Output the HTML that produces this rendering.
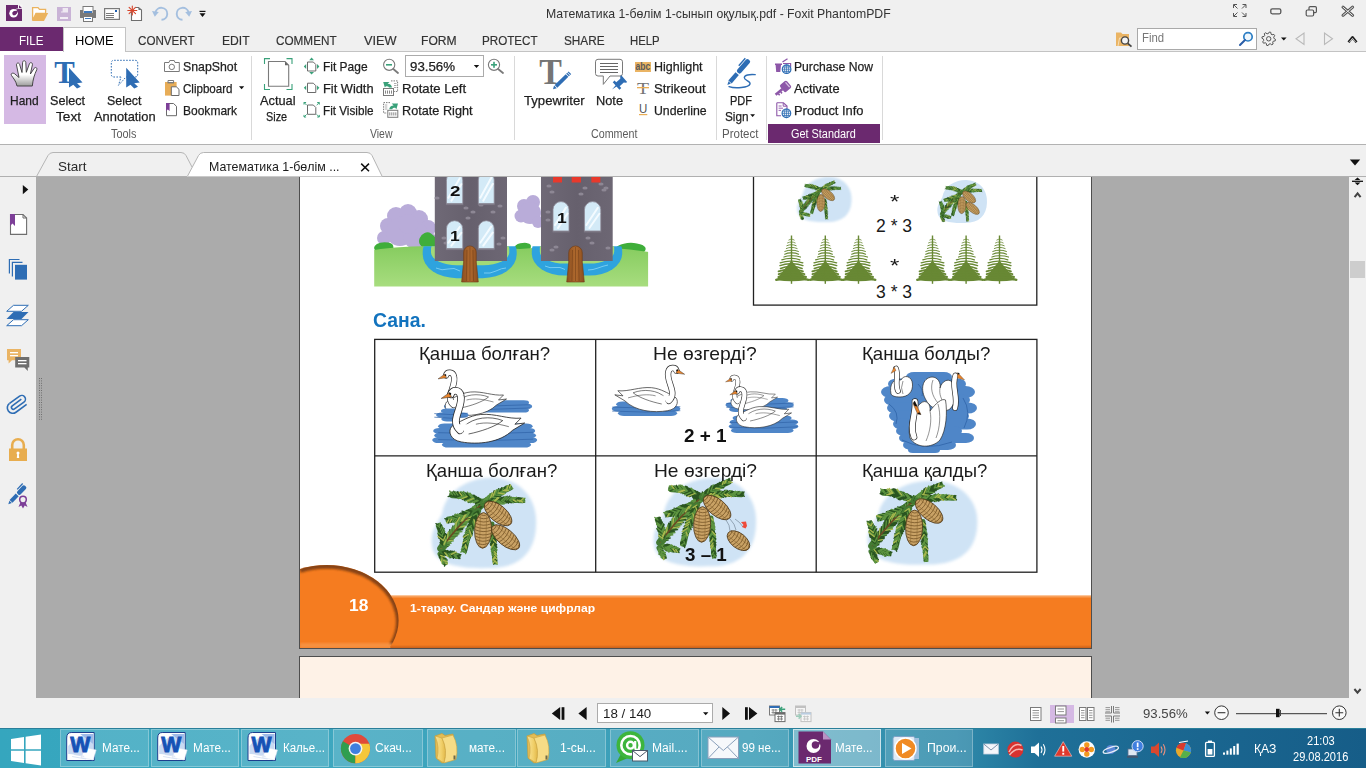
<!DOCTYPE html>
<html lang="kk">
<head>
<meta charset="utf-8">
<title>Foxit PhantomPDF</title>
<style>
*{box-sizing:border-box;margin:0;padding:0}
html,body{width:1366px;height:768px;overflow:hidden;background:#f0f0f0}
body{font-family:"Liberation Sans","DejaVu Sans",sans-serif;font-size:13px;color:#222;position:relative}
.a{position:absolute}
.t{position:absolute;white-space:nowrap;line-height:1;transform-origin:0 50%}
svg.ov{position:absolute;left:0;top:0;width:1366px;height:768px;overflow:hidden;pointer-events:none}
#titlebar{position:absolute;left:0;top:0;width:1366px;height:27px;background:#f0f0f0}
#menurow{position:absolute;left:0;top:27px;width:1366px;height:25px;background:#f0f0f0;border-bottom:1px solid #c3c3c3}
#filetab{position:absolute;left:0;top:0;width:63px;height:24px;background:#6b296f}
#hometab{position:absolute;left:63px;top:0;width:63px;height:25px;background:#fff;border:1px solid #c3c3c3;border-bottom:none}
#findbox{position:absolute;left:1137px;top:1px;width:120px;height:22px;background:#fff;border:1px solid #a9a9a9}
#ribbon{position:absolute;left:0;top:52px;width:1366px;height:93px;background:#fff;border-bottom:1px solid #b2b2b2}
.sep{position:absolute;top:56px;width:1px;height:84px;background:#d9d9d9}
#handbtn{position:absolute;left:4px;top:55px;width:42px;height:69px;background:#d5b9e4}
#zoombox{position:absolute;left:405px;top:55px;width:79px;height:22px;background:#fff;border:1px solid #ababab}
#getstd{position:absolute;left:768px;top:124px;width:112px;height:19px;background:#6b296f}
#tabstrip{position:absolute;left:0;top:145px;width:1366px;height:32px;background:#f0f0f0}
#leftnav{position:absolute;left:0;top:177px;width:36px;height:521px;background:#f0f0f0}
#docclip{position:absolute;left:0;top:0;width:1366px;height:768px;clip-path:inset(177px 17px 70px 36px)}
#docbg{position:absolute;left:36px;top:177px;width:1313px;height:521px;background:#ababab}
#vscroll{position:absolute;left:1349px;top:177px;width:17px;height:521px;background:#f0f0f0}
#status{position:absolute;left:0;top:698px;width:1366px;height:30px;background:#f0f0f0}
#pagebox{position:absolute;left:597px;top:703px;width:116px;height:20px;background:#fff;border:1px solid #ababab}
#taskbar{position:absolute;left:0;top:728px;width:1366px;height:40px;border-top:1px solid #2a7f9a;background:linear-gradient(90deg,#35a6be 0%,#3ea7bf 25%,#3b9cb6 55%,#2f8aaa 70%,#1f7098 76%,#1a6690 88%,#165d88 100%)}
.tb{position:absolute;top:729px;height:38px;background:rgba(255,255,255,.14);border:1px solid rgba(255,255,255,.28)}
.tb.act{background:rgba(255,255,255,.36);border-color:rgba(255,255,255,.6)}

</style>
</head>
<body>
<div id="docbg"></div>
<div id="docclip">
<div class="a" style="left:299px;top:170px;width:793px;height:479px;background:#fff;border:1px solid #4e4e4e"></div>
<div class="a" style="left:299px;top:656px;width:793px;height:60px;background:#fef2e7;border:1px solid #4e4e4e"></div>
<svg class="ov" viewBox="0 0 1366 768"><defs><filter id="soft" x="-10%" y="-10%" width="120%" height="120%"><feGaussianBlur stdDeviation="1.6"/></filter><linearGradient id="grass" x1="0" y1="0" x2="0" y2="1"><stop offset="0" stop-color="#86cc5f"/><stop offset="1" stop-color="#a8dd7f"/></linearGradient><linearGradient id="tw" x1="0" y1="0" x2="1" y2="0"><stop offset="0" stop-color="#6f6976"/><stop offset="0.5" stop-color="#66606d"/><stop offset="1" stop-color="#6d6774"/></linearGradient><linearGradient id="wood" x1="0" y1="0" x2="1" y2="0"><stop offset="0" stop-color="#8a4d1f"/><stop offset="0.5" stop-color="#b06a2e"/><stop offset="1" stop-color="#8a4d1f"/></linearGradient><clipPath id="castleclip"><rect x="374.2" y="170" width="273.9" height="116.5"/></clipPath><clipPath id="pageclip"><rect x="300" y="170" width="791" height="478"/></clipPath></defs>
<g clip-path="url(#castleclip)"><rect x="374.2" y="170" width="273.9" height="116.5" fill="#fff"/><g fill="#b9acd9"><circle cx="396" cy="216" r="9"/><circle cx="408" cy="213" r="9"/><circle cx="419" cy="219" r="9"/><circle cx="428" cy="228" r="8"/><circle cx="388" cy="226" r="8"/><circle cx="384" cy="238" r="7"/><circle cx="400" cy="232" r="14"/><circle cx="416" cy="236" r="13"/><circle cx="430" cy="240" r="7"/><circle cx="408" cy="224" r="10"/></g><g fill="#b9acd9"><circle cx="524" cy="206" r="7"/><circle cx="533" cy="202" r="7"/><circle cx="521" cy="216" r="6.5"/><circle cx="530" cy="213" r="11"/><circle cx="538" cy="222" r="6"/></g><path d="M393.1,245.7 Q393.8,248.0 393.2,250.3 Q392.6,252.7 388.3,253.6 Q384.0,254.5 380.4,253.2 Q376.8,251.9 374.9,250.0 Q373.0,248.0 374.7,245.9 Q376.3,243.8 380.2,242.8 Q384.0,241.7 388.2,242.6 Q392.5,243.4 393.1,245.7 Z" fill="#3fae3a"/><path d="M436.1,238.7 Q438.2,242.0 436.7,246.0 Q435.2,250.0 431.6,250.3 Q428.0,250.7 425.2,249.4 Q422.4,248.2 420.3,245.1 Q418.1,242.0 419.6,238.2 Q421.2,234.4 424.6,233.0 Q428.0,231.5 431.0,233.4 Q434.0,235.3 436.1,238.7 Z" fill="#3fae3a"/><path d="M530.7,245.1 Q531.3,247.0 530.4,248.8 Q529.4,250.6 526.2,251.2 Q523.0,251.8 519.7,251.2 Q516.4,250.6 515.0,248.8 Q513.7,247.0 515.6,245.5 Q517.5,243.9 520.2,243.3 Q523.0,242.7 526.5,242.9 Q530.0,243.1 530.7,245.1 Z" fill="#3fae3a"/><path d="M645.2,247.3 Q646.6,250.0 643.9,252.2 Q641.2,254.4 635.6,255.6 Q630.0,256.8 624.3,255.6 Q618.6,254.4 616.5,252.2 Q614.3,250.0 616.0,247.6 Q617.6,245.2 623.8,243.7 Q630.0,242.1 636.9,243.4 Q643.9,244.6 645.2,247.3 Z" fill="#3fae3a"/><path d="M606.9,247.6 Q608.3,249.0 607.2,250.5 Q606.1,252.0 603.0,252.7 Q600.0,253.4 596.8,252.8 Q593.6,252.2 592.5,250.6 Q591.4,249.0 592.5,247.4 Q593.6,245.8 596.8,245.7 Q600.0,245.6 602.8,245.9 Q605.6,246.2 606.9,247.6 Z" fill="#3fae3a"/><path d="M374,250 Q400,246 440,246 L520,249 Q585,243 649,252 V287 H374 Z" fill="url(#grass)"/><clipPath id="moatclip"><rect x="374" y="246.3" width="280" height="50"/></clipPath><g clip-path="url(#moatclip)"><rect x="422.7" y="228" width="94" height="50.2" rx="34" ry="24" fill="#2ea3de"/><rect x="431" y="236" width="78.3" height="29.2" rx="26" ry="13" fill="#a2da78"/><rect x="531.8" y="229" width="90.4" height="46.6" rx="33" ry="22" fill="#2ea3de"/><rect x="539.8" y="236" width="74.4" height="27.6" rx="25" ry="12" fill="#a2da78"/></g><path d="M436,268 q6,3 12,1 t12,2 M484,273 q6,1 12,-2 t10,-3 M545,266 q5,2.5 10,1.5 t10,2 M588,270 q5,0 10,-2 t10,-3" fill="none" stroke="#7fd0f3" stroke-width="0.9"/><rect x="434.8" y="170" width="72.19999999999999" height="91" fill="url(#tw)"/><rect x="541" y="170" width="71.70000000000005" height="91" fill="url(#tw)"/><g fill="#8d8794"><ellipse cx="466" cy="208" rx="2.6" ry="1.5"/><ellipse cx="473" cy="212" rx="2.6" ry="1.5"/><ellipse cx="468" cy="218" rx="2.6" ry="1.5"/><ellipse cx="481" cy="205" rx="2.6" ry="1.5"/><ellipse cx="493" cy="212" rx="2.6" ry="1.5"/><ellipse cx="500" cy="206" rx="2.6" ry="1.5"/><ellipse cx="444" cy="238" rx="2.6" ry="1.5"/><ellipse cx="446" cy="243" rx="2.6" ry="1.5"/><ellipse cx="503" cy="238" rx="2.6" ry="1.5"/><ellipse cx="499" cy="244" rx="2.6" ry="1.5"/><ellipse cx="437" cy="198" rx="2.6" ry="1.5"/><ellipse cx="549" cy="186" rx="2.6" ry="1.5"/><ellipse cx="552" cy="192" rx="2.6" ry="1.5"/><ellipse cx="585" cy="188" rx="2.6" ry="1.5"/><ellipse cx="581" cy="194" rx="2.6" ry="1.5"/><ellipse cx="606" cy="188" rx="2.6" ry="1.5"/><ellipse cx="601" cy="184" rx="2.6" ry="1.5"/><ellipse cx="604" cy="190" rx="2.6" ry="1.5"/><ellipse cx="588" cy="238" rx="2.6" ry="1.5"/><ellipse cx="592" cy="243" rx="2.6" ry="1.5"/><ellipse cx="556" cy="247" rx="2.6" ry="1.5"/><ellipse cx="552" cy="250" rx="2.6" ry="1.5"/><ellipse cx="608" cy="248" rx="2.6" ry="1.5"/><ellipse cx="548" cy="212" rx="2.6" ry="1.5"/><ellipse cx="548" cy="220" rx="2.6" ry="1.5"/></g><path d="M446.4,203.7 V180.20000000000002 A8.200000000000017,8.200000000000017 0 0 1 462.8,180.20000000000002 V203.7 Z" fill="#d3eaf7" stroke="#8a8592" stroke-width="0.8"/><path d="M448.4,197.7 L459.8,178.20000000000002 M451.4,200.7 L461.3,184.20000000000002" stroke="#f4fbff" stroke-width="2" fill="none" stroke-linecap="round"/><rect x="445.9" y="203.7" width="17.400000000000034" height="1.4" fill="#7f7a87"/><path d="M478.3,203.7 V179.95 A7.949999999999989,7.949999999999989 0 0 1 494.2,179.95 V203.7 Z" fill="#d3eaf7" stroke="#8a8592" stroke-width="0.8"/><path d="M480.3,197.7 L491.2,177.95 M483.3,200.7 L492.7,183.95" stroke="#f4fbff" stroke-width="2" fill="none" stroke-linecap="round"/><rect x="477.8" y="203.7" width="16.899999999999977" height="1.4" fill="#7f7a87"/><path d="M446.4,248.7 V228.9 A8.200000000000017,8.200000000000017 0 0 1 462.8,228.9 V248.7 Z" fill="#d3eaf7" stroke="#8a8592" stroke-width="0.8"/><path d="M448.4,242.7 L459.8,226.9 M451.4,245.7 L461.3,232.9" stroke="#f4fbff" stroke-width="2" fill="none" stroke-linecap="round"/><rect x="445.9" y="248.7" width="17.400000000000034" height="1.4" fill="#7f7a87"/><path d="M478.3,248.7 V228.64999999999998 A7.949999999999989,7.949999999999989 0 0 1 494.2,228.64999999999998 V248.7 Z" fill="#d3eaf7" stroke="#8a8592" stroke-width="0.8"/><path d="M480.3,242.7 L491.2,226.64999999999998 M483.3,245.7 L492.7,232.64999999999998" stroke="#f4fbff" stroke-width="2" fill="none" stroke-linecap="round"/><rect x="477.8" y="248.7" width="16.899999999999977" height="1.4" fill="#7f7a87"/><path d="M553,231 V209.6 A8.0,8.0 0 0 1 569,209.6 V231 Z" fill="#d3eaf7" stroke="#8a8592" stroke-width="0.8"/><path d="M555,225 L566,207.6 M558,228 L567.5,213.6" stroke="#f4fbff" stroke-width="2" fill="none" stroke-linecap="round"/><rect x="552.5" y="231" width="17" height="1.4" fill="#7f7a87"/><path d="M584.4,231 V209.79999999999998 A8.199999999999989,8.199999999999989 0 0 1 600.8,209.79999999999998 V231 Z" fill="#d3eaf7" stroke="#8a8592" stroke-width="0.8"/><path d="M586.4,225 L597.8,207.79999999999998 M589.4,228 L599.3,213.79999999999998" stroke="#f4fbff" stroke-width="2" fill="none" stroke-linecap="round"/><rect x="583.9" y="231" width="17.399999999999977" height="1.4" fill="#7f7a87"/><g fill="#e8392c"><rect x="553" y="170" width="9" height="12.5"/><rect x="571.7" y="170" width="9.3" height="12.5"/><rect x="591.4" y="170" width="9" height="12.5"/></g><path d="M463.6,262 V252.35 A6.349999999999994,6.349999999999994 0 0 1 476.3,252.35 V262 L478.3,282 H461.6 Z" fill="url(#wood)" stroke="#6e3a14" stroke-width="0.6"/><path d="M466.95000000000005,250 L466.35,281 M469.95000000000005,247 V281 M472.95000000000005,250 L473.55000000000007,281" stroke="#74401a" stroke-width="0.6" fill="none"/><path d="M568.7,262 V252.79999999999995 A6.7999999999999545,6.7999999999999545 0 0 1 582.3,252.79999999999995 V262 L584.3,282 H566.7 Z" fill="url(#wood)" stroke="#6e3a14" stroke-width="0.6"/><path d="M572.5,250 L571.9,281 M575.5,247 V281 M578.5,250 L579.1,281" stroke="#74401a" stroke-width="0.6" fill="none"/></g>
<rect x="753.5" y="165" width="283.3" height="140.1" fill="none" stroke="#222" stroke-width="1.3"/>
<g transform="translate(798.5,180) scale(0.52,0.5)"><path d="M8,30 C12,4 40,-8 62,-6 C88,-4 104,16 102,42 C101,68 86,84 56,84 C30,85 0,82 -2,62 C-4,48 2,42 8,30 Z" fill="#cfe3f5" filter="url(#soft)"/></g>
<g transform="translate(797.3,180.6) scale(0.48)"><path d="M7.3,64.5 Q25.2,39.0 49.0,19.0" stroke="#447a33" stroke-width="8.1" fill="none" stroke-linecap="round"/><path d="M8.0,63.4 l5.3,-0.9 M8.8,62.4 l0.4,-5.0 M9.6,61.3 l7.0,-1.2 M10.3,60.3 l0.5,-5.6 M11.1,59.3 l0.5,-5.8 M11.1,59.3 l7.7,-1.3 M11.9,58.2 l7.3,-1.2 M12.6,57.2 l0.5,-6.0 M12.6,57.2 l7.6,-1.3 M13.4,56.2 l0.5,-6.5 M13.4,56.2 l6.6,-1.1 M14.2,55.1 l0.5,-6.0 M14.2,55.1 l6.6,-1.1 M15.0,54.1 l8.4,-1.4 M15.8,53.1 l0.5,-6.2 M16.6,52.1 l0.6,-7.5 M18.2,50.1 l0.5,-6.2 M19.1,49.1 l0.6,-7.7 M19.1,49.1 l7.0,-1.2 M19.9,48.1 l7.6,-1.3 M21.6,46.2 l0.6,-7.0 M21.6,46.2 l8.8,-1.5 M22.4,45.2 l0.6,-7.8 M23.2,44.2 l7.3,-1.2 M24.1,43.3 l0.7,-8.0 M24.1,43.3 l8.0,-1.4 M24.9,42.3 l0.5,-6.0 M24.9,42.3 l6.1,-1.0 M26.7,40.4 l0.6,-7.5 M26.7,40.4 l7.1,-1.2 M27.5,39.5 l0.5,-6.0 M27.5,39.5 l7.5,-1.3 M28.4,38.5 l0.6,-7.8 M29.3,37.6 l0.5,-5.5 M30.2,36.6 l5.6,-1.0 M31.1,35.7 l5.8,-1.0 M32.9,33.9 l0.5,-5.9 M32.9,33.9 l6.1,-1.1 M33.8,33.0 l0.6,-6.8 M34.7,32.1 l0.5,-5.7 M34.7,32.1 l6.7,-1.1 M35.6,31.2 l0.5,-5.5 M35.6,31.2 l4.7,-0.8 M36.5,30.3 l0.5,-5.8 M37.5,29.4 l5.1,-0.9 M38.4,28.5 l4.1,-0.7 M40.3,26.7 l3.7,-0.6 M41.2,25.8 l0.5,-5.6 M43.1,24.1 l0.3,-3.8 M45.1,22.4 l4.1,-0.7 M46.0,21.5 l0.4,-4.3 M46.0,21.5 l5.0,-0.9 M48.0,19.8 l0.4,-5.1 M48.0,19.8 l4.2,-0.7 " stroke="#2a5520" stroke-width="1.3" fill="none" stroke-linecap="round"/><path d="M7.3,64.5 l0.4,-5.3 M8.8,62.4 l4.9,-0.8 M9.6,61.3 l0.5,-6.0 M10.3,60.3 l5.2,-0.9 M15.0,54.1 l0.6,-7.4 M15.8,53.1 l6.5,-1.1 M16.6,52.1 l6.2,-1.1 M17.4,51.1 l0.7,-8.0 M17.4,51.1 l8.2,-1.4 M18.2,50.1 l7.5,-1.3 M20.7,47.1 l0.5,-6.5 M20.7,47.1 l6.7,-1.1 M22.4,45.2 l7.5,-1.3 M25.8,41.3 l0.6,-7.7 M25.8,41.3 l8.6,-1.5 M28.4,38.5 l6.4,-1.1 M29.3,37.6 l6.3,-1.1 M31.1,35.7 l0.5,-6.5 M32.0,34.8 l0.6,-7.0 M36.5,30.3 l5.9,-1.0 M38.4,28.5 l0.3,-4.0 M39.3,27.6 l0.4,-5.0 M39.3,27.6 l5.2,-0.9 M41.2,25.8 l5.2,-0.9 M42.2,25.0 l0.4,-4.9 M42.2,25.0 l4.5,-0.8 M43.1,24.1 l5.1,-0.9 M44.1,23.2 l0.4,-4.9 M44.1,23.2 l4.2,-0.7 M45.1,22.4 l0.4,-4.8 M47.0,20.7 l0.3,-3.8 M47.0,20.7 l4.6,-0.8 M49.0,19.0 l0.5,-5.5 M49.0,19.0 l5.5,-0.9 " stroke="#5d9440" stroke-width="1.3" fill="none" stroke-linecap="round"/><path d="M7.3,64.5 l4.5,-0.8 M8.0,63.4 l0.6,-6.8 M11.9,58.2 l0.7,-8.2 M19.9,48.1 l0.7,-8.9 M23.2,44.2 l0.6,-7.6 M30.2,36.6 l0.5,-6.0 M32.0,34.8 l6.5,-1.1 M33.8,33.0 l4.9,-0.8 M37.5,29.4 l0.5,-5.5 M40.3,26.7 l0.4,-4.3 " stroke="#a9b94e" stroke-width="1.3" fill="none" stroke-linecap="round"/><path d="M7.3,64.5 Q25.2,39.0 49.0,19.0" stroke="#6b4a24" stroke-width="1.6" fill="none"/><path d="M10.0,62.0 Q9.4,51.5 5.0,42.0" stroke="#447a33" stroke-width="6.2" fill="none" stroke-linecap="round"/><path d="M10.0,62.0 l1.6,-3.6 M9.9,60.6 l-3.7,-2.9 M9.8,59.2 l-4.2,-3.3 M9.8,59.2 l2.5,-5.6 M9.6,57.8 l-5.0,-3.9 M9.4,56.5 l2.6,-5.9 M9.2,55.1 l-4.6,-3.6 M9.2,55.1 l2.5,-5.8 M8.9,53.8 l2.6,-6.0 M8.3,51.1 l-3.6,-2.8 M7.5,48.5 l-3.6,-2.8 M6.6,45.8 l1.5,-3.4 M6.1,44.6 l1.2,-2.8 M5.6,43.3 l1.2,-2.7 M5.0,42.0 l1.6,-3.5 " stroke="#2a5520" stroke-width="1.3" fill="none" stroke-linecap="round"/><path d="M9.9,60.6 l1.8,-4.1 M9.6,57.8 l2.4,-5.5 M8.9,53.8 l-3.9,-3.0 M8.6,52.4 l-4.9,-3.9 M8.6,52.4 l1.9,-4.4 M7.9,49.8 l2.1,-4.9 M7.5,48.5 l2.2,-5.0 M7.1,47.1 l-3.2,-2.5 M7.1,47.1 l1.8,-4.2 M6.1,44.6 l-2.9,-2.3 M5.6,43.3 l-2.9,-2.3 M5.0,42.0 l-2.7,-2.1 " stroke="#5d9440" stroke-width="1.3" fill="none" stroke-linecap="round"/><path d="M10.0,62.0 l-3.3,-2.6 M9.4,56.5 l-4.8,-3.8 M8.3,51.1 l2.5,-5.7 M7.9,49.8 l-4.0,-3.2 M6.6,45.8 l-2.6,-2.1 " stroke="#a9b94e" stroke-width="1.3" fill="none" stroke-linecap="round"/><path d="M8.0,68.0 Q16.0,70.0 24.0,72.0" stroke="#447a33" stroke-width="5.6" fill="none" stroke-linecap="round"/><path d="M8.0,68.0 l4.1,-1.8 M9.3,68.3 l3.5,-1.5 M13.3,69.3 l2.9,3.7 M14.7,69.7 l3.3,4.2 M16.0,70.0 l4.0,-1.8 M20.0,71.0 l2.7,-1.2 M21.3,71.3 l3.0,-1.3 M22.7,71.7 l3.0,-1.3 M22.7,71.7 l2.4,3.0 " stroke="#2a5520" stroke-width="1.3" fill="none" stroke-linecap="round"/><path d="M8.0,68.0 l2.2,2.8 M9.3,68.3 l2.9,3.7 M10.7,68.7 l3.9,-1.7 M10.7,68.7 l3.1,3.9 M12.0,69.0 l2.8,3.6 M13.3,69.3 l4.9,-2.2 M14.7,69.7 l4.0,-1.8 M16.0,70.0 l2.7,3.5 M17.3,70.3 l4.2,-1.8 M17.3,70.3 l2.4,3.0 M18.7,70.7 l4.6,-2.0 M18.7,70.7 l2.8,3.6 M20.0,71.0 l1.8,2.3 M21.3,71.3 l1.9,2.5 " stroke="#5d9440" stroke-width="1.3" fill="none" stroke-linecap="round"/><path d="M12.0,69.0 l3.9,-1.7 M24.0,72.0 l3.4,-1.5 M24.0,72.0 l2.2,2.8 " stroke="#a9b94e" stroke-width="1.3" fill="none" stroke-linecap="round"/><path d="M6.0,70.0 Q8.5,74.5 11.0,79.0" stroke="#447a33" stroke-width="5.0" fill="none" stroke-linecap="round"/><path d="M6.0,70.0 l3.0,1.3 M6.7,71.3 l3.8,1.6 M8.1,73.9 l3.5,1.5 M8.9,75.1 l-0.8,4.9 M9.6,76.4 l2.9,1.3 M9.6,76.4 l-0.6,4.1 M10.3,77.7 l2.4,1.0 M10.3,77.7 l-0.4,2.4 M11.0,79.0 l2.1,0.9 M11.0,79.0 l-0.4,2.6 " stroke="#2a5520" stroke-width="1.3" fill="none" stroke-linecap="round"/><path d="M6.7,71.3 l-0.6,4.0 M8.1,73.9 l-0.8,5.5 M8.9,75.1 l3.3,1.4 " stroke="#5d9440" stroke-width="1.3" fill="none" stroke-linecap="round"/><path d="M6.0,70.0 l-0.6,3.8 M7.4,72.6 l5.0,2.1 M7.4,72.6 l-0.8,5.5 " stroke="#a9b94e" stroke-width="1.3" fill="none" stroke-linecap="round"/><path d="M38.0,27.0 Q27.5,34.2 14.8,35.8" stroke="#447a33" stroke-width="6.8" fill="none" stroke-linecap="round"/><path d="M38.0,27.0 l-2.5,4.1 M34.4,29.2 l-2.9,4.8 M34.4,29.2 l-5.2,-1.6 M33.2,29.9 l-3.8,6.2 M33.2,29.9 l-6.5,-2.0 M32.0,30.6 l-6.4,-2.0 M30.7,31.2 l-3.7,6.0 M30.7,31.2 l-7.3,-2.2 M29.5,31.8 l-4.1,6.6 M29.5,31.8 l-6.1,-1.9 M28.2,32.3 l-3.5,5.7 M28.2,32.3 l-5.0,-1.5 M26.9,32.8 l-5.0,-1.5 M25.6,33.3 l-3.1,5.1 M25.6,33.3 l-6.7,-2.1 M24.3,33.7 l-3.0,4.8 M21.7,34.5 l-2.4,3.9 M20.3,34.8 l-2.6,4.2 M20.3,34.8 l-3.1,-1.0 M19.0,35.1 l-2.3,3.7 M19.0,35.1 l-3.4,-1.0 M17.6,35.4 l-3.6,-1.1 M16.2,35.6 l-2.1,3.4 M16.2,35.6 l-4.5,-1.4 M14.8,35.8 l-2.0,3.2 " stroke="#2a5520" stroke-width="1.3" fill="none" stroke-linecap="round"/><path d="M38.0,27.0 l-3.8,-1.2 M36.8,27.8 l-3.0,4.9 M36.8,27.8 l-5.1,-1.5 M35.6,28.5 l-3.5,5.7 M35.6,28.5 l-5.1,-1.6 M26.9,32.8 l-2.6,4.3 M24.3,33.7 l-4.7,-1.4 M23.0,34.1 l-2.9,4.7 M21.7,34.5 l-3.8,-1.2 M17.6,35.4 l-2.2,3.6 M14.8,35.8 l-3.8,-1.2 " stroke="#5d9440" stroke-width="1.3" fill="none" stroke-linecap="round"/><path d="M32.0,30.6 l-2.7,4.4 M23.0,34.1 l-5.8,-1.8 " stroke="#a9b94e" stroke-width="1.3" fill="none" stroke-linecap="round"/><path d="M44.0,27.0 Q34.4,45.4 30.4,65.8" stroke="#447a33" stroke-width="6.2" fill="none" stroke-linecap="round"/><path d="M44.0,27.0 l1.6,4.8 M43.4,28.2 l1.3,4.0 M43.4,28.2 l-3.2,2.1 M42.2,30.6 l1.5,4.6 M42.2,30.6 l-4.9,3.2 M41.6,31.8 l1.5,4.4 M41.6,31.8 l-5.4,3.5 M41.0,33.0 l2.0,6.0 M40.5,34.2 l1.7,5.0 M40.5,34.2 l-3.9,2.5 M39.9,35.4 l-5.6,3.6 M39.4,36.6 l2.2,6.6 M38.9,37.9 l-5.9,3.8 M38.4,39.1 l2.2,6.5 M38.4,39.1 l-4.9,3.2 M37.9,40.3 l1.8,5.5 M37.4,41.5 l2.0,6.0 M37.4,41.5 l-5.6,3.6 M36.9,42.8 l1.9,5.7 M36.9,42.8 l-5.3,3.4 M36.5,44.0 l2.1,6.4 M36.0,45.3 l1.4,4.3 M35.6,46.5 l1.5,4.3 M35.6,46.5 l-5.0,3.3 M35.1,47.8 l2.0,6.0 M35.1,47.8 l-3.8,2.5 M34.7,49.0 l1.6,4.8 M34.7,49.0 l-4.3,2.8 M34.3,50.3 l1.6,4.9 M34.3,50.3 l-3.7,2.4 M33.9,51.6 l1.4,4.2 M33.5,52.9 l1.7,5.0 M33.2,54.1 l-2.9,1.9 M32.8,55.4 l1.4,4.3 M32.8,55.4 l-2.7,1.8 M32.5,56.7 l1.4,4.1 M32.1,58.0 l1.1,3.4 M32.1,58.0 l-2.8,1.8 M31.8,59.3 l1.3,4.0 M31.8,59.3 l-3.0,1.9 M31.5,60.6 l-3.2,2.1 M31.2,61.9 l-3.1,2.0 M30.9,63.2 l1.0,3.0 M30.7,64.5 l1.3,3.9 M30.7,64.5 l-2.9,1.9 " stroke="#2a5520" stroke-width="1.3" fill="none" stroke-linecap="round"/><path d="M44.0,27.0 l-4.4,2.9 M42.8,29.4 l1.7,5.0 M42.8,29.4 l-3.6,2.3 M41.0,33.0 l-5.1,3.3 M39.9,35.4 l1.7,5.0 M39.4,36.6 l-4.9,3.2 M37.9,40.3 l-4.8,3.1 M33.9,51.6 l-4.8,3.1 M33.5,52.9 l-3.2,2.1 M32.5,56.7 l-3.7,2.4 M31.5,60.6 l1.2,3.5 M31.2,61.9 l1.2,3.6 M30.9,63.2 l-3.2,2.1 M30.4,65.8 l1.2,3.5 M30.4,65.8 l-2.7,1.7 " stroke="#5d9440" stroke-width="1.3" fill="none" stroke-linecap="round"/><path d="M38.9,37.9 l2.2,6.6 M36.5,44.0 l-4.7,3.0 M36.0,45.3 l-5.2,3.4 M33.2,54.1 l1.5,4.5 " stroke="#a9b94e" stroke-width="1.3" fill="none" stroke-linecap="round"/><path d="M58.0,40.0 Q59.5,59.0 61.0,78.0" stroke="#447a33" stroke-width="5.0" fill="none" stroke-linecap="round"/><path d="M58.0,40.0 l2.0,2.2 M58.0,40.0 l-1.7,2.6 M58.1,41.3 l2.7,3.0 M58.1,41.3 l-1.9,3.0 M58.2,42.6 l3.2,3.5 M58.2,42.6 l-2.0,3.0 M58.3,43.9 l3.2,3.5 M58.3,43.9 l-2.6,3.9 M58.5,46.6 l-2.4,3.6 M58.6,47.9 l2.5,2.7 M58.6,47.9 l-2.1,3.2 M58.7,49.2 l2.8,3.1 M58.7,49.2 l-2.8,4.2 M58.8,50.5 l2.7,3.0 M58.9,51.8 l3.8,4.1 M59.0,53.1 l-3.2,4.8 M59.1,54.4 l3.5,3.8 M59.2,55.7 l3.2,3.5 M59.2,55.7 l-2.8,4.3 M59.6,59.7 l3.3,3.6 M59.6,59.7 l-2.4,3.6 M59.7,61.0 l2.7,3.0 M59.8,62.3 l-2.2,3.4 M59.9,63.6 l2.2,2.4 M59.9,63.6 l-2.2,3.4 M60.0,64.9 l3.1,3.4 M60.0,64.9 l-2.1,3.2 M60.1,66.2 l-1.8,2.7 M60.2,67.5 l2.5,2.7 M60.2,67.5 l-2.2,3.3 M60.3,68.8 l1.9,2.1 M60.3,68.8 l-1.8,2.7 M60.4,70.1 l-1.3,1.9 M60.5,71.4 l2.1,2.3 M60.5,71.4 l-1.8,2.8 M60.6,72.8 l1.8,2.0 M60.6,72.8 l-1.8,2.7 M60.7,74.1 l-1.8,2.8 M60.8,75.4 l1.7,1.9 M61.0,78.0 l2.1,2.4 M61.0,78.0 l-1.6,2.4 " stroke="#2a5520" stroke-width="1.3" fill="none" stroke-linecap="round"/><path d="M58.5,46.6 l2.8,3.1 M58.8,50.5 l-2.8,4.2 M59.1,54.4 l-3.0,4.5 M59.3,57.0 l-3.1,4.7 M59.4,58.3 l-2.0,3.0 M59.7,61.0 l-2.6,4.0 M59.8,62.3 l3.1,3.4 M60.1,66.2 l2.1,2.3 M60.7,74.1 l1.8,1.9 M60.8,75.4 l-1.7,2.6 M60.9,76.7 l-1.5,2.3 " stroke="#5d9440" stroke-width="1.3" fill="none" stroke-linecap="round"/><path d="M58.4,45.2 l2.6,2.9 M58.4,45.2 l-1.9,2.9 M58.9,51.8 l-2.3,3.5 M59.0,53.1 l2.9,3.2 M59.3,57.0 l2.9,3.2 M59.4,58.3 l2.6,2.8 M60.4,70.1 l2.2,2.4 M60.9,76.7 l1.9,2.1 " stroke="#a9b94e" stroke-width="1.3" fill="none" stroke-linecap="round"/><path d="M49.0,19.0 Q34.8,11.0 18.5,10.8" stroke="#447a33" stroke-width="6.8" fill="none" stroke-linecap="round"/><path d="M49.0,19.0 l-3.6,-4.7 M47.8,18.3 l-4.9,2.1 M46.6,17.7 l-3.6,-4.8 M45.4,17.1 l-3.8,-5.0 M44.2,16.6 l-6.3,2.7 M44.2,16.6 l-4.1,-5.4 M43.0,16.0 l-5.3,2.2 M43.0,16.0 l-3.7,-4.8 M41.8,15.5 l-5.5,2.3 M40.5,15.0 l-5.6,2.4 M38.0,14.1 l-5.3,2.2 M38.0,14.1 l-3.8,-5.0 M36.8,13.7 l-6.9,2.9 M36.8,13.7 l-3.2,-4.2 M34.3,13.0 l-6.8,2.8 M34.3,13.0 l-4.2,-5.5 M33.0,12.6 l-6.6,2.7 M31.7,12.3 l-4.3,1.8 M31.7,12.3 l-3.2,-4.2 M30.4,12.1 l-6.0,2.5 M30.4,12.1 l-3.7,-4.9 M29.1,11.8 l-5.4,2.3 M23.9,11.1 l-2.4,-3.2 M21.2,10.9 l-2.2,-2.9 M19.9,10.8 l-3.1,1.3 M18.5,10.8 l-3.1,1.3 " stroke="#2a5520" stroke-width="1.3" fill="none" stroke-linecap="round"/><path d="M49.0,19.0 l-3.7,1.6 M47.8,18.3 l-3.5,-4.6 M45.4,17.1 l-5.1,2.1 M41.8,15.5 l-4.5,-5.9 M39.3,14.5 l-7.1,3.0 M35.5,13.3 l-4.7,2.0 M35.5,13.3 l-3.8,-5.0 M27.8,11.6 l-3.5,1.5 M27.8,11.6 l-2.5,-3.3 M26.5,11.4 l-3.7,1.6 M26.5,11.4 l-2.8,-3.8 M25.2,11.2 l-3.1,1.3 M25.2,11.2 l-2.2,-2.8 M23.9,11.1 l-4.1,1.7 M22.5,11.0 l-3.1,1.3 M22.5,11.0 l-2.5,-3.3 M21.2,10.9 l-4.3,1.8 M19.9,10.8 l-2.7,-3.6 M18.5,10.8 l-2.3,-3.0 " stroke="#5d9440" stroke-width="1.3" fill="none" stroke-linecap="round"/><path d="M46.6,17.7 l-5.3,2.2 M40.5,15.0 l-3.4,-4.5 M39.3,14.5 l-3.4,-4.5 M33.0,12.6 l-3.5,-4.7 M29.1,11.8 l-2.6,-3.4 " stroke="#a9b94e" stroke-width="1.3" fill="none" stroke-linecap="round"/><path d="M49.0,19.0 Q61.2,9.7 75.4,3.9" stroke="#447a33" stroke-width="6.2" fill="none" stroke-linecap="round"/><path d="M49.0,19.0 l1.5,-3.7 M49.0,19.0 l4.5,0.6 M50.1,18.2 l1.9,-4.6 M50.1,18.2 l4.8,0.7 M51.1,17.4 l1.6,-3.9 M51.1,17.4 l5.6,0.8 M52.2,16.6 l1.9,-4.6 M52.2,16.6 l5.4,0.8 M53.3,15.9 l5.7,0.8 M55.5,14.4 l5.1,0.7 M56.6,13.7 l2.6,-6.2 M56.6,13.7 l5.3,0.7 M57.7,13.0 l2.5,-6.1 M60.0,11.6 l1.9,-4.6 M62.3,10.3 l1.8,-4.5 M62.3,10.3 l6.2,0.9 M63.4,9.6 l4.3,0.6 M64.6,9.0 l1.8,-4.4 M65.8,8.4 l2.1,-5.0 M65.8,8.4 l4.3,0.6 M66.9,7.8 l1.5,-3.7 M68.1,7.2 l4.7,0.7 M69.3,6.6 l1.4,-3.5 M69.3,6.6 l3.2,0.5 M71.7,5.5 l1.5,-3.7 M72.9,4.9 l3.8,0.5 M74.2,4.4 l1.7,-4.0 M74.2,4.4 l3.0,0.4 M75.4,3.9 l4.3,0.6 " stroke="#2a5520" stroke-width="1.3" fill="none" stroke-linecap="round"/><path d="M54.4,15.1 l2.5,-6.1 M54.4,15.1 l5.6,0.8 M57.7,13.0 l5.1,0.7 M58.9,12.3 l1.9,-4.5 M60.0,11.6 l5.7,0.8 M61.1,10.9 l2.2,-5.3 M61.1,10.9 l5.0,0.7 M63.4,9.6 l1.7,-4.0 M66.9,7.8 l4.4,0.6 M70.5,6.0 l1.1,-2.8 M70.5,6.0 l3.1,0.4 M71.7,5.5 l3.8,0.5 M72.9,4.9 l1.4,-3.5 " stroke="#5d9440" stroke-width="1.3" fill="none" stroke-linecap="round"/><path d="M53.3,15.9 l2.4,-5.9 M55.5,14.4 l2.6,-6.3 M58.9,12.3 l4.8,0.7 M64.6,9.0 l4.2,0.6 M68.1,7.2 l1.3,-3.1 M75.4,3.9 l1.5,-3.7 " stroke="#a9b94e" stroke-width="1.3" fill="none" stroke-linecap="round"/><path d="M52.0,19.0 Q70.0,14.7 88.5,16.4" stroke="#447a33" stroke-width="5.6" fill="none" stroke-linecap="round"/><path d="M52.0,19.0 l3.4,-3.1 M52.0,19.0 l2.8,1.9 M53.3,18.7 l4.2,2.8 M54.6,18.4 l3.2,-2.9 M54.6,18.4 l4.4,2.9 M55.9,18.1 l3.2,-2.9 M55.9,18.1 l3.1,2.1 M58.5,17.7 l3.6,-3.2 M61.0,17.2 l4.8,3.2 M62.3,17.0 l5.3,3.5 M63.6,16.9 l4.3,-3.9 M64.9,16.7 l4.3,2.9 M66.2,16.6 l4.2,-3.7 M66.2,16.6 l5.2,3.5 M67.5,16.4 l4.5,-4.0 M68.8,16.3 l4.1,-3.7 M68.8,16.3 l4.7,3.1 M70.1,16.2 l4.1,-3.7 M70.1,16.2 l4.0,2.7 M71.4,16.1 l3.8,-3.4 M71.4,16.1 l4.1,2.8 M72.8,16.0 l3.9,-3.5 M72.8,16.0 l4.3,2.9 M74.1,16.0 l3.9,-3.5 M74.1,16.0 l3.8,2.5 M75.4,16.0 l3.7,-3.3 M78.0,15.9 l3.4,-3.0 M79.3,15.9 l3.4,2.3 M80.6,15.9 l2.6,-2.4 M81.9,16.0 l2.9,2.0 M83.2,16.0 l2.6,-2.4 M83.2,16.0 l2.7,1.8 M85.9,16.2 l2.9,2.0 M87.2,16.3 l2.5,-2.2 M88.5,16.4 l2.1,-1.9 " stroke="#2a5520" stroke-width="1.3" fill="none" stroke-linecap="round"/><path d="M53.3,18.7 l2.9,-2.6 M57.2,17.9 l3.1,-2.7 M58.5,17.7 l5.0,3.4 M61.0,17.2 l4.0,-3.6 M62.3,17.0 l3.2,-2.8 M63.6,16.9 l4.3,2.8 M64.9,16.7 l4.2,-3.7 M75.4,16.0 l3.1,2.0 M76.7,15.9 l3.5,-3.1 M76.7,15.9 l3.6,2.4 M79.3,15.9 l2.9,-2.6 M80.6,15.9 l3.3,2.2 M81.9,16.0 l2.5,-2.2 M84.5,16.1 l2.5,-2.2 M84.5,16.1 l3.2,2.1 M85.9,16.2 l2.6,-2.3 M87.2,16.3 l2.3,1.5 M88.5,16.4 l2.4,1.6 " stroke="#5d9440" stroke-width="1.3" fill="none" stroke-linecap="round"/><path d="M57.2,17.9 l3.9,2.6 M59.7,17.4 l3.0,-2.7 M59.7,17.4 l4.9,3.3 M67.5,16.4 l3.8,2.5 M78.0,15.9 l2.6,1.8 " stroke="#a9b94e" stroke-width="1.3" fill="none" stroke-linecap="round"/><g transform="translate(64.1,29.5) rotate(-50)"><ellipse cx="0" cy="0" rx="8.2" ry="16.5" fill="#c9a265" stroke="#4a3517" stroke-width="0.8"/><path d="M-4.0,-15.2 Q0,-12.0 4.0,-15.2" fill="none" stroke="#6b4a1f" stroke-width="0.7"/><path d="M-6.0,-11.9 Q0,-8.7 6.0,-11.9" fill="none" stroke="#6b4a1f" stroke-width="0.7"/><path d="M-7.0,-8.6 Q0,-5.4 7.0,-8.6" fill="none" stroke="#6b4a1f" stroke-width="0.7"/><path d="M-7.6,-5.3 Q0,-2.1 7.6,-5.3" fill="none" stroke="#6b4a1f" stroke-width="0.7"/><path d="M-7.9,-2.0 Q0,1.2 7.9,-2.0" fill="none" stroke="#6b4a1f" stroke-width="0.7"/><path d="M-7.8,1.3 Q0,4.5 7.8,1.3" fill="none" stroke="#6b4a1f" stroke-width="0.7"/><path d="M-7.4,4.6 Q0,7.8 7.4,4.6" fill="none" stroke="#6b4a1f" stroke-width="0.7"/><path d="M-6.7,7.9 Q0,11.1 6.7,7.9" fill="none" stroke="#6b4a1f" stroke-width="0.7"/><path d="M-5.3,11.2 Q0,14.4 5.3,11.2" fill="none" stroke="#6b4a1f" stroke-width="0.7"/><path d="M-2.7,14.5 Q0,17.7 2.7,14.5" fill="none" stroke="#6b4a1f" stroke-width="0.7"/><path d="M-3.0,-13.9 V13.9 M3.0,-13.9 V13.9" stroke="#8a6730" stroke-width="0.5" fill="none"/></g><g transform="translate(49.1,46.4) rotate(2)"><ellipse cx="0" cy="0" rx="8.5" ry="17.8" fill="#c9a265" stroke="#4a3517" stroke-width="0.8"/><path d="M-4.0,-16.5 Q0,-13.3 4.0,-16.5" fill="none" stroke="#6b4a1f" stroke-width="0.7"/><path d="M-5.9,-13.3 Q0,-10.1 5.9,-13.3" fill="none" stroke="#6b4a1f" stroke-width="0.7"/><path d="M-7.0,-10.0 Q0,-6.8 7.0,-10.0" fill="none" stroke="#6b4a1f" stroke-width="0.7"/><path d="M-7.7,-6.8 Q0,-3.6 7.7,-6.8" fill="none" stroke="#6b4a1f" stroke-width="0.7"/><path d="M-8.1,-3.6 Q0,-0.4 8.1,-3.6" fill="none" stroke="#6b4a1f" stroke-width="0.7"/><path d="M-8.2,-0.4 Q0,2.8 8.2,-0.4" fill="none" stroke="#6b4a1f" stroke-width="0.7"/><path d="M-8.0,2.9 Q0,6.1 8.0,2.9" fill="none" stroke="#6b4a1f" stroke-width="0.7"/><path d="M-7.5,6.1 Q0,9.3 7.5,6.1" fill="none" stroke="#6b4a1f" stroke-width="0.7"/><path d="M-6.6,9.3 Q0,12.5 6.6,9.3" fill="none" stroke="#6b4a1f" stroke-width="0.7"/><path d="M-5.3,12.6 Q0,15.8 5.3,12.6" fill="none" stroke="#6b4a1f" stroke-width="0.7"/><path d="M-2.7,15.8 Q0,19.0 2.7,15.8" fill="none" stroke="#6b4a1f" stroke-width="0.7"/><path d="M-3.1,-14.9 V14.9 M3.1,-14.9 V14.9" stroke="#8a6730" stroke-width="0.5" fill="none"/></g></g>
<g transform="translate(938.5,183) scale(0.475,0.475)"><path d="M8,30 C12,4 40,-8 62,-6 C88,-4 104,16 102,42 C101,68 86,84 56,84 C30,85 0,82 -2,62 C-4,48 2,42 8,30 Z" fill="#cfe3f5" filter="url(#soft)"/></g>
<g transform="translate(938.3,182.8) scale(0.48)"><path d="M7.3,64.5 Q25.2,39.0 49.0,19.0" stroke="#447a33" stroke-width="8.1" fill="none" stroke-linecap="round"/><path d="M7.3,64.5 l0.5,-5.8 M7.3,64.5 l5.8,-1.0 M8.0,63.4 l0.6,-6.8 M8.8,62.4 l5.6,-1.0 M9.6,61.3 l0.5,-5.8 M9.6,61.3 l5.2,-0.9 M11.1,59.3 l0.6,-7.5 M11.9,58.2 l6.1,-1.0 M13.4,56.2 l0.6,-6.7 M14.2,55.1 l0.7,-7.9 M14.2,55.1 l5.9,-1.0 M15.0,54.1 l0.6,-6.8 M15.8,53.1 l0.5,-6.6 M15.8,53.1 l6.4,-1.1 M16.6,52.1 l0.7,-8.3 M16.6,52.1 l9.0,-1.5 M17.4,51.1 l0.6,-7.7 M17.4,51.1 l8.6,-1.5 M18.2,50.1 l8.8,-1.5 M19.1,49.1 l7.4,-1.3 M19.9,48.1 l7.4,-1.3 M21.6,46.2 l0.7,-8.3 M22.4,45.2 l0.7,-8.6 M22.4,45.2 l7.6,-1.3 M24.1,43.3 l0.7,-8.6 M25.8,41.3 l0.7,-8.0 M25.8,41.3 l6.3,-1.1 M26.7,40.4 l0.7,-8.3 M26.7,40.4 l7.8,-1.3 M27.5,39.5 l6.1,-1.0 M28.4,38.5 l0.7,-8.5 M30.2,36.6 l0.6,-7.5 M31.1,35.7 l0.5,-6.5 M31.1,35.7 l5.3,-0.9 M33.8,33.0 l0.6,-6.9 M33.8,33.0 l6.4,-1.1 M34.7,32.1 l0.4,-5.3 M34.7,32.1 l6.3,-1.1 M35.6,31.2 l0.4,-4.8 M35.6,31.2 l5.4,-0.9 M37.5,29.4 l0.5,-5.7 M38.4,28.5 l0.5,-5.5 M39.3,27.6 l4.4,-0.8 M41.2,25.8 l0.4,-4.6 M42.2,25.0 l0.4,-4.4 M42.2,25.0 l4.3,-0.7 M43.1,24.1 l0.3,-3.8 M43.1,24.1 l4.2,-0.7 M44.1,23.2 l0.4,-4.5 M44.1,23.2 l4.6,-0.8 M45.1,22.4 l4.8,-0.8 M46.0,21.5 l4.3,-0.7 M47.0,20.7 l0.3,-4.2 M47.0,20.7 l4.1,-0.7 M48.0,19.8 l3.6,-0.6 M49.0,19.0 l0.3,-4.0 " stroke="#2a5520" stroke-width="1.3" fill="none" stroke-linecap="round"/><path d="M8.0,63.4 l5.8,-1.0 M10.3,60.3 l0.5,-6.0 M11.1,59.3 l6.3,-1.1 M11.9,58.2 l0.5,-6.1 M12.6,57.2 l7.6,-1.3 M13.4,56.2 l8.2,-1.4 M18.2,50.1 l0.6,-6.8 M20.7,47.1 l0.5,-6.2 M20.7,47.1 l8.5,-1.5 M21.6,46.2 l6.9,-1.2 M24.1,43.3 l6.7,-1.1 M24.9,42.3 l0.6,-7.6 M27.5,39.5 l0.5,-6.3 M28.4,38.5 l6.6,-1.1 M29.3,37.6 l0.5,-6.1 M29.3,37.6 l6.1,-1.0 M30.2,36.6 l6.3,-1.1 M32.0,34.8 l6.4,-1.1 M32.9,33.9 l6.5,-1.1 M36.5,30.3 l4.4,-0.8 M37.5,29.4 l4.7,-0.8 M38.4,28.5 l5.7,-1.0 M40.3,26.7 l0.5,-5.5 M40.3,26.7 l4.5,-0.8 M41.2,25.8 l3.8,-0.6 M45.1,22.4 l0.3,-4.2 M46.0,21.5 l0.3,-3.9 M48.0,19.8 l0.4,-4.3 M49.0,19.0 l4.3,-0.7 " stroke="#5d9440" stroke-width="1.3" fill="none" stroke-linecap="round"/><path d="M8.8,62.4 l0.5,-6.4 M10.3,60.3 l7.7,-1.3 M12.6,57.2 l0.6,-7.2 M15.0,54.1 l8.3,-1.4 M19.1,49.1 l0.6,-6.8 M19.9,48.1 l0.8,-9.1 M23.2,44.2 l0.7,-8.7 M23.2,44.2 l6.8,-1.2 M24.9,42.3 l8.9,-1.5 M32.0,34.8 l0.6,-7.6 M32.9,33.9 l0.4,-5.2 M36.5,30.3 l0.4,-4.8 M39.3,27.6 l0.3,-4.1 " stroke="#a9b94e" stroke-width="1.3" fill="none" stroke-linecap="round"/><path d="M7.3,64.5 Q25.2,39.0 49.0,19.0" stroke="#6b4a24" stroke-width="1.6" fill="none"/><path d="M10.0,62.0 Q9.4,51.5 5.0,42.0" stroke="#447a33" stroke-width="6.2" fill="none" stroke-linecap="round"/><path d="M10.0,62.0 l-3.9,-3.1 M10.0,62.0 l2.0,-4.7 M9.9,60.6 l-3.1,-2.4 M9.4,56.5 l-5.1,-4.0 M9.2,55.1 l-4.0,-3.2 M9.2,55.1 l2.0,-4.5 M8.9,53.8 l-4.2,-3.3 M8.9,53.8 l2.8,-6.4 M8.6,52.4 l2.5,-5.7 M8.3,51.1 l2.0,-4.5 M7.9,49.8 l-4.3,-3.3 M6.6,45.8 l-2.8,-2.2 M6.6,45.8 l1.2,-2.7 M5.6,43.3 l-3.3,-2.6 M5.0,42.0 l-3.4,-2.7 M5.0,42.0 l1.6,-3.7 " stroke="#2a5520" stroke-width="1.3" fill="none" stroke-linecap="round"/><path d="M9.9,60.6 l2.0,-4.5 M9.8,59.2 l-4.8,-3.8 M9.8,59.2 l1.8,-4.1 M9.6,57.8 l-3.7,-2.9 M9.6,57.8 l2.2,-5.1 M9.4,56.5 l1.9,-4.4 M8.6,52.4 l-4.4,-3.5 M8.3,51.1 l-4.9,-3.9 M7.9,49.8 l2.2,-5.0 M7.5,48.5 l-3.5,-2.8 M7.5,48.5 l1.6,-3.6 M7.1,47.1 l-3.6,-2.8 M7.1,47.1 l1.9,-4.4 M6.1,44.6 l-2.4,-1.9 M6.1,44.6 l1.7,-3.8 M5.6,43.3 l1.6,-3.7 " stroke="#5d9440" stroke-width="1.3" fill="none" stroke-linecap="round"/><path d="M8.0,68.0 Q16.0,70.0 24.0,72.0" stroke="#447a33" stroke-width="5.6" fill="none" stroke-linecap="round"/><path d="M8.0,68.0 l3.1,-1.4 M8.0,68.0 l2.8,3.6 M9.3,68.3 l3.8,-1.7 M9.3,68.3 l2.9,3.6 M10.7,68.7 l5.0,-2.2 M10.7,68.7 l2.9,3.7 M13.3,69.3 l3.0,3.8 M14.7,69.7 l5.0,-2.2 M14.7,69.7 l2.6,3.3 M16.0,70.0 l3.5,4.5 M17.3,70.3 l3.4,4.4 M18.7,70.7 l3.6,-1.6 M18.7,70.7 l2.7,3.4 M20.0,71.0 l3.4,-1.5 M20.0,71.0 l2.6,3.3 M22.7,71.7 l3.5,-1.5 M24.0,72.0 l2.4,-1.1 " stroke="#2a5520" stroke-width="1.3" fill="none" stroke-linecap="round"/><path d="M12.0,69.0 l5.3,-2.3 M12.0,69.0 l3.3,4.2 M13.3,69.3 l4.0,-1.8 M16.0,70.0 l4.8,-2.1 M21.3,71.3 l3.6,-1.6 M21.3,71.3 l2.2,2.8 M24.0,72.0 l1.7,2.1 " stroke="#5d9440" stroke-width="1.3" fill="none" stroke-linecap="round"/><path d="M17.3,70.3 l4.6,-2.0 M22.7,71.7 l2.4,3.0 " stroke="#a9b94e" stroke-width="1.3" fill="none" stroke-linecap="round"/><path d="M6.0,70.0 Q8.5,74.5 11.0,79.0" stroke="#447a33" stroke-width="5.0" fill="none" stroke-linecap="round"/><path d="M6.0,70.0 l2.9,1.2 M6.7,71.3 l4.2,1.8 M7.4,72.6 l4.9,2.1 M7.4,72.6 l-0.6,4.2 M8.1,73.9 l4.7,2.0 M8.9,75.1 l4.4,1.9 M8.9,75.1 l-0.7,4.7 M9.6,76.4 l3.5,1.5 M9.6,76.4 l-0.6,3.6 M10.3,77.7 l-0.4,2.5 M11.0,79.0 l2.5,1.1 " stroke="#2a5520" stroke-width="1.3" fill="none" stroke-linecap="round"/><path d="M6.0,70.0 l-0.6,3.8 M6.7,71.3 l-0.6,4.2 M11.0,79.0 l-0.4,2.3 " stroke="#5d9440" stroke-width="1.3" fill="none" stroke-linecap="round"/><path d="M8.1,73.9 l-0.8,5.0 M10.3,77.7 l2.6,1.1 " stroke="#a9b94e" stroke-width="1.3" fill="none" stroke-linecap="round"/><path d="M38.0,27.0 Q27.5,34.2 14.8,35.8" stroke="#447a33" stroke-width="6.8" fill="none" stroke-linecap="round"/><path d="M36.8,27.8 l-2.4,4.0 M34.4,29.2 l-6.1,-1.9 M33.2,29.9 l-3.2,5.2 M33.2,29.9 l-6.2,-1.9 M32.0,30.6 l-3.6,5.8 M30.7,31.2 l-3.6,5.9 M29.5,31.8 l-3.2,5.2 M29.5,31.8 l-5.9,-1.8 M26.9,32.8 l-3.2,5.2 M26.9,32.8 l-6.9,-2.1 M25.6,33.3 l-2.8,4.5 M25.6,33.3 l-6.5,-2.0 M24.3,33.7 l-3.0,4.8 M24.3,33.7 l-4.7,-1.4 M23.0,34.1 l-5.4,-1.7 M21.7,34.5 l-2.4,3.9 M21.7,34.5 l-4.9,-1.5 M20.3,34.8 l-4.6,-1.4 M17.6,35.4 l-3.4,-1.1 M16.2,35.6 l-2.1,3.4 M14.8,35.8 l-3.8,-1.2 " stroke="#2a5520" stroke-width="1.3" fill="none" stroke-linecap="round"/><path d="M38.0,27.0 l-2.2,3.7 M35.6,28.5 l-3.1,5.1 M35.6,28.5 l-5.6,-1.7 M34.4,29.2 l-2.8,4.6 M32.0,30.6 l-7.3,-2.2 M28.2,32.3 l-3.8,6.2 M23.0,34.1 l-2.9,4.7 M20.3,34.8 l-2.6,4.2 M19.0,35.1 l-2.4,4.0 M16.2,35.6 l-4.1,-1.3 M14.8,35.8 l-1.7,2.8 " stroke="#5d9440" stroke-width="1.3" fill="none" stroke-linecap="round"/><path d="M38.0,27.0 l-3.9,-1.2 M36.8,27.8 l-5.7,-1.7 M30.7,31.2 l-6.0,-1.8 M28.2,32.3 l-5.4,-1.7 M19.0,35.1 l-3.2,-1.0 M17.6,35.4 l-1.7,2.8 " stroke="#a9b94e" stroke-width="1.3" fill="none" stroke-linecap="round"/><path d="M44.0,27.0 Q34.4,45.4 30.4,65.8" stroke="#447a33" stroke-width="6.2" fill="none" stroke-linecap="round"/><path d="M44.0,27.0 l1.3,4.0 M42.8,29.4 l-3.5,2.2 M42.2,30.6 l1.4,4.2 M42.2,30.6 l-4.6,3.0 M41.6,31.8 l1.4,4.3 M41.6,31.8 l-5.2,3.3 M41.0,33.0 l2.0,6.1 M41.0,33.0 l-5.3,3.5 M39.9,35.4 l-3.9,2.5 M39.4,36.6 l1.8,5.3 M39.4,36.6 l-4.9,3.2 M38.9,37.9 l1.8,5.3 M38.9,37.9 l-4.8,3.1 M38.4,39.1 l2.2,6.5 M37.9,40.3 l1.6,4.7 M37.4,41.5 l1.8,5.3 M37.4,41.5 l-4.9,3.2 M36.9,42.8 l-4.7,3.0 M36.5,44.0 l2.0,5.9 M36.5,44.0 l-5.0,3.2 M35.6,46.5 l-3.8,2.4 M35.1,47.8 l1.5,4.6 M34.7,49.0 l1.4,4.1 M34.7,49.0 l-4.0,2.6 M34.3,50.3 l1.6,4.9 M33.9,51.6 l1.7,5.0 M33.9,51.6 l-4.0,2.6 M33.2,54.1 l1.5,4.4 M32.5,56.7 l-3.7,2.4 M32.1,58.0 l1.2,3.7 M32.1,58.0 l-2.8,1.8 M31.8,59.3 l-2.6,1.7 M31.5,60.6 l-3.3,2.1 M31.2,61.9 l1.3,3.9 M31.2,61.9 l-3.5,2.3 M30.9,63.2 l-2.8,1.8 M30.7,64.5 l1.2,3.7 M30.7,64.5 l-3.4,2.2 M30.4,65.8 l1.1,3.2 M30.4,65.8 l-2.8,1.8 " stroke="#2a5520" stroke-width="1.3" fill="none" stroke-linecap="round"/><path d="M44.0,27.0 l-4.4,2.8 M43.4,28.2 l1.5,4.5 M43.4,28.2 l-4.5,2.9 M40.5,34.2 l-5.7,3.7 M39.9,35.4 l2.2,6.5 M38.4,39.1 l-4.2,2.7 M36.9,42.8 l1.7,5.2 M36.0,45.3 l1.8,5.3 M36.0,45.3 l-5.7,3.7 M35.6,46.5 l2.1,6.2 M35.1,47.8 l-5.0,3.3 M34.3,50.3 l-5.1,3.3 M33.5,52.9 l-4.6,3.0 M33.2,54.1 l-4.4,2.8 M32.8,55.4 l1.2,3.5 M32.8,55.4 l-3.1,2.0 M32.5,56.7 l1.1,3.3 M31.8,59.3 l1.1,3.2 M31.5,60.6 l1.1,3.2 M30.9,63.2 l1.0,3.1 " stroke="#5d9440" stroke-width="1.3" fill="none" stroke-linecap="round"/><path d="M42.8,29.4 l1.3,4.0 M40.5,34.2 l2.1,6.3 M37.9,40.3 l-5.4,3.5 M33.5,52.9 l1.4,4.1 " stroke="#a9b94e" stroke-width="1.3" fill="none" stroke-linecap="round"/><path d="M58.0,40.0 Q59.5,59.0 61.0,78.0" stroke="#447a33" stroke-width="5.0" fill="none" stroke-linecap="round"/><path d="M58.0,40.0 l-2.4,3.6 M58.1,41.3 l2.9,3.2 M58.3,43.9 l2.7,3.0 M58.3,43.9 l-1.9,2.9 M58.4,45.2 l-2.8,4.3 M58.5,46.6 l2.9,3.2 M58.6,47.9 l3.7,4.1 M58.6,47.9 l-2.9,4.4 M58.7,49.2 l2.8,3.0 M58.9,51.8 l3.3,3.6 M59.0,53.1 l-3.1,4.7 M59.2,55.7 l2.9,3.2 M59.2,55.7 l-2.7,4.1 M59.3,57.0 l-2.4,3.7 M59.4,58.3 l3.5,3.8 M59.4,58.3 l-2.2,3.4 M59.6,59.7 l2.4,2.7 M59.7,61.0 l3.4,3.7 M59.7,61.0 l-2.8,4.2 M59.9,63.6 l-1.8,2.8 M60.0,64.9 l-2.4,3.6 M60.1,66.2 l2.0,2.2 M60.1,66.2 l-1.8,2.7 M60.2,67.5 l2.6,2.9 M60.3,68.8 l1.8,1.9 M60.4,70.1 l-1.5,2.3 M60.5,71.4 l-1.9,2.9 M60.6,72.8 l2.2,2.4 M60.7,74.1 l-1.8,2.8 M60.8,75.4 l1.5,1.7 M60.8,75.4 l-1.5,2.3 M60.9,76.7 l-1.4,2.2 M61.0,78.0 l-1.8,2.8 " stroke="#2a5520" stroke-width="1.3" fill="none" stroke-linecap="round"/><path d="M58.0,40.0 l2.0,2.2 M58.1,41.3 l-2.0,3.0 M58.2,42.6 l2.4,2.7 M58.2,42.6 l-1.8,2.7 M58.4,45.2 l3.2,3.6 M58.5,46.6 l-2.8,4.2 M58.7,49.2 l-2.4,3.6 M58.8,50.5 l3.0,3.3 M58.8,50.5 l-2.8,4.3 M58.9,51.8 l-2.5,3.8 M59.3,57.0 l3.5,3.9 M59.6,59.7 l-2.2,3.4 M59.8,62.3 l2.4,2.7 M59.8,62.3 l-2.5,3.8 M59.9,63.6 l2.2,2.4 M60.2,67.5 l-2.0,3.1 M60.4,70.1 l2.3,2.5 M60.5,71.4 l1.6,1.8 M60.6,72.8 l-1.4,2.1 M60.7,74.1 l2.3,2.5 " stroke="#5d9440" stroke-width="1.3" fill="none" stroke-linecap="round"/><path d="M59.0,53.1 l3.2,3.5 M59.1,54.4 l3.9,4.2 M59.1,54.4 l-2.7,4.1 M60.0,64.9 l2.3,2.6 M60.3,68.8 l-2.0,3.1 M60.9,76.7 l1.9,2.1 M61.0,78.0 l1.8,2.0 " stroke="#a9b94e" stroke-width="1.3" fill="none" stroke-linecap="round"/><path d="M49.0,19.0 Q34.8,11.0 18.5,10.8" stroke="#447a33" stroke-width="6.8" fill="none" stroke-linecap="round"/><path d="M49.0,19.0 l-3.8,1.6 M47.8,18.3 l-3.4,-4.5 M46.6,17.7 l-6.0,2.5 M46.6,17.7 l-3.5,-4.6 M45.4,17.1 l-3.0,-3.9 M44.2,16.6 l-5.2,2.2 M44.2,16.6 l-3.7,-4.8 M43.0,16.0 l-5.0,2.1 M43.0,16.0 l-3.6,-4.7 M41.8,15.5 l-4.2,-5.6 M39.3,14.5 l-4.8,2.0 M38.0,14.1 l-5.5,2.3 M38.0,14.1 l-3.1,-4.1 M36.8,13.7 l-4.7,-6.1 M31.7,12.3 l-4.4,1.8 M31.7,12.3 l-3.3,-4.3 M30.4,12.1 l-5.7,2.4 M30.4,12.1 l-3.2,-4.2 M27.8,11.6 l-4.4,1.8 M26.5,11.4 l-4.3,1.8 M25.2,11.2 l-3.2,1.3 M25.2,11.2 l-2.4,-3.1 M23.9,11.1 l-2.2,-2.8 M21.2,10.9 l-4.3,1.8 M19.9,10.8 l-2.2,-2.9 M18.5,10.8 l-4.3,1.8 " stroke="#2a5520" stroke-width="1.3" fill="none" stroke-linecap="round"/><path d="M47.8,18.3 l-5.5,2.3 M45.4,17.1 l-4.9,2.1 M41.8,15.5 l-6.0,2.5 M40.5,15.0 l-5.7,2.4 M40.5,15.0 l-4.6,-6.1 M34.3,13.0 l-5.2,2.2 M34.3,13.0 l-4.2,-5.6 M33.0,12.6 l-5.9,2.5 M29.1,11.8 l-4.5,1.9 M29.1,11.8 l-3.3,-4.4 M27.8,11.6 l-3.5,-4.6 M26.5,11.4 l-2.5,-3.3 M23.9,11.1 l-4.2,1.7 M22.5,11.0 l-3.3,1.4 M22.5,11.0 l-2.1,-2.8 M21.2,10.9 l-2.6,-3.4 M19.9,10.8 l-3.8,1.6 M18.5,10.8 l-2.8,-3.7 " stroke="#5d9440" stroke-width="1.3" fill="none" stroke-linecap="round"/><path d="M49.0,19.0 l-3.0,-3.9 M39.3,14.5 l-4.7,-6.2 M36.8,13.7 l-4.9,2.1 M35.5,13.3 l-4.7,2.0 M35.5,13.3 l-4.0,-5.3 M33.0,12.6 l-3.6,-4.7 " stroke="#a9b94e" stroke-width="1.3" fill="none" stroke-linecap="round"/><path d="M49.0,19.0 Q61.2,9.7 75.4,3.9" stroke="#447a33" stroke-width="6.2" fill="none" stroke-linecap="round"/><path d="M49.0,19.0 l3.6,0.5 M50.1,18.2 l4.1,0.6 M51.1,17.4 l2.2,-5.3 M51.1,17.4 l4.3,0.6 M52.2,16.6 l2.3,-5.6 M53.3,15.9 l1.9,-4.5 M55.5,14.4 l5.4,0.8 M56.6,13.7 l5.4,0.8 M58.9,12.3 l2.7,-6.5 M60.0,11.6 l6.2,0.9 M61.1,10.9 l2.2,-5.4 M61.1,10.9 l6.7,0.9 M62.3,10.3 l1.9,-4.6 M63.4,9.6 l2.1,-5.1 M64.6,9.0 l4.8,0.7 M66.9,7.8 l3.5,0.5 M68.1,7.2 l3.4,0.5 M69.3,6.6 l3.6,0.5 M71.7,5.5 l3.7,0.5 M72.9,4.9 l1.1,-2.7 M72.9,4.9 l3.3,0.5 M74.2,4.4 l1.6,-3.8 " stroke="#2a5520" stroke-width="1.3" fill="none" stroke-linecap="round"/><path d="M49.0,19.0 l1.7,-4.1 M50.1,18.2 l1.5,-3.6 M53.3,15.9 l4.7,0.7 M54.4,15.1 l1.7,-4.2 M54.4,15.1 l5.3,0.7 M56.6,13.7 l2.7,-6.5 M57.7,13.0 l2.7,-6.5 M57.7,13.0 l6.2,0.9 M58.9,12.3 l5.6,0.8 M60.0,11.6 l2.4,-5.8 M62.3,10.3 l4.7,0.7 M63.4,9.6 l4.7,0.7 M64.6,9.0 l1.7,-4.2 M65.8,8.4 l2.2,-5.3 M65.8,8.4 l4.2,0.6 M66.9,7.8 l1.5,-3.7 M68.1,7.2 l1.6,-4.0 M69.3,6.6 l1.4,-3.4 M70.5,6.0 l1.2,-3.0 M71.7,5.5 l1.1,-2.7 M75.4,3.9 l1.6,-3.9 M75.4,3.9 l3.6,0.5 " stroke="#5d9440" stroke-width="1.3" fill="none" stroke-linecap="round"/><path d="M52.2,16.6 l5.6,0.8 M55.5,14.4 l1.9,-4.7 M70.5,6.0 l3.6,0.5 M74.2,4.4 l2.9,0.4 " stroke="#a9b94e" stroke-width="1.3" fill="none" stroke-linecap="round"/><path d="M52.0,19.0 Q70.0,14.7 88.5,16.4" stroke="#447a33" stroke-width="5.6" fill="none" stroke-linecap="round"/><path d="M52.0,19.0 l2.7,1.8 M53.3,18.7 l3.8,-3.4 M53.3,18.7 l3.1,2.1 M54.6,18.4 l3.9,2.6 M55.9,18.1 l3.9,-3.5 M58.5,17.7 l3.6,2.4 M59.7,17.4 l4.1,-3.7 M59.7,17.4 l3.4,2.3 M61.0,17.2 l3.8,-3.4 M61.0,17.2 l3.7,2.4 M62.3,17.0 l4.3,-3.9 M62.3,17.0 l4.4,2.9 M63.6,16.9 l4.9,3.3 M64.9,16.7 l3.8,2.5 M66.2,16.6 l4.2,-3.7 M66.2,16.6 l4.0,2.7 M67.5,16.4 l3.7,-3.3 M68.8,16.3 l3.8,-3.4 M71.4,16.1 l4.3,2.9 M74.1,16.0 l3.5,2.4 M76.7,15.9 l3.3,-3.0 M79.3,15.9 l3.0,-2.6 M79.3,15.9 l2.7,1.8 M80.6,15.9 l2.5,-2.2 M81.9,16.0 l2.0,-1.8 M83.2,16.0 l2.7,-2.5 M83.2,16.0 l3.0,2.0 M85.9,16.2 l2.8,-2.5 M85.9,16.2 l2.5,1.7 M87.2,16.3 l3.1,2.1 M88.5,16.4 l2.5,1.7 " stroke="#2a5520" stroke-width="1.3" fill="none" stroke-linecap="round"/><path d="M54.6,18.4 l3.4,-3.0 M55.9,18.1 l3.8,2.6 M57.2,17.9 l4.0,-3.6 M58.5,17.7 l3.0,-2.7 M64.9,16.7 l4.4,-3.9 M67.5,16.4 l5.2,3.5 M68.8,16.3 l5.1,3.4 M70.1,16.2 l3.0,-2.7 M70.1,16.2 l3.4,2.2 M72.8,16.0 l3.6,-3.2 M72.8,16.0 l3.8,2.5 M74.1,16.0 l3.2,-2.8 M75.4,16.0 l3.8,2.5 M78.0,15.9 l3.0,2.0 M80.6,15.9 l3.2,2.1 M84.5,16.1 l2.3,1.5 M88.5,16.4 l2.3,-2.0 " stroke="#5d9440" stroke-width="1.3" fill="none" stroke-linecap="round"/><path d="M52.0,19.0 l3.3,-2.9 M57.2,17.9 l3.4,2.3 M63.6,16.9 l4.4,-4.0 M71.4,16.1 l3.8,-3.4 M75.4,16.0 l2.6,-2.3 M76.7,15.9 l2.8,1.9 M78.0,15.9 l3.4,-3.0 M81.9,16.0 l2.6,1.8 M84.5,16.1 l2.0,-1.8 M87.2,16.3 l1.9,-1.7 " stroke="#a9b94e" stroke-width="1.3" fill="none" stroke-linecap="round"/><g transform="translate(64.1,29.5) rotate(-50)"><ellipse cx="0" cy="0" rx="8.2" ry="16.5" fill="#c9a265" stroke="#4a3517" stroke-width="0.8"/><path d="M-4.0,-15.2 Q0,-12.0 4.0,-15.2" fill="none" stroke="#6b4a1f" stroke-width="0.7"/><path d="M-6.0,-11.9 Q0,-8.7 6.0,-11.9" fill="none" stroke="#6b4a1f" stroke-width="0.7"/><path d="M-7.0,-8.6 Q0,-5.4 7.0,-8.6" fill="none" stroke="#6b4a1f" stroke-width="0.7"/><path d="M-7.6,-5.3 Q0,-2.1 7.6,-5.3" fill="none" stroke="#6b4a1f" stroke-width="0.7"/><path d="M-7.9,-2.0 Q0,1.2 7.9,-2.0" fill="none" stroke="#6b4a1f" stroke-width="0.7"/><path d="M-7.8,1.3 Q0,4.5 7.8,1.3" fill="none" stroke="#6b4a1f" stroke-width="0.7"/><path d="M-7.4,4.6 Q0,7.8 7.4,4.6" fill="none" stroke="#6b4a1f" stroke-width="0.7"/><path d="M-6.7,7.9 Q0,11.1 6.7,7.9" fill="none" stroke="#6b4a1f" stroke-width="0.7"/><path d="M-5.3,11.2 Q0,14.4 5.3,11.2" fill="none" stroke="#6b4a1f" stroke-width="0.7"/><path d="M-2.7,14.5 Q0,17.7 2.7,14.5" fill="none" stroke="#6b4a1f" stroke-width="0.7"/><path d="M-3.0,-13.9 V13.9 M3.0,-13.9 V13.9" stroke="#8a6730" stroke-width="0.5" fill="none"/></g><g transform="translate(49.1,46.4) rotate(2)"><ellipse cx="0" cy="0" rx="8.5" ry="17.8" fill="#c9a265" stroke="#4a3517" stroke-width="0.8"/><path d="M-4.0,-16.5 Q0,-13.3 4.0,-16.5" fill="none" stroke="#6b4a1f" stroke-width="0.7"/><path d="M-5.9,-13.3 Q0,-10.1 5.9,-13.3" fill="none" stroke="#6b4a1f" stroke-width="0.7"/><path d="M-7.0,-10.0 Q0,-6.8 7.0,-10.0" fill="none" stroke="#6b4a1f" stroke-width="0.7"/><path d="M-7.7,-6.8 Q0,-3.6 7.7,-6.8" fill="none" stroke="#6b4a1f" stroke-width="0.7"/><path d="M-8.1,-3.6 Q0,-0.4 8.1,-3.6" fill="none" stroke="#6b4a1f" stroke-width="0.7"/><path d="M-8.2,-0.4 Q0,2.8 8.2,-0.4" fill="none" stroke="#6b4a1f" stroke-width="0.7"/><path d="M-8.0,2.9 Q0,6.1 8.0,2.9" fill="none" stroke="#6b4a1f" stroke-width="0.7"/><path d="M-7.5,6.1 Q0,9.3 7.5,6.1" fill="none" stroke="#6b4a1f" stroke-width="0.7"/><path d="M-6.6,9.3 Q0,12.5 6.6,9.3" fill="none" stroke="#6b4a1f" stroke-width="0.7"/><path d="M-5.3,12.6 Q0,15.8 5.3,12.6" fill="none" stroke="#6b4a1f" stroke-width="0.7"/><path d="M-2.7,15.8 Q0,19.0 2.7,15.8" fill="none" stroke="#6b4a1f" stroke-width="0.7"/><path d="M-3.1,-14.9 V14.9 M3.1,-14.9 V14.9" stroke="#8a6730" stroke-width="0.5" fill="none"/></g><g transform="translate(71.6,53.3) rotate(-50)"><ellipse cx="0" cy="0" rx="8.0" ry="17.0" fill="#c9a265" stroke="#4a3517" stroke-width="0.8"/><path d="M-3.9,-15.6 Q0,-12.4 3.9,-15.6" fill="none" stroke="#6b4a1f" stroke-width="0.7"/><path d="M-5.8,-12.2 Q0,-9.0 5.8,-12.2" fill="none" stroke="#6b4a1f" stroke-width="0.7"/><path d="M-6.8,-8.8 Q0,-5.6 6.8,-8.8" fill="none" stroke="#6b4a1f" stroke-width="0.7"/><path d="M-7.4,-5.4 Q0,-2.2 7.4,-5.4" fill="none" stroke="#6b4a1f" stroke-width="0.7"/><path d="M-7.7,-2.0 Q0,1.2 7.7,-2.0" fill="none" stroke="#6b4a1f" stroke-width="0.7"/><path d="M-7.6,1.4 Q0,4.6 7.6,1.4" fill="none" stroke="#6b4a1f" stroke-width="0.7"/><path d="M-7.2,4.8 Q0,8.0 7.2,4.8" fill="none" stroke="#6b4a1f" stroke-width="0.7"/><path d="M-6.5,8.2 Q0,11.4 6.5,8.2" fill="none" stroke="#6b4a1f" stroke-width="0.7"/><path d="M-5.2,11.6 Q0,14.8 5.2,11.6" fill="none" stroke="#6b4a1f" stroke-width="0.7"/><path d="M-2.6,15.0 Q0,18.2 2.6,15.0" fill="none" stroke="#6b4a1f" stroke-width="0.7"/><path d="M-2.9,-14.3 V14.3 M2.9,-14.3 V14.3" stroke="#8a6730" stroke-width="0.5" fill="none"/></g></g>
<rect x="790.8" y="235.5" width="1.4" height="48.3" fill="#688834"/><path d="M791.5,260.6 L803.0,274.8 L806.2,280.2 Q791.5,282.2 776.8,280.2 L780.0,274.8 Z" fill="#688834"/><path d="M791.5,239.2 Q790.2,239.1 788.8,240.0" fill="none" stroke="#688834" stroke-width="0.8" stroke-linecap="round"/><path d="M791.5,239.2 Q792.9,239.1 794.2,240.0" fill="none" stroke="#688834" stroke-width="0.8" stroke-linecap="round"/><path d="M791.5,242.0 Q789.5,241.9 787.5,242.9" fill="none" stroke="#688834" stroke-width="0.8" stroke-linecap="round"/><path d="M791.5,242.0 Q793.3,241.9 795.2,242.9" fill="none" stroke="#688834" stroke-width="0.8" stroke-linecap="round"/><path d="M791.5,244.7 Q789.2,244.6 786.8,245.7" fill="none" stroke="#688834" stroke-width="0.9" stroke-linecap="round"/><path d="M791.5,244.7 Q793.9,244.6 796.2,245.7" fill="none" stroke="#688834" stroke-width="0.9" stroke-linecap="round"/><path d="M791.5,247.4 Q788.9,247.3 786.3,248.5" fill="none" stroke="#688834" stroke-width="0.9" stroke-linecap="round"/><path d="M791.5,247.4 Q794.3,247.3 797.1,248.5" fill="none" stroke="#688834" stroke-width="0.9" stroke-linecap="round"/><path d="M791.5,250.2 Q788.1,250.0 784.8,251.4" fill="none" stroke="#688834" stroke-width="1.0" stroke-linecap="round"/><path d="M791.5,250.2 Q795.0,250.0 798.4,251.4" fill="none" stroke="#688834" stroke-width="1.0" stroke-linecap="round"/><path d="M791.5,252.9 Q788.1,252.7 784.7,254.2" fill="none" stroke="#688834" stroke-width="1.1" stroke-linecap="round"/><path d="M791.5,252.9 Q795.1,252.7 798.6,254.2" fill="none" stroke="#688834" stroke-width="1.1" stroke-linecap="round"/><path d="M791.5,255.7 Q787.7,255.5 783.9,257.1" fill="none" stroke="#688834" stroke-width="1.1" stroke-linecap="round"/><path d="M791.5,255.7 Q796.0,255.5 800.5,257.1" fill="none" stroke="#688834" stroke-width="1.1" stroke-linecap="round"/><path d="M791.5,258.4 Q786.7,258.2 781.8,259.9" fill="none" stroke="#688834" stroke-width="1.2" stroke-linecap="round"/><path d="M791.5,258.4 Q795.7,258.2 799.8,259.9" fill="none" stroke="#688834" stroke-width="1.2" stroke-linecap="round"/><path d="M791.5,261.1 Q785.8,260.9 780.2,262.8" fill="none" stroke="#688834" stroke-width="1.4" stroke-linecap="round"/><path d="M791.5,261.1 Q797.1,260.9 802.8,262.8" fill="none" stroke="#688834" stroke-width="1.4" stroke-linecap="round"/><path d="M791.5,263.9 Q785.8,263.6 780.0,265.6" fill="none" stroke="#688834" stroke-width="1.5" stroke-linecap="round"/><path d="M791.5,263.9 Q797.2,263.6 802.9,265.6" fill="none" stroke="#688834" stroke-width="1.5" stroke-linecap="round"/><path d="M791.5,266.6 Q786.0,266.3 780.5,268.5" fill="none" stroke="#688834" stroke-width="1.6" stroke-linecap="round"/><path d="M791.5,266.6 Q796.8,266.3 802.1,268.5" fill="none" stroke="#688834" stroke-width="1.6" stroke-linecap="round"/><path d="M791.5,269.3 Q785.0,269.1 778.5,271.3" fill="none" stroke="#688834" stroke-width="1.8" stroke-linecap="round"/><path d="M791.5,269.3 Q797.3,269.1 803.0,271.3" fill="none" stroke="#688834" stroke-width="1.8" stroke-linecap="round"/><path d="M791.5,272.1 Q785.1,271.8 778.7,274.2" fill="none" stroke="#688834" stroke-width="1.9" stroke-linecap="round"/><path d="M791.5,272.1 Q798.0,271.8 804.4,274.2" fill="none" stroke="#688834" stroke-width="1.9" stroke-linecap="round"/><path d="M791.5,274.8 Q785.0,274.5 778.5,277.0" fill="none" stroke="#688834" stroke-width="2.1" stroke-linecap="round"/><path d="M791.5,274.8 Q798.8,274.5 806.0,277.0" fill="none" stroke="#688834" stroke-width="2.1" stroke-linecap="round"/><path d="M791.5,277.5 Q783.8,277.2 776.2,279.9" fill="none" stroke="#688834" stroke-width="2.3" stroke-linecap="round"/><path d="M791.5,277.5 Q799.9,277.2 808.3,279.9" fill="none" stroke="#688834" stroke-width="2.3" stroke-linecap="round"/>
<rect x="824.6" y="235.5" width="1.4" height="48.3" fill="#688834"/><path d="M825.3,260.6 L836.8,274.8 L840.0,280.2 Q825.3,282.2 810.6,280.2 L813.8,274.8 Z" fill="#688834"/><path d="M825.3,239.2 Q824.0,239.1 822.6,240.0" fill="none" stroke="#688834" stroke-width="0.8" stroke-linecap="round"/><path d="M825.3,239.2 Q826.7,239.1 828.0,240.0" fill="none" stroke="#688834" stroke-width="0.8" stroke-linecap="round"/><path d="M825.3,242.0 Q823.3,241.9 821.3,242.9" fill="none" stroke="#688834" stroke-width="0.8" stroke-linecap="round"/><path d="M825.3,242.0 Q827.1,241.9 829.0,242.9" fill="none" stroke="#688834" stroke-width="0.8" stroke-linecap="round"/><path d="M825.3,244.7 Q823.0,244.6 820.6,245.7" fill="none" stroke="#688834" stroke-width="0.9" stroke-linecap="round"/><path d="M825.3,244.7 Q827.7,244.6 830.0,245.7" fill="none" stroke="#688834" stroke-width="0.9" stroke-linecap="round"/><path d="M825.3,247.4 Q822.7,247.3 820.1,248.5" fill="none" stroke="#688834" stroke-width="0.9" stroke-linecap="round"/><path d="M825.3,247.4 Q828.1,247.3 830.9,248.5" fill="none" stroke="#688834" stroke-width="0.9" stroke-linecap="round"/><path d="M825.3,250.2 Q821.9,250.0 818.6,251.4" fill="none" stroke="#688834" stroke-width="1.0" stroke-linecap="round"/><path d="M825.3,250.2 Q828.8,250.0 832.2,251.4" fill="none" stroke="#688834" stroke-width="1.0" stroke-linecap="round"/><path d="M825.3,252.9 Q821.9,252.7 818.5,254.2" fill="none" stroke="#688834" stroke-width="1.1" stroke-linecap="round"/><path d="M825.3,252.9 Q828.9,252.7 832.4,254.2" fill="none" stroke="#688834" stroke-width="1.1" stroke-linecap="round"/><path d="M825.3,255.7 Q821.5,255.5 817.7,257.1" fill="none" stroke="#688834" stroke-width="1.1" stroke-linecap="round"/><path d="M825.3,255.7 Q829.8,255.5 834.3,257.1" fill="none" stroke="#688834" stroke-width="1.1" stroke-linecap="round"/><path d="M825.3,258.4 Q820.5,258.2 815.6,259.9" fill="none" stroke="#688834" stroke-width="1.2" stroke-linecap="round"/><path d="M825.3,258.4 Q829.5,258.2 833.6,259.9" fill="none" stroke="#688834" stroke-width="1.2" stroke-linecap="round"/><path d="M825.3,261.1 Q819.6,260.9 814.0,262.8" fill="none" stroke="#688834" stroke-width="1.4" stroke-linecap="round"/><path d="M825.3,261.1 Q830.9,260.9 836.6,262.8" fill="none" stroke="#688834" stroke-width="1.4" stroke-linecap="round"/><path d="M825.3,263.9 Q819.6,263.6 813.8,265.6" fill="none" stroke="#688834" stroke-width="1.5" stroke-linecap="round"/><path d="M825.3,263.9 Q831.0,263.6 836.7,265.6" fill="none" stroke="#688834" stroke-width="1.5" stroke-linecap="round"/><path d="M825.3,266.6 Q819.8,266.3 814.3,268.5" fill="none" stroke="#688834" stroke-width="1.6" stroke-linecap="round"/><path d="M825.3,266.6 Q830.6,266.3 835.9,268.5" fill="none" stroke="#688834" stroke-width="1.6" stroke-linecap="round"/><path d="M825.3,269.3 Q818.8,269.1 812.3,271.3" fill="none" stroke="#688834" stroke-width="1.8" stroke-linecap="round"/><path d="M825.3,269.3 Q831.1,269.1 836.8,271.3" fill="none" stroke="#688834" stroke-width="1.8" stroke-linecap="round"/><path d="M825.3,272.1 Q818.9,271.8 812.5,274.2" fill="none" stroke="#688834" stroke-width="1.9" stroke-linecap="round"/><path d="M825.3,272.1 Q831.8,271.8 838.2,274.2" fill="none" stroke="#688834" stroke-width="1.9" stroke-linecap="round"/><path d="M825.3,274.8 Q818.8,274.5 812.3,277.0" fill="none" stroke="#688834" stroke-width="2.1" stroke-linecap="round"/><path d="M825.3,274.8 Q832.6,274.5 839.8,277.0" fill="none" stroke="#688834" stroke-width="2.1" stroke-linecap="round"/><path d="M825.3,277.5 Q817.6,277.2 810.0,279.9" fill="none" stroke="#688834" stroke-width="2.3" stroke-linecap="round"/><path d="M825.3,277.5 Q833.7,277.2 842.1,279.9" fill="none" stroke="#688834" stroke-width="2.3" stroke-linecap="round"/>
<rect x="857.8" y="235.5" width="1.4" height="48.3" fill="#688834"/><path d="M858.5,260.6 L870.0,274.8 L873.2,280.2 Q858.5,282.2 843.8,280.2 L847.0,274.8 Z" fill="#688834"/><path d="M858.5,239.2 Q857.2,239.1 855.8,240.0" fill="none" stroke="#688834" stroke-width="0.8" stroke-linecap="round"/><path d="M858.5,239.2 Q859.9,239.1 861.2,240.0" fill="none" stroke="#688834" stroke-width="0.8" stroke-linecap="round"/><path d="M858.5,242.0 Q856.5,241.9 854.5,242.9" fill="none" stroke="#688834" stroke-width="0.8" stroke-linecap="round"/><path d="M858.5,242.0 Q860.3,241.9 862.2,242.9" fill="none" stroke="#688834" stroke-width="0.8" stroke-linecap="round"/><path d="M858.5,244.7 Q856.2,244.6 853.8,245.7" fill="none" stroke="#688834" stroke-width="0.9" stroke-linecap="round"/><path d="M858.5,244.7 Q860.9,244.6 863.2,245.7" fill="none" stroke="#688834" stroke-width="0.9" stroke-linecap="round"/><path d="M858.5,247.4 Q855.9,247.3 853.3,248.5" fill="none" stroke="#688834" stroke-width="0.9" stroke-linecap="round"/><path d="M858.5,247.4 Q861.3,247.3 864.1,248.5" fill="none" stroke="#688834" stroke-width="0.9" stroke-linecap="round"/><path d="M858.5,250.2 Q855.1,250.0 851.8,251.4" fill="none" stroke="#688834" stroke-width="1.0" stroke-linecap="round"/><path d="M858.5,250.2 Q862.0,250.0 865.4,251.4" fill="none" stroke="#688834" stroke-width="1.0" stroke-linecap="round"/><path d="M858.5,252.9 Q855.1,252.7 851.7,254.2" fill="none" stroke="#688834" stroke-width="1.1" stroke-linecap="round"/><path d="M858.5,252.9 Q862.1,252.7 865.6,254.2" fill="none" stroke="#688834" stroke-width="1.1" stroke-linecap="round"/><path d="M858.5,255.7 Q854.7,255.5 850.9,257.1" fill="none" stroke="#688834" stroke-width="1.1" stroke-linecap="round"/><path d="M858.5,255.7 Q863.0,255.5 867.5,257.1" fill="none" stroke="#688834" stroke-width="1.1" stroke-linecap="round"/><path d="M858.5,258.4 Q853.7,258.2 848.8,259.9" fill="none" stroke="#688834" stroke-width="1.2" stroke-linecap="round"/><path d="M858.5,258.4 Q862.7,258.2 866.8,259.9" fill="none" stroke="#688834" stroke-width="1.2" stroke-linecap="round"/><path d="M858.5,261.1 Q852.8,260.9 847.2,262.8" fill="none" stroke="#688834" stroke-width="1.4" stroke-linecap="round"/><path d="M858.5,261.1 Q864.1,260.9 869.8,262.8" fill="none" stroke="#688834" stroke-width="1.4" stroke-linecap="round"/><path d="M858.5,263.9 Q852.8,263.6 847.0,265.6" fill="none" stroke="#688834" stroke-width="1.5" stroke-linecap="round"/><path d="M858.5,263.9 Q864.2,263.6 869.9,265.6" fill="none" stroke="#688834" stroke-width="1.5" stroke-linecap="round"/><path d="M858.5,266.6 Q853.0,266.3 847.5,268.5" fill="none" stroke="#688834" stroke-width="1.6" stroke-linecap="round"/><path d="M858.5,266.6 Q863.8,266.3 869.1,268.5" fill="none" stroke="#688834" stroke-width="1.6" stroke-linecap="round"/><path d="M858.5,269.3 Q852.0,269.1 845.5,271.3" fill="none" stroke="#688834" stroke-width="1.8" stroke-linecap="round"/><path d="M858.5,269.3 Q864.3,269.1 870.0,271.3" fill="none" stroke="#688834" stroke-width="1.8" stroke-linecap="round"/><path d="M858.5,272.1 Q852.1,271.8 845.7,274.2" fill="none" stroke="#688834" stroke-width="1.9" stroke-linecap="round"/><path d="M858.5,272.1 Q865.0,271.8 871.4,274.2" fill="none" stroke="#688834" stroke-width="1.9" stroke-linecap="round"/><path d="M858.5,274.8 Q852.0,274.5 845.5,277.0" fill="none" stroke="#688834" stroke-width="2.1" stroke-linecap="round"/><path d="M858.5,274.8 Q865.8,274.5 873.0,277.0" fill="none" stroke="#688834" stroke-width="2.1" stroke-linecap="round"/><path d="M858.5,277.5 Q850.8,277.2 843.2,279.9" fill="none" stroke="#688834" stroke-width="2.3" stroke-linecap="round"/><path d="M858.5,277.5 Q866.9,277.2 875.3,279.9" fill="none" stroke="#688834" stroke-width="2.3" stroke-linecap="round"/>
<rect x="931.8" y="235.5" width="1.4" height="48.3" fill="#688834"/><path d="M932.5,260.6 L944.0,274.8 L947.2,280.2 Q932.5,282.2 917.8,280.2 L921.0,274.8 Z" fill="#688834"/><path d="M932.5,239.2 Q931.2,239.1 929.8,240.0" fill="none" stroke="#688834" stroke-width="0.8" stroke-linecap="round"/><path d="M932.5,239.2 Q933.9,239.1 935.2,240.0" fill="none" stroke="#688834" stroke-width="0.8" stroke-linecap="round"/><path d="M932.5,242.0 Q930.5,241.9 928.5,242.9" fill="none" stroke="#688834" stroke-width="0.8" stroke-linecap="round"/><path d="M932.5,242.0 Q934.3,241.9 936.2,242.9" fill="none" stroke="#688834" stroke-width="0.8" stroke-linecap="round"/><path d="M932.5,244.7 Q930.2,244.6 927.8,245.7" fill="none" stroke="#688834" stroke-width="0.9" stroke-linecap="round"/><path d="M932.5,244.7 Q934.9,244.6 937.2,245.7" fill="none" stroke="#688834" stroke-width="0.9" stroke-linecap="round"/><path d="M932.5,247.4 Q929.9,247.3 927.3,248.5" fill="none" stroke="#688834" stroke-width="0.9" stroke-linecap="round"/><path d="M932.5,247.4 Q935.3,247.3 938.1,248.5" fill="none" stroke="#688834" stroke-width="0.9" stroke-linecap="round"/><path d="M932.5,250.2 Q929.1,250.0 925.8,251.4" fill="none" stroke="#688834" stroke-width="1.0" stroke-linecap="round"/><path d="M932.5,250.2 Q936.0,250.0 939.4,251.4" fill="none" stroke="#688834" stroke-width="1.0" stroke-linecap="round"/><path d="M932.5,252.9 Q929.1,252.7 925.7,254.2" fill="none" stroke="#688834" stroke-width="1.1" stroke-linecap="round"/><path d="M932.5,252.9 Q936.1,252.7 939.6,254.2" fill="none" stroke="#688834" stroke-width="1.1" stroke-linecap="round"/><path d="M932.5,255.7 Q928.7,255.5 924.9,257.1" fill="none" stroke="#688834" stroke-width="1.1" stroke-linecap="round"/><path d="M932.5,255.7 Q937.0,255.5 941.5,257.1" fill="none" stroke="#688834" stroke-width="1.1" stroke-linecap="round"/><path d="M932.5,258.4 Q927.7,258.2 922.8,259.9" fill="none" stroke="#688834" stroke-width="1.2" stroke-linecap="round"/><path d="M932.5,258.4 Q936.7,258.2 940.8,259.9" fill="none" stroke="#688834" stroke-width="1.2" stroke-linecap="round"/><path d="M932.5,261.1 Q926.8,260.9 921.2,262.8" fill="none" stroke="#688834" stroke-width="1.4" stroke-linecap="round"/><path d="M932.5,261.1 Q938.1,260.9 943.8,262.8" fill="none" stroke="#688834" stroke-width="1.4" stroke-linecap="round"/><path d="M932.5,263.9 Q926.8,263.6 921.0,265.6" fill="none" stroke="#688834" stroke-width="1.5" stroke-linecap="round"/><path d="M932.5,263.9 Q938.2,263.6 943.9,265.6" fill="none" stroke="#688834" stroke-width="1.5" stroke-linecap="round"/><path d="M932.5,266.6 Q927.0,266.3 921.5,268.5" fill="none" stroke="#688834" stroke-width="1.6" stroke-linecap="round"/><path d="M932.5,266.6 Q937.8,266.3 943.1,268.5" fill="none" stroke="#688834" stroke-width="1.6" stroke-linecap="round"/><path d="M932.5,269.3 Q926.0,269.1 919.5,271.3" fill="none" stroke="#688834" stroke-width="1.8" stroke-linecap="round"/><path d="M932.5,269.3 Q938.3,269.1 944.0,271.3" fill="none" stroke="#688834" stroke-width="1.8" stroke-linecap="round"/><path d="M932.5,272.1 Q926.1,271.8 919.7,274.2" fill="none" stroke="#688834" stroke-width="1.9" stroke-linecap="round"/><path d="M932.5,272.1 Q939.0,271.8 945.4,274.2" fill="none" stroke="#688834" stroke-width="1.9" stroke-linecap="round"/><path d="M932.5,274.8 Q926.0,274.5 919.5,277.0" fill="none" stroke="#688834" stroke-width="2.1" stroke-linecap="round"/><path d="M932.5,274.8 Q939.8,274.5 947.0,277.0" fill="none" stroke="#688834" stroke-width="2.1" stroke-linecap="round"/><path d="M932.5,277.5 Q924.8,277.2 917.2,279.9" fill="none" stroke="#688834" stroke-width="2.3" stroke-linecap="round"/><path d="M932.5,277.5 Q940.9,277.2 949.3,279.9" fill="none" stroke="#688834" stroke-width="2.3" stroke-linecap="round"/>
<rect x="965.4" y="235.5" width="1.4" height="48.3" fill="#688834"/><path d="M966.1,260.6 L977.6,274.8 L980.8,280.2 Q966.1,282.2 951.4,280.2 L954.6,274.8 Z" fill="#688834"/><path d="M966.1,239.2 Q964.8,239.1 963.4,240.0" fill="none" stroke="#688834" stroke-width="0.8" stroke-linecap="round"/><path d="M966.1,239.2 Q967.5,239.1 968.8,240.0" fill="none" stroke="#688834" stroke-width="0.8" stroke-linecap="round"/><path d="M966.1,242.0 Q964.1,241.9 962.1,242.9" fill="none" stroke="#688834" stroke-width="0.8" stroke-linecap="round"/><path d="M966.1,242.0 Q967.9,241.9 969.8,242.9" fill="none" stroke="#688834" stroke-width="0.8" stroke-linecap="round"/><path d="M966.1,244.7 Q963.8,244.6 961.4,245.7" fill="none" stroke="#688834" stroke-width="0.9" stroke-linecap="round"/><path d="M966.1,244.7 Q968.5,244.6 970.8,245.7" fill="none" stroke="#688834" stroke-width="0.9" stroke-linecap="round"/><path d="M966.1,247.4 Q963.5,247.3 960.9,248.5" fill="none" stroke="#688834" stroke-width="0.9" stroke-linecap="round"/><path d="M966.1,247.4 Q968.9,247.3 971.7,248.5" fill="none" stroke="#688834" stroke-width="0.9" stroke-linecap="round"/><path d="M966.1,250.2 Q962.7,250.0 959.4,251.4" fill="none" stroke="#688834" stroke-width="1.0" stroke-linecap="round"/><path d="M966.1,250.2 Q969.6,250.0 973.0,251.4" fill="none" stroke="#688834" stroke-width="1.0" stroke-linecap="round"/><path d="M966.1,252.9 Q962.7,252.7 959.3,254.2" fill="none" stroke="#688834" stroke-width="1.1" stroke-linecap="round"/><path d="M966.1,252.9 Q969.7,252.7 973.2,254.2" fill="none" stroke="#688834" stroke-width="1.1" stroke-linecap="round"/><path d="M966.1,255.7 Q962.3,255.5 958.5,257.1" fill="none" stroke="#688834" stroke-width="1.1" stroke-linecap="round"/><path d="M966.1,255.7 Q970.6,255.5 975.1,257.1" fill="none" stroke="#688834" stroke-width="1.1" stroke-linecap="round"/><path d="M966.1,258.4 Q961.3,258.2 956.4,259.9" fill="none" stroke="#688834" stroke-width="1.2" stroke-linecap="round"/><path d="M966.1,258.4 Q970.3,258.2 974.4,259.9" fill="none" stroke="#688834" stroke-width="1.2" stroke-linecap="round"/><path d="M966.1,261.1 Q960.4,260.9 954.8,262.8" fill="none" stroke="#688834" stroke-width="1.4" stroke-linecap="round"/><path d="M966.1,261.1 Q971.7,260.9 977.4,262.8" fill="none" stroke="#688834" stroke-width="1.4" stroke-linecap="round"/><path d="M966.1,263.9 Q960.4,263.6 954.6,265.6" fill="none" stroke="#688834" stroke-width="1.5" stroke-linecap="round"/><path d="M966.1,263.9 Q971.8,263.6 977.5,265.6" fill="none" stroke="#688834" stroke-width="1.5" stroke-linecap="round"/><path d="M966.1,266.6 Q960.6,266.3 955.1,268.5" fill="none" stroke="#688834" stroke-width="1.6" stroke-linecap="round"/><path d="M966.1,266.6 Q971.4,266.3 976.7,268.5" fill="none" stroke="#688834" stroke-width="1.6" stroke-linecap="round"/><path d="M966.1,269.3 Q959.6,269.1 953.1,271.3" fill="none" stroke="#688834" stroke-width="1.8" stroke-linecap="round"/><path d="M966.1,269.3 Q971.9,269.1 977.6,271.3" fill="none" stroke="#688834" stroke-width="1.8" stroke-linecap="round"/><path d="M966.1,272.1 Q959.7,271.8 953.3,274.2" fill="none" stroke="#688834" stroke-width="1.9" stroke-linecap="round"/><path d="M966.1,272.1 Q972.6,271.8 979.0,274.2" fill="none" stroke="#688834" stroke-width="1.9" stroke-linecap="round"/><path d="M966.1,274.8 Q959.6,274.5 953.1,277.0" fill="none" stroke="#688834" stroke-width="2.1" stroke-linecap="round"/><path d="M966.1,274.8 Q973.4,274.5 980.6,277.0" fill="none" stroke="#688834" stroke-width="2.1" stroke-linecap="round"/><path d="M966.1,277.5 Q958.4,277.2 950.8,279.9" fill="none" stroke="#688834" stroke-width="2.3" stroke-linecap="round"/><path d="M966.1,277.5 Q974.5,277.2 982.9,279.9" fill="none" stroke="#688834" stroke-width="2.3" stroke-linecap="round"/>
<rect x="998.8" y="235.5" width="1.4" height="48.3" fill="#688834"/><path d="M999.5,260.6 L1011.0,274.8 L1014.2,280.2 Q999.5,282.2 984.8,280.2 L988.0,274.8 Z" fill="#688834"/><path d="M999.5,239.2 Q998.2,239.1 996.8,240.0" fill="none" stroke="#688834" stroke-width="0.8" stroke-linecap="round"/><path d="M999.5,239.2 Q1000.9,239.1 1002.2,240.0" fill="none" stroke="#688834" stroke-width="0.8" stroke-linecap="round"/><path d="M999.5,242.0 Q997.5,241.9 995.5,242.9" fill="none" stroke="#688834" stroke-width="0.8" stroke-linecap="round"/><path d="M999.5,242.0 Q1001.3,241.9 1003.2,242.9" fill="none" stroke="#688834" stroke-width="0.8" stroke-linecap="round"/><path d="M999.5,244.7 Q997.2,244.6 994.8,245.7" fill="none" stroke="#688834" stroke-width="0.9" stroke-linecap="round"/><path d="M999.5,244.7 Q1001.9,244.6 1004.2,245.7" fill="none" stroke="#688834" stroke-width="0.9" stroke-linecap="round"/><path d="M999.5,247.4 Q996.9,247.3 994.3,248.5" fill="none" stroke="#688834" stroke-width="0.9" stroke-linecap="round"/><path d="M999.5,247.4 Q1002.3,247.3 1005.1,248.5" fill="none" stroke="#688834" stroke-width="0.9" stroke-linecap="round"/><path d="M999.5,250.2 Q996.1,250.0 992.8,251.4" fill="none" stroke="#688834" stroke-width="1.0" stroke-linecap="round"/><path d="M999.5,250.2 Q1003.0,250.0 1006.4,251.4" fill="none" stroke="#688834" stroke-width="1.0" stroke-linecap="round"/><path d="M999.5,252.9 Q996.1,252.7 992.7,254.2" fill="none" stroke="#688834" stroke-width="1.1" stroke-linecap="round"/><path d="M999.5,252.9 Q1003.1,252.7 1006.6,254.2" fill="none" stroke="#688834" stroke-width="1.1" stroke-linecap="round"/><path d="M999.5,255.7 Q995.7,255.5 991.9,257.1" fill="none" stroke="#688834" stroke-width="1.1" stroke-linecap="round"/><path d="M999.5,255.7 Q1004.0,255.5 1008.5,257.1" fill="none" stroke="#688834" stroke-width="1.1" stroke-linecap="round"/><path d="M999.5,258.4 Q994.7,258.2 989.8,259.9" fill="none" stroke="#688834" stroke-width="1.2" stroke-linecap="round"/><path d="M999.5,258.4 Q1003.7,258.2 1007.8,259.9" fill="none" stroke="#688834" stroke-width="1.2" stroke-linecap="round"/><path d="M999.5,261.1 Q993.8,260.9 988.2,262.8" fill="none" stroke="#688834" stroke-width="1.4" stroke-linecap="round"/><path d="M999.5,261.1 Q1005.1,260.9 1010.8,262.8" fill="none" stroke="#688834" stroke-width="1.4" stroke-linecap="round"/><path d="M999.5,263.9 Q993.8,263.6 988.0,265.6" fill="none" stroke="#688834" stroke-width="1.5" stroke-linecap="round"/><path d="M999.5,263.9 Q1005.2,263.6 1010.9,265.6" fill="none" stroke="#688834" stroke-width="1.5" stroke-linecap="round"/><path d="M999.5,266.6 Q994.0,266.3 988.5,268.5" fill="none" stroke="#688834" stroke-width="1.6" stroke-linecap="round"/><path d="M999.5,266.6 Q1004.8,266.3 1010.1,268.5" fill="none" stroke="#688834" stroke-width="1.6" stroke-linecap="round"/><path d="M999.5,269.3 Q993.0,269.1 986.5,271.3" fill="none" stroke="#688834" stroke-width="1.8" stroke-linecap="round"/><path d="M999.5,269.3 Q1005.3,269.1 1011.0,271.3" fill="none" stroke="#688834" stroke-width="1.8" stroke-linecap="round"/><path d="M999.5,272.1 Q993.1,271.8 986.7,274.2" fill="none" stroke="#688834" stroke-width="1.9" stroke-linecap="round"/><path d="M999.5,272.1 Q1006.0,271.8 1012.4,274.2" fill="none" stroke="#688834" stroke-width="1.9" stroke-linecap="round"/><path d="M999.5,274.8 Q993.0,274.5 986.5,277.0" fill="none" stroke="#688834" stroke-width="2.1" stroke-linecap="round"/><path d="M999.5,274.8 Q1006.8,274.5 1014.0,277.0" fill="none" stroke="#688834" stroke-width="2.1" stroke-linecap="round"/><path d="M999.5,277.5 Q991.8,277.2 984.2,279.9" fill="none" stroke="#688834" stroke-width="2.3" stroke-linecap="round"/><path d="M999.5,277.5 Q1007.9,277.2 1016.3,279.9" fill="none" stroke="#688834" stroke-width="2.3" stroke-linecap="round"/>
<g fill="none" stroke="#222" stroke-width="1.3"><rect x="374.7" y="339.4" width="662.2" height="232.8"/><path d="M595.7,339.4 V572.2 M816.2,339.4 V572.2 M374.7,455.9 H1036.9"/></g>
<g fill="#4f86c8"><rect x="448.1" y="400.3" width="80.9" height="4.7" rx="5.1" ry="2.3"/><rect x="444.0" y="404.1" width="88.1" height="4.7" rx="5.1" ry="2.3"/><rect x="448.7" y="407.8" width="80.2" height="4.7" rx="5.1" ry="2.3"/></g><path d="M447.6,405.1 Q488.8,407.3 529.9,404.7" stroke="#2f63a8" stroke-width="0.7" fill="none"/><path d="M447.6,408.4 Q488.8,410.6 529.9,408.0" stroke="#2f63a8" stroke-width="0.7" fill="none"/>
<g transform="translate(446.5,408.0) scale(1.0,1.0)"><path d="M0,-6 C-3,-2 -1,5 8,6.5 C22,9 40,7 50,-3 L60,-9 L52,-8 L57,-13 C46,-12 36,-17 24,-16 C14,-15 8,-10 4,-9 Z" fill="#fff" stroke="#2b2b2b" stroke-width="0.7" stroke-linejoin="round"/><path d="M10,-6 C18,-14 32,-15 42,-11 C36,-6 24,-2 14,0" fill="#fff" stroke="#2b2b2b" stroke-width="0.6"/><path d="M20,-8 C28,-10 36,-9 47,-6" fill="none" stroke="#2b2b2b" stroke-width="0.5"/><path d="M7,-3 C-2,-11 10,-22 7.5,-31.5 C6.5,-36.5 0.5,-36.5 -0.5,-32.5" fill="none" stroke="#2b2b2b" stroke-width="6.2" stroke-linecap="round"/><path d="M7,-3 C-2,-11 10,-22 7.5,-31.5 C6.5,-36.5 0.5,-36.5 -0.5,-32.5" fill="none" stroke="#fff" stroke-width="4.9" stroke-linecap="round"/><path d="M3,-8 L9,-1 L13,-8 Z" fill="#fff"/><path d="M-1.5,-34.1 L-8.5,-29.1 L0.0,-30.3 Z" fill="#e8842c" stroke="#2b2b2b" stroke-width="0.4"/><circle cx="-1.1" cy="-32.9" r="0.9" fill="#111"/></g>
<g fill="#4f86c8"><rect x="438.1" y="423.4" width="94.5" height="5.8" rx="6.3" ry="2.9"/><rect x="433.2" y="428.0" width="102.0" height="5.8" rx="6.3" ry="2.9"/><rect x="434.2" y="432.6" width="101.9" height="5.8" rx="6.3" ry="2.9"/><rect x="432.2" y="437.2" width="105.0" height="5.8" rx="6.3" ry="2.9"/><rect x="441.9" y="441.8" width="89.2" height="5.8" rx="6.3" ry="2.9"/></g><path d="M438.2,432.7 Q485.7,434.9 533.2,432.3" stroke="#2f63a8" stroke-width="0.7" fill="none"/><path d="M438.2,439.6 Q485.7,441.8 533.2,439.2" stroke="#2f63a8" stroke-width="0.7" fill="none"/>
<g fill="#4f86c8"><rect x="440.9" y="408.5" width="20.0" height="5.0" rx="5.5" ry="2.5"/><rect x="436.1" y="412.5" width="32.5" height="5.0" rx="5.5" ry="2.5"/><rect x="441.3" y="416.5" width="18.3" height="5.0" rx="5.5" ry="2.5"/></g><path d="M434.3,413.6 Q451.0,415.8 467.7,413.2" stroke="#2f63a8" stroke-width="0.7" fill="none"/><path d="M434.3,417.2 Q451.0,419.4 467.7,416.8" stroke="#2f63a8" stroke-width="0.7" fill="none"/>
<g transform="translate(451.5,434.0) scale(1.22,1.22)"><path d="M0,-6 C-3,-2 -1,5 8,6.5 C22,9 40,7 50,-3 L60,-9 L52,-8 L57,-13 C46,-12 36,-17 24,-16 C14,-15 8,-10 4,-9 Z" fill="#fff" stroke="#2b2b2b" stroke-width="0.7" stroke-linejoin="round"/><path d="M10,-6 C18,-14 32,-15 42,-11 C36,-6 24,-2 14,0" fill="#fff" stroke="#2b2b2b" stroke-width="0.6"/><path d="M20,-8 C28,-10 36,-9 47,-6" fill="none" stroke="#2b2b2b" stroke-width="0.5"/><path d="M7,-3 C-2,-11 10,-22 7.5,-31.5 C6.5,-36.5 0.5,-36.5 -0.5,-32.5" fill="none" stroke="#2b2b2b" stroke-width="6.2" stroke-linecap="round"/><path d="M7,-3 C-2,-11 10,-22 7.5,-31.5 C6.5,-36.5 0.5,-36.5 -0.5,-32.5" fill="none" stroke="#fff" stroke-width="4.9" stroke-linecap="round"/><path d="M3,-8 L9,-1 L13,-8 Z" fill="#fff"/><path d="M-1.5,-34.1 L-8.5,-29.1 L0.0,-30.3 Z" fill="#e8842c" stroke="#2b2b2b" stroke-width="0.4"/><circle cx="-1.1" cy="-32.9" r="0.9" fill="#111"/></g>
<g fill="#4f86c8"><rect x="616.2" y="401.4" width="59.7" height="5.6" rx="6.1" ry="2.8"/><rect x="611.8" y="405.9" width="68.6" height="5.6" rx="6.1" ry="2.8"/><rect x="618.0" y="410.4" width="59.1" height="5.6" rx="6.1" ry="2.8"/></g><path d="M612.2,407.1 Q646.2,409.3 680.3,406.7" stroke="#2f63a8" stroke-width="0.7" fill="none"/><path d="M612.2,411.1 Q646.2,413.3 680.3,410.7" stroke="#2f63a8" stroke-width="0.7" fill="none"/>
<g transform="translate(676.0,404.0) scale(-1.02,1.02)"><path d="M0,-6 C-3,-2 -1,5 8,6.5 C22,9 40,7 50,-3 L60,-9 L52,-8 L57,-13 C46,-12 36,-17 24,-16 C14,-15 8,-10 4,-9 Z" fill="#fff" stroke="#2b2b2b" stroke-width="0.7" stroke-linejoin="round"/><path d="M10,-6 C18,-14 32,-15 42,-11 C36,-6 24,-2 14,0" fill="#fff" stroke="#2b2b2b" stroke-width="0.6"/><path d="M20,-8 C28,-10 36,-9 47,-6" fill="none" stroke="#2b2b2b" stroke-width="0.5"/><path d="M7,-3 C-2,-11 10,-22 7.5,-31.5 C6.5,-36.5 0.5,-36.5 -0.5,-32.5" fill="none" stroke="#2b2b2b" stroke-width="6.2" stroke-linecap="round"/><path d="M7,-3 C-2,-11 10,-22 7.5,-31.5 C6.5,-36.5 0.5,-36.5 -0.5,-32.5" fill="none" stroke="#fff" stroke-width="4.9" stroke-linecap="round"/><path d="M3,-8 L9,-1 L13,-8 Z" fill="#fff"/><path d="M-1.5,-34.1 L-8.5,-29.1 L0.0,-30.3 Z" fill="#e8842c" stroke="#2b2b2b" stroke-width="0.4"/><circle cx="-1.1" cy="-32.9" r="0.9" fill="#111"/></g>
<g fill="#4f86c8"><rect x="730.5" y="397.9" width="57.9" height="5.5" rx="6.0" ry="2.7"/><rect x="725.5" y="402.2" width="68.3" height="5.5" rx="6.0" ry="2.7"/><rect x="729.2" y="406.6" width="58.1" height="5.5" rx="6.0" ry="2.7"/></g><path d="M726.4,403.4 Q760.0,405.6 793.6,403.0" stroke="#2f63a8" stroke-width="0.7" fill="none"/><path d="M726.4,407.3 Q760.0,409.5 793.6,406.9" stroke="#2f63a8" stroke-width="0.7" fill="none"/>
<g transform="translate(732.0,404.0) scale(0.76,0.76)"><path d="M0,-6 C-3,-2 -1,5 8,6.5 C22,9 40,7 50,-3 L60,-9 L52,-8 L57,-13 C46,-12 36,-17 24,-16 C14,-15 8,-10 4,-9 Z" fill="#fff" stroke="#2b2b2b" stroke-width="0.7" stroke-linejoin="round"/><path d="M10,-6 C18,-14 32,-15 42,-11 C36,-6 24,-2 14,0" fill="#fff" stroke="#2b2b2b" stroke-width="0.6"/><path d="M20,-8 C28,-10 36,-9 47,-6" fill="none" stroke="#2b2b2b" stroke-width="0.5"/><path d="M7,-3 C-2,-11 10,-22 7.5,-31.5 C6.5,-36.5 0.5,-36.5 -0.5,-32.5" fill="none" stroke="#2b2b2b" stroke-width="6.2" stroke-linecap="round"/><path d="M7,-3 C-2,-11 10,-22 7.5,-31.5 C6.5,-36.5 0.5,-36.5 -0.5,-32.5" fill="none" stroke="#fff" stroke-width="4.9" stroke-linecap="round"/><path d="M3,-8 L9,-1 L13,-8 Z" fill="#fff"/><path d="M-1.5,-34.1 L-8.5,-29.1 L0.0,-30.3 Z" fill="#e8842c" stroke="#2b2b2b" stroke-width="0.4"/><circle cx="-1.1" cy="-32.9" r="0.9" fill="#111"/></g>
<g fill="#4f86c8"><rect x="732.6" y="415.5" width="59.0" height="5.2" rx="5.7" ry="2.6"/><rect x="729.8" y="419.6" width="68.2" height="5.2" rx="5.7" ry="2.6"/><rect x="728.9" y="423.7" width="69.3" height="5.2" rx="5.7" ry="2.6"/><rect x="731.0" y="427.9" width="62.5" height="5.2" rx="5.7" ry="2.6"/></g><path d="M729.7,422.3 Q763.8,424.5 797.9,421.9" stroke="#2f63a8" stroke-width="0.7" fill="none"/><path d="M729.7,427.2 Q763.8,429.4 797.9,426.8" stroke="#2f63a8" stroke-width="0.7" fill="none"/>
<g transform="translate(737.5,421.0) scale(0.9,0.9)"><path d="M0,-6 C-3,-2 -1,5 8,6.5 C22,9 40,7 50,-3 L60,-9 L52,-8 L57,-13 C46,-12 36,-17 24,-16 C14,-15 8,-10 4,-9 Z" fill="#fff" stroke="#2b2b2b" stroke-width="0.7" stroke-linejoin="round"/><path d="M10,-6 C18,-14 32,-15 42,-11 C36,-6 24,-2 14,0" fill="#fff" stroke="#2b2b2b" stroke-width="0.6"/><path d="M20,-8 C28,-10 36,-9 47,-6" fill="none" stroke="#2b2b2b" stroke-width="0.5"/><path d="M7,-3 C-2,-11 10,-22 7.5,-31.5 C6.5,-36.5 0.5,-36.5 -0.5,-32.5" fill="none" stroke="#2b2b2b" stroke-width="6.2" stroke-linecap="round"/><path d="M7,-3 C-2,-11 10,-22 7.5,-31.5 C6.5,-36.5 0.5,-36.5 -0.5,-32.5" fill="none" stroke="#fff" stroke-width="4.9" stroke-linecap="round"/><path d="M3,-8 L9,-1 L13,-8 Z" fill="#fff"/><path d="M-1.5,-34.1 L-8.5,-29.1 L0.0,-30.3 Z" fill="#e8842c" stroke="#2b2b2b" stroke-width="0.4"/><circle cx="-1.1" cy="-32.9" r="0.9" fill="#111"/></g>
<g fill="#4f86c8"><rect x="906" y="372" width="46" height="10" rx="8.0" ry="5"/><rect x="888" y="378.5" width="78" height="11.0" rx="8.8" ry="5.5"/><rect x="881" y="386" width="94" height="12" rx="9.600000000000001" ry="6"/><rect x="884" y="394.5" width="86" height="11.0" rx="8.8" ry="5.5"/><rect x="887" y="402.5" width="90" height="11.0" rx="8.8" ry="5.5"/><rect x="889" y="410.5" width="80" height="11.0" rx="8.8" ry="5.5"/><rect x="893" y="418.5" width="83" height="11.0" rx="8.8" ry="5.5"/><rect x="896" y="426" width="66" height="10" rx="8.0" ry="5"/><rect x="899" y="433" width="75" height="10" rx="8.0" ry="5"/><rect x="903" y="440" width="53" height="10" rx="8.0" ry="5"/><rect x="908" y="447" width="32" height="6" rx="4.800000000000001" ry="3"/></g>
<path d="M889,404 Q900,412 896,424 M963,398 Q972,412 964,428 M902,440 Q925,452 952,442 M918,384 Q924,390 922,396" stroke="#2f63a8" stroke-width="0.8" fill="none"/>
<path d="M891,394 C889,384 894,378 901,380 C904,374 912,376 912.5,384 C913,392 908,397 900,397 C895,397 892,396 891,394 Z" fill="#fff" stroke="#2b2b2b" stroke-width="0.7"/>
<path d="M898,391 C894.5,383 899,376 896,368.5" fill="none" stroke="#2b2b2b" stroke-width="5.6" stroke-linecap="round"/><path d="M898,391 C894.5,383 899,376 896,368.5" fill="none" stroke="#fff" stroke-width="4.3" stroke-linecap="round"/><path d="M894.2,366.8 L891,373.4 L896,370.6 Z" fill="#e8842c" stroke="#2b2b2b" stroke-width="0.3"/><path d="M903,381 Q900,388 903,394" fill="none" stroke="#2b2b2b" stroke-width="0.5"/>
<path d="M926,400 C920,390 922,378 932,377 C938,377 941,383 940,388 C942,381 948,378 952,382 C957,388 957,402 950,409 C942,414 930,408 926,400 Z" fill="#fff" stroke="#2b2b2b" stroke-width="0.7"/>
<path d="M940,388 C939,394 941,400 946,405 M933,380 C930,388 932,396 938,403" fill="none" stroke="#2b2b2b" stroke-width="0.5"/>
<path d="M955,408 C958.5,397 951,386 955.5,375.5" fill="none" stroke="#2b2b2b" stroke-width="5.8" stroke-linecap="round"/><path d="M955,408 C958.5,397 951,386 955.5,375.5" fill="none" stroke="#fff" stroke-width="4.5" stroke-linecap="round"/><path d="M957.6,372.6 L964.6,380 L957.4,378 Z" fill="#e8842c" stroke="#2b2b2b" stroke-width="0.3"/><circle cx="958.6" cy="373.6" r="0.9" fill="#111"/>
<path d="M910,438 C907,424 912,410 921,403 C926,399 931,404 930,411 C936,403 942,398 945.5,400 C947.5,412 946.5,430 940,440 C932,448.5 916,448.5 910,438 Z" fill="#fff" stroke="#2b2b2b" stroke-width="0.7"/>
<path d="M930,411 C932,420 930,432 926,441 M938,404 C941,414 940,428 936,438" fill="none" stroke="#2b2b2b" stroke-width="0.5"/>
<path d="M914,437 C909,425 916.5,413 915,401.5" fill="none" stroke="#2b2b2b" stroke-width="6.6" stroke-linecap="round"/><path d="M914,437 C909,425 916.5,413 915,401.5" fill="none" stroke="#fff" stroke-width="5.2" stroke-linecap="round"/>
<path d="M914.6,401 L921,414.6 L917.6,414 L913.2,404 Z" fill="#e8842c" stroke="#2b2b2b" stroke-width="0.4"/><path d="M914.6,401 L917.4,406.6 L914.6,406 L913.2,403 Z" fill="#111"/><path d="M919,412 L921,414.6 L917.6,414 Z" fill="#111"/>
<g transform="translate(434,484) scale(1.0,1.0)"><path d="M8,30 C12,4 40,-8 62,-6 C88,-4 104,16 102,42 C101,68 86,84 56,84 C30,85 0,82 -2,62 C-4,48 2,42 8,30 Z" fill="#cfe3f5" filter="url(#soft)"/></g>
<g transform="translate(434,484) scale(1.0)"><path d="M7.3,64.5 Q25.2,39.0 49.0,19.0" stroke="#447a33" stroke-width="8.1" fill="none" stroke-linecap="round"/><path d="M7.3,64.5 l0.5,-5.5 M8.0,63.4 l6.0,-1.0 M9.6,61.3 l0.6,-7.3 M9.6,61.3 l5.4,-0.9 M10.3,60.3 l0.6,-7.2 M11.9,58.2 l0.6,-7.9 M13.4,56.2 l5.7,-1.0 M15.0,54.1 l0.7,-8.5 M15.8,53.1 l7.4,-1.3 M16.6,52.1 l0.5,-6.0 M18.2,50.1 l0.7,-8.2 M18.2,50.1 l6.4,-1.1 M20.7,47.1 l8.0,-1.4 M21.6,46.2 l6.8,-1.2 M22.4,45.2 l7.3,-1.3 M23.2,44.2 l0.8,-9.1 M25.8,41.3 l0.5,-6.5 M25.8,41.3 l5.9,-1.0 M26.7,40.4 l0.6,-7.8 M27.5,39.5 l0.5,-6.1 M29.3,37.6 l0.6,-7.0 M30.2,36.6 l0.6,-7.7 M31.1,35.7 l0.6,-7.0 M31.1,35.7 l6.9,-1.2 M32.0,34.8 l5.2,-0.9 M32.9,33.9 l0.5,-6.5 M33.8,33.0 l0.6,-7.0 M34.7,32.1 l6.6,-1.1 M35.6,31.2 l0.5,-5.8 M36.5,30.3 l0.4,-4.8 M36.5,30.3 l5.5,-0.9 M37.5,29.4 l0.4,-4.5 M37.5,29.4 l4.2,-0.7 M40.3,26.7 l4.2,-0.7 M42.2,25.0 l0.4,-4.7 M42.2,25.0 l4.9,-0.8 M43.1,24.1 l4.1,-0.7 M44.1,23.2 l4.4,-0.7 M45.1,22.4 l4.9,-0.8 M46.0,21.5 l4.0,-0.7 M48.0,19.8 l3.8,-0.7 " stroke="#2a5520" stroke-width="1.3" fill="none" stroke-linecap="round"/><path d="M8.0,63.4 l0.5,-6.2 M8.8,62.4 l0.6,-6.8 M8.8,62.4 l6.8,-1.2 M10.3,60.3 l6.9,-1.2 M11.1,59.3 l0.5,-5.5 M11.1,59.3 l5.3,-0.9 M11.9,58.2 l7.4,-1.3 M12.6,57.2 l0.5,-5.9 M14.2,55.1 l0.6,-7.6 M14.2,55.1 l6.2,-1.1 M15.0,54.1 l6.2,-1.1 M15.8,53.1 l0.6,-7.2 M16.6,52.1 l7.3,-1.3 M17.4,51.1 l0.6,-7.4 M17.4,51.1 l7.7,-1.3 M19.1,49.1 l0.5,-6.2 M19.1,49.1 l8.8,-1.5 M19.9,48.1 l0.5,-6.5 M19.9,48.1 l6.4,-1.1 M20.7,47.1 l0.7,-8.2 M22.4,45.2 l0.7,-8.4 M23.2,44.2 l6.6,-1.1 M24.1,43.3 l0.6,-6.9 M24.9,42.3 l0.6,-7.1 M24.9,42.3 l8.2,-1.4 M26.7,40.4 l6.4,-1.1 M27.5,39.5 l6.3,-1.1 M28.4,38.5 l7.3,-1.2 M29.3,37.6 l8.2,-1.4 M32.0,34.8 l0.6,-7.0 M33.8,33.0 l5.1,-0.9 M34.7,32.1 l0.5,-6.1 M35.6,31.2 l6.2,-1.1 M38.4,28.5 l0.5,-5.9 M38.4,28.5 l4.0,-0.7 M39.3,27.6 l0.4,-5.2 M39.3,27.6 l3.7,-0.6 M40.3,26.7 l0.3,-4.0 M41.2,25.8 l0.3,-4.0 M41.2,25.8 l4.0,-0.7 M43.1,24.1 l0.3,-3.7 M44.1,23.2 l0.4,-5.2 M45.1,22.4 l0.4,-4.7 M46.0,21.5 l0.4,-4.8 M47.0,20.7 l0.4,-4.6 M47.0,20.7 l5.2,-0.9 M48.0,19.8 l0.4,-4.5 M49.0,19.0 l0.3,-3.8 M49.0,19.0 l5.5,-1.0 " stroke="#5d9440" stroke-width="1.3" fill="none" stroke-linecap="round"/><path d="M7.3,64.5 l4.9,-0.8 M12.6,57.2 l5.8,-1.0 M13.4,56.2 l0.6,-7.7 M21.6,46.2 l0.7,-8.8 M24.1,43.3 l6.9,-1.2 M28.4,38.5 l0.5,-5.9 M30.2,36.6 l6.9,-1.2 M32.9,33.9 l6.6,-1.1 " stroke="#a9b94e" stroke-width="1.3" fill="none" stroke-linecap="round"/><path d="M7.3,64.5 Q25.2,39.0 49.0,19.0" stroke="#6b4a24" stroke-width="1.6" fill="none"/><path d="M10.0,62.0 Q9.4,51.5 5.0,42.0" stroke="#447a33" stroke-width="6.2" fill="none" stroke-linecap="round"/><path d="M10.0,62.0 l-4.1,-3.2 M9.9,60.6 l-3.4,-2.7 M9.8,59.2 l-3.4,-2.7 M9.6,57.8 l-5.1,-4.0 M9.6,57.8 l2.7,-6.1 M9.2,55.1 l-4.6,-3.7 M9.2,55.1 l2.4,-5.4 M8.9,53.8 l-5.1,-4.0 M8.9,53.8 l2.0,-4.5 M8.6,52.4 l2.1,-4.8 M8.3,51.1 l-4.0,-3.2 M7.9,49.8 l-3.5,-2.7 M7.9,49.8 l2.3,-5.2 M7.5,48.5 l-3.1,-2.4 M7.1,47.1 l-3.5,-2.7 M7.1,47.1 l1.5,-3.4 M6.6,45.8 l-2.9,-2.3 M6.1,44.6 l-2.9,-2.3 M6.1,44.6 l1.5,-3.3 M5.6,43.3 l1.2,-2.8 M5.0,42.0 l-3.1,-2.4 " stroke="#2a5520" stroke-width="1.3" fill="none" stroke-linecap="round"/><path d="M10.0,62.0 l1.9,-4.2 M9.8,59.2 l2.0,-4.5 M8.6,52.4 l-4.5,-3.6 M8.3,51.1 l2.1,-4.7 M7.5,48.5 l2.0,-4.4 M6.6,45.8 l1.6,-3.6 M5.6,43.3 l-2.3,-1.8 M5.0,42.0 l1.3,-3.0 " stroke="#5d9440" stroke-width="1.3" fill="none" stroke-linecap="round"/><path d="M9.9,60.6 l2.1,-4.7 M9.4,56.5 l-5.5,-4.3 M9.4,56.5 l2.0,-4.5 " stroke="#a9b94e" stroke-width="1.3" fill="none" stroke-linecap="round"/><path d="M8.0,68.0 Q16.0,70.0 24.0,72.0" stroke="#447a33" stroke-width="5.6" fill="none" stroke-linecap="round"/><path d="M8.0,68.0 l3.4,-1.5 M8.0,68.0 l2.4,3.1 M9.3,68.3 l4.2,-1.8 M9.3,68.3 l2.3,2.9 M10.7,68.7 l3.6,-1.6 M12.0,69.0 l4.8,-2.1 M13.3,69.3 l5.0,-2.2 M13.3,69.3 l3.3,4.3 M14.7,69.7 l5.8,-2.5 M16.0,70.0 l3.5,4.4 M17.3,70.3 l2.3,3.0 M18.7,70.7 l3.6,-1.6 M18.7,70.7 l2.6,3.3 M22.7,71.7 l3.2,-1.4 M22.7,71.7 l2.2,2.8 M24.0,72.0 l3.0,-1.3 M24.0,72.0 l2.0,2.6 " stroke="#2a5520" stroke-width="1.3" fill="none" stroke-linecap="round"/><path d="M12.0,69.0 l3.8,4.9 M14.7,69.7 l3.1,3.9 M16.0,70.0 l4.8,-2.1 M20.0,71.0 l3.5,-1.5 M20.0,71.0 l2.6,3.3 M21.3,71.3 l2.6,-1.1 M21.3,71.3 l2.2,2.8 " stroke="#5d9440" stroke-width="1.3" fill="none" stroke-linecap="round"/><path d="M10.7,68.7 l2.8,3.5 M17.3,70.3 l4.9,-2.2 " stroke="#a9b94e" stroke-width="1.3" fill="none" stroke-linecap="round"/><path d="M6.0,70.0 Q8.5,74.5 11.0,79.0" stroke="#447a33" stroke-width="5.0" fill="none" stroke-linecap="round"/><path d="M6.0,70.0 l3.3,1.4 M6.0,70.0 l-0.6,3.7 M6.7,71.3 l-0.5,3.5 M7.4,72.6 l4.7,2.0 M8.1,73.9 l5.2,2.2 M10.3,77.7 l-0.4,2.7 M11.0,79.0 l-0.5,3.1 " stroke="#2a5520" stroke-width="1.3" fill="none" stroke-linecap="round"/><path d="M7.4,72.6 l-0.6,4.0 M8.9,75.1 l3.6,1.5 M8.9,75.1 l-0.7,4.4 M9.6,76.4 l-0.6,3.7 M10.3,77.7 l3.0,1.3 " stroke="#5d9440" stroke-width="1.3" fill="none" stroke-linecap="round"/><path d="M6.7,71.3 l3.9,1.7 M8.1,73.9 l-0.6,4.0 M9.6,76.4 l3.7,1.6 M11.0,79.0 l2.4,1.0 " stroke="#a9b94e" stroke-width="1.3" fill="none" stroke-linecap="round"/><path d="M38.0,27.0 Q27.5,34.2 14.8,35.8" stroke="#447a33" stroke-width="6.8" fill="none" stroke-linecap="round"/><path d="M38.0,27.0 l-2.3,3.8 M38.0,27.0 l-3.9,-1.2 M36.8,27.8 l-2.3,3.7 M36.8,27.8 l-4.6,-1.4 M34.4,29.2 l-6.4,-2.0 M33.2,29.9 l-5.0,-1.5 M32.0,30.6 l-5.3,-1.6 M30.7,31.2 l-5.2,-1.6 M29.5,31.8 l-3.8,6.2 M26.9,32.8 l-6.2,-1.9 M24.3,33.7 l-2.3,3.8 M24.3,33.7 l-5.6,-1.7 M23.0,34.1 l-4.1,-1.3 M21.7,34.5 l-2.0,3.3 M20.3,34.8 l-4.2,-1.3 M19.0,35.1 l-1.9,3.1 M16.2,35.6 l-2.1,3.5 M16.2,35.6 l-3.4,-1.0 M14.8,35.8 l-4.0,-1.2 " stroke="#2a5520" stroke-width="1.3" fill="none" stroke-linecap="round"/><path d="M35.6,28.5 l-2.8,4.5 M35.6,28.5 l-4.4,-1.4 M34.4,29.2 l-2.7,4.4 M33.2,29.9 l-3.8,6.2 M29.5,31.8 l-5.9,-1.8 M28.2,32.3 l-3.7,6.0 M28.2,32.3 l-7.1,-2.2 M26.9,32.8 l-3.7,6.0 M25.6,33.3 l-5.3,-1.6 M23.0,34.1 l-2.6,4.2 M21.7,34.5 l-5.1,-1.6 M20.3,34.8 l-1.7,2.8 M19.0,35.1 l-3.3,-1.0 M17.6,35.4 l-3.1,-1.0 " stroke="#5d9440" stroke-width="1.3" fill="none" stroke-linecap="round"/><path d="M32.0,30.6 l-3.7,6.0 M30.7,31.2 l-3.8,6.2 M25.6,33.3 l-3.6,5.9 M17.6,35.4 l-1.7,2.7 M14.8,35.8 l-1.9,3.1 " stroke="#a9b94e" stroke-width="1.3" fill="none" stroke-linecap="round"/><path d="M44.0,27.0 Q34.4,45.4 30.4,65.8" stroke="#447a33" stroke-width="6.2" fill="none" stroke-linecap="round"/><path d="M44.0,27.0 l1.4,4.3 M44.0,27.0 l-4.1,2.6 M43.4,28.2 l1.8,5.3 M43.4,28.2 l-4.4,2.8 M42.2,30.6 l1.4,4.3 M42.2,30.6 l-4.9,3.2 M41.6,31.8 l1.5,4.4 M41.6,31.8 l-3.6,2.4 M41.0,33.0 l1.5,4.5 M41.0,33.0 l-5.0,3.2 M40.5,34.2 l1.7,5.0 M40.5,34.2 l-5.4,3.5 M39.9,35.4 l-5.0,3.2 M39.4,36.6 l-4.2,2.7 M38.9,37.9 l-4.5,2.9 M38.4,39.1 l1.7,5.1 M38.4,39.1 l-5.0,3.2 M37.9,40.3 l1.6,4.7 M37.9,40.3 l-4.6,3.0 M37.4,41.5 l1.7,5.2 M36.5,44.0 l2.0,5.9 M36.5,44.0 l-4.7,3.1 M36.0,45.3 l2.0,6.0 M35.6,46.5 l-4.0,2.6 M34.7,49.0 l1.6,4.8 M34.7,49.0 l-5.3,3.4 M33.9,51.6 l1.5,4.6 M33.9,51.6 l-3.3,2.2 M33.5,52.9 l-3.6,2.3 M32.8,55.4 l1.1,3.2 M32.8,55.4 l-3.5,2.3 M32.1,58.0 l1.2,3.5 M32.1,58.0 l-2.7,1.7 M31.8,59.3 l1.4,4.1 M31.8,59.3 l-2.7,1.8 M31.5,60.6 l-3.2,2.1 M30.9,63.2 l1.2,3.6 M30.7,64.5 l1.3,4.0 M30.7,64.5 l-2.7,1.7 " stroke="#2a5520" stroke-width="1.3" fill="none" stroke-linecap="round"/><path d="M42.8,29.4 l1.9,5.6 M42.8,29.4 l-3.5,2.2 M39.4,36.6 l1.6,4.7 M38.9,37.9 l2.1,6.4 M37.4,41.5 l-5.6,3.6 M36.9,42.8 l1.8,5.4 M36.9,42.8 l-3.9,2.5 M36.0,45.3 l-4.9,3.2 M35.1,47.8 l1.5,4.6 M35.1,47.8 l-4.7,3.0 M34.3,50.3 l1.5,4.6 M33.5,52.9 l1.1,3.4 M33.2,54.1 l1.5,4.6 M33.2,54.1 l-3.6,2.4 M32.5,56.7 l1.1,3.2 M31.2,61.9 l-2.8,1.8 M30.9,63.2 l-3.5,2.2 M30.4,65.8 l1.3,3.9 M30.4,65.8 l-3.6,2.3 " stroke="#5d9440" stroke-width="1.3" fill="none" stroke-linecap="round"/><path d="M39.9,35.4 l1.9,5.8 M35.6,46.5 l2.0,6.0 M34.3,50.3 l-4.9,3.1 M32.5,56.7 l-3.7,2.4 M31.5,60.6 l1.0,3.1 M31.2,61.9 l1.0,3.0 " stroke="#a9b94e" stroke-width="1.3" fill="none" stroke-linecap="round"/><path d="M58.0,40.0 Q59.5,59.0 61.0,78.0" stroke="#447a33" stroke-width="5.0" fill="none" stroke-linecap="round"/><path d="M58.0,40.0 l2.0,2.2 M58.1,41.3 l2.5,2.8 M58.2,42.6 l-2.3,3.5 M58.3,43.9 l-2.3,3.6 M58.4,45.2 l2.6,2.8 M58.4,45.2 l-2.3,3.5 M58.5,46.6 l3.3,3.7 M58.7,49.2 l-2.1,3.2 M58.8,50.5 l3.3,3.6 M58.8,50.5 l-2.6,3.9 M58.9,51.8 l2.9,3.2 M59.0,53.1 l3.2,3.5 M59.1,54.4 l3.3,3.6 M59.1,54.4 l-2.2,3.4 M59.2,55.7 l-2.9,4.5 M59.3,57.0 l3.4,3.7 M59.3,57.0 l-2.7,4.2 M59.4,58.3 l2.8,3.1 M59.4,58.3 l-2.2,3.3 M59.6,59.7 l3.3,3.6 M59.7,61.0 l2.4,2.7 M59.8,62.3 l-2.4,3.7 M59.9,63.6 l2.6,2.8 M60.1,66.2 l2.1,2.3 M60.1,66.2 l-2.0,3.1 M60.3,68.8 l-1.7,2.6 M60.5,71.4 l1.8,2.0 M60.5,71.4 l-1.6,2.4 M60.7,74.1 l2.0,2.2 M60.8,75.4 l1.5,1.7 M60.8,75.4 l-1.3,2.0 M61.0,78.0 l-1.4,2.1 " stroke="#2a5520" stroke-width="1.3" fill="none" stroke-linecap="round"/><path d="M58.0,40.0 l-1.6,2.5 M58.1,41.3 l-1.7,2.5 M58.2,42.6 l2.3,2.5 M58.3,43.9 l3.2,3.5 M58.6,47.9 l3.2,3.5 M58.7,49.2 l2.7,3.0 M58.9,51.8 l-2.7,4.2 M59.0,53.1 l-3.1,4.8 M59.7,61.0 l-2.7,4.1 M59.8,62.3 l3.3,3.6 M59.9,63.6 l-2.5,3.8 M60.0,64.9 l2.4,2.6 M60.0,64.9 l-2.2,3.3 M60.2,67.5 l-2.2,3.4 M60.3,68.8 l2.5,2.8 M60.4,70.1 l-1.6,2.5 M61.0,78.0 l2.1,2.3 " stroke="#5d9440" stroke-width="1.3" fill="none" stroke-linecap="round"/><path d="M58.5,46.6 l-2.3,3.6 M58.6,47.9 l-2.7,4.1 M59.2,55.7 l2.6,2.9 M59.6,59.7 l-2.4,3.6 M60.2,67.5 l2.0,2.2 M60.4,70.1 l2.0,2.2 M60.6,72.8 l2.0,2.2 M60.6,72.8 l-1.9,2.8 M60.7,74.1 l-1.6,2.4 M60.9,76.7 l2.3,2.6 M60.9,76.7 l-1.6,2.5 " stroke="#a9b94e" stroke-width="1.3" fill="none" stroke-linecap="round"/><path d="M49.0,19.0 Q34.8,11.0 18.5,10.8" stroke="#447a33" stroke-width="6.8" fill="none" stroke-linecap="round"/><path d="M49.0,19.0 l-4.8,2.0 M49.0,19.0 l-2.7,-3.5 M47.8,18.3 l-3.7,-4.9 M46.6,17.7 l-5.0,2.1 M46.6,17.7 l-3.0,-3.9 M45.4,17.1 l-4.3,1.8 M45.4,17.1 l-3.7,-4.9 M44.2,16.6 l-4.1,-5.5 M43.0,16.0 l-3.5,-4.7 M41.8,15.5 l-7.1,3.0 M41.8,15.5 l-3.2,-4.2 M36.8,13.7 l-6.5,2.7 M36.8,13.7 l-3.5,-4.6 M35.5,13.3 l-4.8,2.0 M35.5,13.3 l-3.2,-4.2 M34.3,13.0 l-6.0,2.5 M34.3,13.0 l-3.5,-4.7 M31.7,12.3 l-3.0,-3.9 M29.1,11.8 l-2.7,-3.6 M27.8,11.6 l-4.0,1.7 M26.5,11.4 l-4.7,2.0 M26.5,11.4 l-2.8,-3.7 M25.2,11.2 l-4.3,1.8 M25.2,11.2 l-2.2,-2.9 M23.9,11.1 l-3.7,1.6 M22.5,11.0 l-3.5,1.5 M22.5,11.0 l-2.9,-3.8 M21.2,10.9 l-3.0,1.3 M19.9,10.8 l-4.1,1.7 M19.9,10.8 l-1.9,-2.6 M18.5,10.8 l-4.4,1.8 " stroke="#2a5520" stroke-width="1.3" fill="none" stroke-linecap="round"/><path d="M47.8,18.3 l-5.3,2.2 M44.2,16.6 l-4.9,2.1 M43.0,16.0 l-6.5,2.7 M40.5,15.0 l-6.9,2.9 M40.5,15.0 l-4.4,-5.9 M39.3,14.5 l-3.8,-5.0 M38.0,14.1 l-6.9,2.9 M38.0,14.1 l-4.6,-6.0 M33.0,12.6 l-3.8,-5.1 M31.7,12.3 l-4.5,1.9 M30.4,12.1 l-6.0,2.5 M30.4,12.1 l-3.4,-4.4 M29.1,11.8 l-5.4,2.3 M23.9,11.1 l-2.5,-3.2 M21.2,10.9 l-2.0,-2.6 M18.5,10.8 l-2.8,-3.8 " stroke="#5d9440" stroke-width="1.3" fill="none" stroke-linecap="round"/><path d="M39.3,14.5 l-6.1,2.6 M33.0,12.6 l-5.0,2.1 M27.8,11.6 l-2.5,-3.3 " stroke="#a9b94e" stroke-width="1.3" fill="none" stroke-linecap="round"/><path d="M49.0,19.0 Q61.2,9.7 75.4,3.9" stroke="#447a33" stroke-width="6.2" fill="none" stroke-linecap="round"/><path d="M49.0,19.0 l3.7,0.5 M50.1,18.2 l4.6,0.7 M51.1,17.4 l1.5,-3.7 M52.2,16.6 l5.1,0.7 M53.3,15.9 l5.2,0.7 M54.4,15.1 l2.2,-5.3 M55.5,14.4 l5.5,0.8 M56.6,13.7 l6.7,0.9 M57.7,13.0 l2.6,-6.4 M58.9,12.3 l6.3,0.9 M60.0,11.6 l6.8,1.0 M62.3,10.3 l2.4,-5.7 M62.3,10.3 l5.7,0.8 M64.6,9.0 l1.6,-3.9 M65.8,8.4 l2.0,-4.8 M66.9,7.8 l1.4,-3.4 M68.1,7.2 l3.4,0.5 M69.3,6.6 l1.4,-3.4 M70.5,6.0 l1.6,-4.0 M74.2,4.4 l1.6,-3.8 M74.2,4.4 l3.9,0.5 " stroke="#2a5520" stroke-width="1.3" fill="none" stroke-linecap="round"/><path d="M49.0,19.0 l1.4,-3.3 M50.1,18.2 l2.0,-4.7 M51.1,17.4 l4.8,0.7 M52.2,16.6 l2.1,-5.0 M53.3,15.9 l2.4,-5.9 M54.4,15.1 l6.3,0.9 M55.5,14.4 l2.2,-5.4 M57.7,13.0 l4.9,0.7 M60.0,11.6 l2.3,-5.7 M61.1,10.9 l2.2,-5.3 M61.1,10.9 l4.9,0.7 M63.4,9.6 l1.8,-4.3 M63.4,9.6 l6.3,0.9 M65.8,8.4 l5.6,0.8 M66.9,7.8 l3.6,0.5 M68.1,7.2 l1.3,-3.2 M71.7,5.5 l1.6,-3.9 M71.7,5.5 l3.3,0.5 M72.9,4.9 l3.8,0.5 M75.4,3.9 l3.4,0.5 " stroke="#5d9440" stroke-width="1.3" fill="none" stroke-linecap="round"/><path d="M56.6,13.7 l1.8,-4.5 M58.9,12.3 l2.3,-5.7 M64.6,9.0 l5.6,0.8 M69.3,6.6 l2.9,0.4 M70.5,6.0 l3.9,0.5 M72.9,4.9 l1.4,-3.3 M75.4,3.9 l1.2,-2.9 " stroke="#a9b94e" stroke-width="1.3" fill="none" stroke-linecap="round"/><path d="M52.0,19.0 Q70.0,14.7 88.5,16.4" stroke="#447a33" stroke-width="5.6" fill="none" stroke-linecap="round"/><path d="M52.0,19.0 l2.9,-2.6 M52.0,19.0 l3.8,2.6 M53.3,18.7 l2.8,-2.5 M53.3,18.7 l3.0,2.0 M54.6,18.4 l2.9,-2.6 M55.9,18.1 l3.3,-3.0 M55.9,18.1 l4.2,2.8 M57.2,17.9 l4.2,2.8 M58.5,17.7 l3.1,-2.7 M58.5,17.7 l5.0,3.3 M59.7,17.4 l3.4,2.3 M61.0,17.2 l3.8,2.5 M62.3,17.0 l3.5,-3.2 M63.6,16.9 l3.9,-3.5 M64.9,16.7 l4.3,-3.8 M66.2,16.6 l4.1,-3.7 M66.2,16.6 l3.9,2.6 M68.8,16.3 l4.4,-4.0 M68.8,16.3 l3.7,2.5 M70.1,16.2 l4.5,3.0 M71.4,16.1 l4.4,-4.0 M71.4,16.1 l3.6,2.4 M72.8,16.0 l4.1,2.8 M74.1,16.0 l3.3,-2.9 M74.1,16.0 l4.0,2.7 M76.7,15.9 l3.1,2.1 M78.0,15.9 l3.4,2.2 M80.6,15.9 l2.2,-2.0 M81.9,16.0 l2.5,-2.2 M81.9,16.0 l2.7,1.8 M83.2,16.0 l2.2,-2.0 M84.5,16.1 l2.0,-1.8 M85.9,16.2 l2.0,-1.8 M87.2,16.3 l3.0,2.0 " stroke="#2a5520" stroke-width="1.3" fill="none" stroke-linecap="round"/><path d="M54.6,18.4 l4.5,3.0 M57.2,17.9 l3.0,-2.7 M62.3,17.0 l4.7,3.2 M63.6,16.9 l4.9,3.2 M64.9,16.7 l5.1,3.4 M67.5,16.4 l4.4,-4.0 M67.5,16.4 l4.1,2.7 M70.1,16.2 l3.0,-2.7 M72.8,16.0 l3.3,-3.0 M75.4,16.0 l2.8,-2.5 M75.4,16.0 l4.1,2.7 M76.7,15.9 l2.8,-2.5 M78.0,15.9 l2.6,-2.3 M79.3,15.9 l3.1,-2.7 M80.6,15.9 l2.8,1.9 M84.5,16.1 l3.2,2.1 M88.5,16.4 l2.4,-2.2 M88.5,16.4 l2.4,1.6 " stroke="#5d9440" stroke-width="1.3" fill="none" stroke-linecap="round"/><path d="M59.7,17.4 l4.0,-3.6 M61.0,17.2 l3.9,-3.5 M79.3,15.9 l2.7,1.8 M83.2,16.0 l2.7,1.8 M85.9,16.2 l2.8,1.9 M87.2,16.3 l2.0,-1.8 " stroke="#a9b94e" stroke-width="1.3" fill="none" stroke-linecap="round"/><g transform="translate(64.1,29.5) rotate(-50)"><ellipse cx="0" cy="0" rx="8.2" ry="16.5" fill="#c9a265" stroke="#4a3517" stroke-width="0.8"/><path d="M-4.0,-15.2 Q0,-12.0 4.0,-15.2" fill="none" stroke="#6b4a1f" stroke-width="0.7"/><path d="M-6.0,-11.9 Q0,-8.7 6.0,-11.9" fill="none" stroke="#6b4a1f" stroke-width="0.7"/><path d="M-7.0,-8.6 Q0,-5.4 7.0,-8.6" fill="none" stroke="#6b4a1f" stroke-width="0.7"/><path d="M-7.6,-5.3 Q0,-2.1 7.6,-5.3" fill="none" stroke="#6b4a1f" stroke-width="0.7"/><path d="M-7.9,-2.0 Q0,1.2 7.9,-2.0" fill="none" stroke="#6b4a1f" stroke-width="0.7"/><path d="M-7.8,1.3 Q0,4.5 7.8,1.3" fill="none" stroke="#6b4a1f" stroke-width="0.7"/><path d="M-7.4,4.6 Q0,7.8 7.4,4.6" fill="none" stroke="#6b4a1f" stroke-width="0.7"/><path d="M-6.7,7.9 Q0,11.1 6.7,7.9" fill="none" stroke="#6b4a1f" stroke-width="0.7"/><path d="M-5.3,11.2 Q0,14.4 5.3,11.2" fill="none" stroke="#6b4a1f" stroke-width="0.7"/><path d="M-2.7,14.5 Q0,17.7 2.7,14.5" fill="none" stroke="#6b4a1f" stroke-width="0.7"/><path d="M-3.0,-13.9 V13.9 M3.0,-13.9 V13.9" stroke="#8a6730" stroke-width="0.5" fill="none"/></g><g transform="translate(49.1,46.4) rotate(2)"><ellipse cx="0" cy="0" rx="8.5" ry="17.8" fill="#c9a265" stroke="#4a3517" stroke-width="0.8"/><path d="M-4.0,-16.5 Q0,-13.3 4.0,-16.5" fill="none" stroke="#6b4a1f" stroke-width="0.7"/><path d="M-5.9,-13.3 Q0,-10.1 5.9,-13.3" fill="none" stroke="#6b4a1f" stroke-width="0.7"/><path d="M-7.0,-10.0 Q0,-6.8 7.0,-10.0" fill="none" stroke="#6b4a1f" stroke-width="0.7"/><path d="M-7.7,-6.8 Q0,-3.6 7.7,-6.8" fill="none" stroke="#6b4a1f" stroke-width="0.7"/><path d="M-8.1,-3.6 Q0,-0.4 8.1,-3.6" fill="none" stroke="#6b4a1f" stroke-width="0.7"/><path d="M-8.2,-0.4 Q0,2.8 8.2,-0.4" fill="none" stroke="#6b4a1f" stroke-width="0.7"/><path d="M-8.0,2.9 Q0,6.1 8.0,2.9" fill="none" stroke="#6b4a1f" stroke-width="0.7"/><path d="M-7.5,6.1 Q0,9.3 7.5,6.1" fill="none" stroke="#6b4a1f" stroke-width="0.7"/><path d="M-6.6,9.3 Q0,12.5 6.6,9.3" fill="none" stroke="#6b4a1f" stroke-width="0.7"/><path d="M-5.3,12.6 Q0,15.8 5.3,12.6" fill="none" stroke="#6b4a1f" stroke-width="0.7"/><path d="M-2.7,15.8 Q0,19.0 2.7,15.8" fill="none" stroke="#6b4a1f" stroke-width="0.7"/><path d="M-3.1,-14.9 V14.9 M3.1,-14.9 V14.9" stroke="#8a6730" stroke-width="0.5" fill="none"/></g><g transform="translate(71.6,53.3) rotate(-50)"><ellipse cx="0" cy="0" rx="8.0" ry="17.0" fill="#c9a265" stroke="#4a3517" stroke-width="0.8"/><path d="M-3.9,-15.6 Q0,-12.4 3.9,-15.6" fill="none" stroke="#6b4a1f" stroke-width="0.7"/><path d="M-5.8,-12.2 Q0,-9.0 5.8,-12.2" fill="none" stroke="#6b4a1f" stroke-width="0.7"/><path d="M-6.8,-8.8 Q0,-5.6 6.8,-8.8" fill="none" stroke="#6b4a1f" stroke-width="0.7"/><path d="M-7.4,-5.4 Q0,-2.2 7.4,-5.4" fill="none" stroke="#6b4a1f" stroke-width="0.7"/><path d="M-7.7,-2.0 Q0,1.2 7.7,-2.0" fill="none" stroke="#6b4a1f" stroke-width="0.7"/><path d="M-7.6,1.4 Q0,4.6 7.6,1.4" fill="none" stroke="#6b4a1f" stroke-width="0.7"/><path d="M-7.2,4.8 Q0,8.0 7.2,4.8" fill="none" stroke="#6b4a1f" stroke-width="0.7"/><path d="M-6.5,8.2 Q0,11.4 6.5,8.2" fill="none" stroke="#6b4a1f" stroke-width="0.7"/><path d="M-5.2,11.6 Q0,14.8 5.2,11.6" fill="none" stroke="#6b4a1f" stroke-width="0.7"/><path d="M-2.6,15.0 Q0,18.2 2.6,15.0" fill="none" stroke="#6b4a1f" stroke-width="0.7"/><path d="M-2.9,-14.3 V14.3 M2.9,-14.3 V14.3" stroke="#8a6730" stroke-width="0.5" fill="none"/></g></g>
<g transform="translate(656,484) scale(0.98,0.98)"><path d="M8,30 C12,4 40,-8 62,-6 C88,-4 104,16 102,42 C101,68 86,84 56,84 C30,85 0,82 -2,62 C-4,48 2,42 8,30 Z" fill="#cfe3f5" filter="url(#soft)"/></g>
<g transform="translate(653,478) scale(1.0)"><path d="M7.3,64.5 Q25.2,39.0 49.0,19.0" stroke="#447a33" stroke-width="8.1" fill="none" stroke-linecap="round"/><path d="M7.3,64.5 l0.4,-5.1 M8.0,63.4 l7.0,-1.2 M9.6,61.3 l0.5,-6.6 M9.6,61.3 l7.6,-1.3 M10.3,60.3 l5.2,-0.9 M14.2,55.1 l7.5,-1.3 M15.0,54.1 l0.7,-8.9 M15.0,54.1 l5.8,-1.0 M15.8,53.1 l0.6,-7.2 M15.8,53.1 l8.8,-1.5 M16.6,52.1 l0.7,-8.8 M16.6,52.1 l6.5,-1.1 M17.4,51.1 l0.6,-7.5 M19.1,49.1 l7.7,-1.3 M20.7,47.1 l0.5,-6.2 M21.6,46.2 l8.8,-1.5 M23.2,44.2 l0.5,-6.2 M24.1,43.3 l8.7,-1.5 M24.9,42.3 l0.6,-7.4 M24.9,42.3 l7.8,-1.3 M25.8,41.3 l0.7,-8.3 M27.5,39.5 l0.6,-7.3 M27.5,39.5 l8.5,-1.5 M28.4,38.5 l7.6,-1.3 M31.1,35.7 l0.5,-6.3 M32.9,33.9 l4.9,-0.8 M33.8,33.0 l0.6,-6.9 M33.8,33.0 l5.7,-1.0 M34.7,32.1 l0.5,-6.5 M34.7,32.1 l4.7,-0.8 M36.5,30.3 l0.4,-4.4 M39.3,27.6 l5.2,-0.9 M42.2,25.0 l3.9,-0.7 M43.1,24.1 l0.4,-4.5 M44.1,23.2 l0.4,-4.6 M44.1,23.2 l5.5,-0.9 M46.0,21.5 l0.4,-4.8 M47.0,20.7 l5.4,-0.9 M48.0,19.8 l0.3,-3.8 M48.0,19.8 l5.5,-0.9 M49.0,19.0 l0.4,-5.2 M49.0,19.0 l4.1,-0.7 " stroke="#2a5520" stroke-width="1.3" fill="none" stroke-linecap="round"/><path d="M7.3,64.5 l4.9,-0.8 M8.0,63.4 l0.4,-5.3 M8.8,62.4 l0.6,-7.4 M8.8,62.4 l6.2,-1.1 M10.3,60.3 l0.7,-7.9 M11.1,59.3 l0.5,-6.6 M11.1,59.3 l5.7,-1.0 M11.9,58.2 l0.5,-6.5 M11.9,58.2 l8.0,-1.4 M12.6,57.2 l0.5,-6.1 M12.6,57.2 l6.8,-1.2 M13.4,56.2 l8.5,-1.5 M14.2,55.1 l0.7,-8.3 M17.4,51.1 l8.4,-1.4 M18.2,50.1 l0.8,-9.2 M19.1,49.1 l0.8,-9.1 M19.9,48.1 l8.7,-1.5 M20.7,47.1 l6.3,-1.1 M21.6,46.2 l0.7,-8.0 M22.4,45.2 l0.7,-8.4 M23.2,44.2 l7.7,-1.3 M24.1,43.3 l0.8,-9.1 M26.7,40.4 l0.5,-5.8 M26.7,40.4 l7.8,-1.3 M28.4,38.5 l0.6,-7.6 M29.3,37.6 l0.5,-5.5 M29.3,37.6 l6.2,-1.1 M30.2,36.6 l0.7,-8.1 M30.2,36.6 l6.4,-1.1 M31.1,35.7 l6.7,-1.1 M32.0,34.8 l0.6,-6.9 M32.0,34.8 l6.1,-1.0 M32.9,33.9 l0.5,-5.7 M35.6,31.2 l0.5,-6.6 M36.5,30.3 l5.4,-0.9 M37.5,29.4 l0.4,-4.4 M37.5,29.4 l4.6,-0.8 M38.4,28.5 l0.5,-5.8 M38.4,28.5 l3.9,-0.7 M39.3,27.6 l0.4,-4.6 M40.3,26.7 l0.4,-4.8 M40.3,26.7 l5.4,-0.9 M41.2,25.8 l0.4,-4.9 M41.2,25.8 l3.9,-0.7 M42.2,25.0 l0.4,-4.8 M43.1,24.1 l5.4,-0.9 M45.1,22.4 l0.4,-4.6 M45.1,22.4 l5.3,-0.9 M46.0,21.5 l5.5,-0.9 M47.0,20.7 l0.4,-4.4 " stroke="#5d9440" stroke-width="1.3" fill="none" stroke-linecap="round"/><path d="M13.4,56.2 l0.6,-7.1 M18.2,50.1 l8.5,-1.5 M19.9,48.1 l0.7,-8.7 M22.4,45.2 l6.7,-1.1 M25.8,41.3 l7.2,-1.2 M35.6,31.2 l4.4,-0.7 " stroke="#a9b94e" stroke-width="1.3" fill="none" stroke-linecap="round"/><path d="M7.3,64.5 Q25.2,39.0 49.0,19.0" stroke="#6b4a24" stroke-width="1.6" fill="none"/><path d="M10.0,62.0 Q9.4,51.5 5.0,42.0" stroke="#447a33" stroke-width="6.2" fill="none" stroke-linecap="round"/><path d="M10.0,62.0 l1.8,-4.0 M9.9,60.6 l1.9,-4.4 M9.8,59.2 l-4.0,-3.1 M9.4,56.5 l-4.7,-3.7 M9.4,56.5 l1.9,-4.3 M9.2,55.1 l-5.5,-4.3 M8.6,52.4 l-3.7,-2.9 M8.6,52.4 l2.5,-5.7 M8.3,51.1 l-3.6,-2.9 M8.3,51.1 l2.3,-5.3 M7.5,48.5 l2.0,-4.4 M7.1,47.1 l1.4,-3.3 M6.6,45.8 l-2.8,-2.2 M6.6,45.8 l1.7,-3.8 M6.1,44.6 l-3.2,-2.5 M6.1,44.6 l1.1,-2.6 M5.6,43.3 l-2.9,-2.3 M5.6,43.3 l1.7,-3.8 M5.0,42.0 l1.2,-2.8 " stroke="#2a5520" stroke-width="1.3" fill="none" stroke-linecap="round"/><path d="M10.0,62.0 l-4.2,-3.3 M9.6,57.8 l-3.9,-3.1 M9.2,55.1 l2.5,-5.7 M8.9,53.8 l-4.5,-3.6 M8.9,53.8 l2.0,-4.6 M7.9,49.8 l-4.3,-3.4 M7.9,49.8 l1.6,-3.7 M7.5,48.5 l-2.9,-2.3 M7.1,47.1 l-3.0,-2.4 M5.0,42.0 l-3.2,-2.5 " stroke="#5d9440" stroke-width="1.3" fill="none" stroke-linecap="round"/><path d="M9.9,60.6 l-4.3,-3.4 M9.8,59.2 l2.3,-5.2 M9.6,57.8 l2.0,-4.6 " stroke="#a9b94e" stroke-width="1.3" fill="none" stroke-linecap="round"/><path d="M8.0,68.0 Q16.0,70.0 24.0,72.0" stroke="#447a33" stroke-width="5.6" fill="none" stroke-linecap="round"/><path d="M8.0,68.0 l2.0,2.5 M9.3,68.3 l5.0,-2.2 M10.7,68.7 l5.3,-2.3 M10.7,68.7 l3.4,4.3 M12.0,69.0 l5.0,-2.2 M17.3,70.3 l4.4,-2.0 M17.3,70.3 l2.9,3.7 M18.7,70.7 l2.5,3.1 M21.3,71.3 l2.4,-1.1 M21.3,71.3 l2.0,2.5 M24.0,72.0 l2.8,-1.2 M24.0,72.0 l2.1,2.6 " stroke="#2a5520" stroke-width="1.3" fill="none" stroke-linecap="round"/><path d="M8.0,68.0 l3.0,-1.3 M9.3,68.3 l3.4,4.3 M12.0,69.0 l3.9,5.0 M13.3,69.3 l5.4,-2.4 M13.3,69.3 l3.4,4.3 M14.7,69.7 l5.1,-2.2 M14.7,69.7 l2.8,3.5 M16.0,70.0 l4.0,-1.7 M16.0,70.0 l3.0,3.9 M18.7,70.7 l4.6,-2.0 M20.0,71.0 l3.2,-1.4 M22.7,71.7 l2.9,-1.3 " stroke="#5d9440" stroke-width="1.3" fill="none" stroke-linecap="round"/><path d="M20.0,71.0 l2.2,2.8 M22.7,71.7 l1.8,2.3 " stroke="#a9b94e" stroke-width="1.3" fill="none" stroke-linecap="round"/><path d="M6.0,70.0 Q8.5,74.5 11.0,79.0" stroke="#447a33" stroke-width="5.0" fill="none" stroke-linecap="round"/><path d="M6.7,71.3 l3.9,1.7 M7.4,72.6 l-0.6,4.1 M8.9,75.1 l3.3,1.4 M10.3,77.7 l2.2,0.9 M11.0,79.0 l2.4,1.0 " stroke="#2a5520" stroke-width="1.3" fill="none" stroke-linecap="round"/><path d="M6.0,70.0 l3.0,1.3 M6.0,70.0 l-0.5,3.2 M6.7,71.3 l-0.8,5.0 M7.4,72.6 l5.0,2.1 M8.1,73.9 l3.8,1.6 M8.1,73.9 l-0.6,3.7 M8.9,75.1 l-0.7,4.4 M9.6,76.4 l3.2,1.4 M9.6,76.4 l-0.5,3.5 M10.3,77.7 l-0.3,2.3 " stroke="#5d9440" stroke-width="1.3" fill="none" stroke-linecap="round"/><path d="M11.0,79.0 l-0.4,2.6 " stroke="#a9b94e" stroke-width="1.3" fill="none" stroke-linecap="round"/><path d="M38.0,27.0 Q27.5,34.2 14.8,35.8" stroke="#447a33" stroke-width="6.8" fill="none" stroke-linecap="round"/><path d="M36.8,27.8 l-4.7,-1.4 M35.6,28.5 l-5.9,-1.8 M34.4,29.2 l-3.0,4.9 M34.4,29.2 l-6.3,-1.9 M33.2,29.9 l-6.4,-2.0 M30.7,31.2 l-2.8,4.5 M29.5,31.8 l-6.0,-1.8 M28.2,32.3 l-3.8,6.2 M28.2,32.3 l-7.2,-2.2 M26.9,32.8 l-3.0,5.0 M25.6,33.3 l-5.5,-1.7 M24.3,33.7 l-5.1,-1.6 M23.0,34.1 l-2.8,4.5 M21.7,34.5 l-4.8,-1.5 M20.3,34.8 l-1.9,3.2 M20.3,34.8 l-3.8,-1.2 M19.0,35.1 l-2.0,3.3 M19.0,35.1 l-3.8,-1.2 M17.6,35.4 l-3.7,-1.1 M14.8,35.8 l-1.9,3.2 " stroke="#2a5520" stroke-width="1.3" fill="none" stroke-linecap="round"/><path d="M38.0,27.0 l-4.0,-1.2 M36.8,27.8 l-3.2,5.2 M33.2,29.9 l-3.3,5.5 M32.0,30.6 l-3.0,4.9 M32.0,30.6 l-6.4,-2.0 M30.7,31.2 l-6.3,-1.9 M29.5,31.8 l-3.0,4.9 M26.9,32.8 l-5.8,-1.8 M25.6,33.3 l-2.7,4.4 M24.3,33.7 l-2.4,4.0 M23.0,34.1 l-5.5,-1.7 M21.7,34.5 l-2.2,3.5 M17.6,35.4 l-1.8,3.0 M16.2,35.6 l-4.2,-1.3 M14.8,35.8 l-4.1,-1.2 " stroke="#5d9440" stroke-width="1.3" fill="none" stroke-linecap="round"/><path d="M38.0,27.0 l-2.1,3.5 M35.6,28.5 l-3.3,5.4 M16.2,35.6 l-1.9,3.0 " stroke="#a9b94e" stroke-width="1.3" fill="none" stroke-linecap="round"/><path d="M44.0,27.0 Q34.4,45.4 30.4,65.8" stroke="#447a33" stroke-width="6.2" fill="none" stroke-linecap="round"/><path d="M44.0,27.0 l1.5,4.4 M43.4,28.2 l1.2,3.6 M43.4,28.2 l-3.7,2.4 M42.8,29.4 l-4.7,3.0 M42.2,30.6 l1.9,5.6 M42.2,30.6 l-4.3,2.8 M41.6,31.8 l-4.2,2.7 M41.0,33.0 l-3.9,2.5 M40.5,34.2 l2.1,6.2 M39.9,35.4 l-4.1,2.7 M39.4,36.6 l-4.4,2.8 M38.4,39.1 l-5.4,3.5 M37.9,40.3 l1.8,5.4 M37.4,41.5 l2.0,5.9 M37.4,41.5 l-5.2,3.4 M36.9,42.8 l2.2,6.5 M36.0,45.3 l2.1,6.3 M36.0,45.3 l-4.8,3.1 M35.6,46.5 l1.4,4.3 M35.1,47.8 l-4.9,3.2 M34.7,49.0 l-4.6,3.0 M33.9,51.6 l1.3,3.8 M33.5,52.9 l-4.2,2.7 M32.8,55.4 l-3.8,2.5 M32.1,58.0 l1.1,3.2 M31.8,59.3 l1.2,3.7 M31.5,60.6 l0.9,2.8 M31.2,61.9 l1.3,3.8 M31.2,61.9 l-3.6,2.3 M30.9,63.2 l-3.3,2.1 M30.7,64.5 l1.2,3.7 M30.7,64.5 l-2.9,1.9 M30.4,65.8 l1.3,3.8 " stroke="#2a5520" stroke-width="1.3" fill="none" stroke-linecap="round"/><path d="M41.6,31.8 l1.4,4.1 M41.0,33.0 l1.4,4.3 M40.5,34.2 l-5.0,3.2 M39.4,36.6 l1.6,4.7 M38.9,37.9 l1.7,5.0 M38.9,37.9 l-4.9,3.2 M38.4,39.1 l2.0,5.9 M36.9,42.8 l-4.5,2.9 M36.5,44.0 l1.8,5.5 M35.1,47.8 l1.7,5.1 M34.7,49.0 l1.6,4.9 M34.3,50.3 l1.3,3.9 M33.9,51.6 l-3.5,2.3 M33.5,52.9 l1.4,4.2 M33.2,54.1 l-3.7,2.4 M32.8,55.4 l1.0,3.1 M32.5,56.7 l1.2,3.5 M32.5,56.7 l-3.2,2.1 M32.1,58.0 l-3.0,2.0 M31.8,59.3 l-3.4,2.2 M31.5,60.6 l-3.4,2.2 M30.9,63.2 l1.0,2.9 M30.4,65.8 l-2.4,1.6 " stroke="#5d9440" stroke-width="1.3" fill="none" stroke-linecap="round"/><path d="M44.0,27.0 l-4.0,2.6 M42.8,29.4 l1.8,5.4 M39.9,35.4 l2.0,6.1 M37.9,40.3 l-4.4,2.8 M36.5,44.0 l-4.1,2.7 M35.6,46.5 l-3.8,2.5 M34.3,50.3 l-5.1,3.3 M33.2,54.1 l1.2,3.6 " stroke="#a9b94e" stroke-width="1.3" fill="none" stroke-linecap="round"/><path d="M58.0,40.0 Q59.5,59.0 61.0,78.0" stroke="#447a33" stroke-width="5.0" fill="none" stroke-linecap="round"/><path d="M58.0,40.0 l-2.3,3.5 M58.1,41.3 l-2.2,3.4 M58.2,42.6 l3.0,3.3 M58.2,42.6 l-2.5,3.7 M58.4,45.2 l-2.8,4.2 M58.5,46.6 l-2.2,3.4 M58.6,47.9 l-3.0,4.6 M58.8,50.5 l2.6,2.9 M58.8,50.5 l-2.2,3.3 M58.9,51.8 l3.6,3.9 M58.9,51.8 l-2.6,4.0 M59.0,53.1 l-2.5,3.8 M59.3,57.0 l3.6,3.9 M59.3,57.0 l-2.2,3.3 M59.4,58.3 l3.1,3.4 M59.4,58.3 l-2.5,3.8 M59.6,59.7 l-2.5,3.8 M59.7,61.0 l3.2,3.6 M59.8,62.3 l2.6,2.9 M59.9,63.6 l3.0,3.3 M59.9,63.6 l-2.2,3.4 M60.0,64.9 l2.5,2.7 M60.1,66.2 l2.4,2.7 M60.2,67.5 l1.8,2.0 M60.5,71.4 l1.8,2.0 M60.5,71.4 l-1.9,2.9 M60.6,72.8 l2.3,2.5 M60.6,72.8 l-1.8,2.7 M60.7,74.1 l1.8,2.0 M60.8,75.4 l2.2,2.4 M60.8,75.4 l-1.4,2.1 M60.9,76.7 l-1.4,2.1 M61.0,78.0 l1.6,1.8 " stroke="#2a5520" stroke-width="1.3" fill="none" stroke-linecap="round"/><path d="M58.1,41.3 l2.9,3.2 M58.3,43.9 l3.1,3.4 M58.3,43.9 l-2.1,3.2 M58.4,45.2 l3.5,3.8 M58.5,46.6 l3.2,3.5 M58.6,47.9 l3.4,3.7 M58.7,49.2 l2.6,2.8 M58.7,49.2 l-2.9,4.5 M59.1,54.4 l3.5,3.8 M59.1,54.4 l-2.1,3.2 M59.2,55.7 l3.3,3.6 M59.2,55.7 l-2.6,4.0 M59.6,59.7 l2.9,3.2 M59.8,62.3 l-1.9,2.9 M60.1,66.2 l-2.2,3.3 M60.3,68.8 l1.8,2.0 M60.3,68.8 l-1.5,2.3 M60.4,70.1 l2.2,2.5 M60.4,70.1 l-1.5,2.2 M60.7,74.1 l-1.6,2.5 M60.9,76.7 l1.6,1.8 M61.0,78.0 l-1.4,2.1 " stroke="#5d9440" stroke-width="1.3" fill="none" stroke-linecap="round"/><path d="M58.0,40.0 l2.1,2.3 M59.0,53.1 l3.2,3.6 M59.7,61.0 l-1.9,2.9 M60.0,64.9 l-2.3,3.5 M60.2,67.5 l-2.0,3.1 " stroke="#a9b94e" stroke-width="1.3" fill="none" stroke-linecap="round"/><path d="M49.0,19.0 Q34.8,11.0 18.5,10.8" stroke="#447a33" stroke-width="6.8" fill="none" stroke-linecap="round"/><path d="M49.0,19.0 l-5.4,2.3 M49.0,19.0 l-3.2,-4.3 M47.8,18.3 l-5.7,2.4 M47.8,18.3 l-3.7,-4.9 M46.6,17.7 l-6.2,2.6 M46.6,17.7 l-2.9,-3.8 M45.4,17.1 l-5.7,2.4 M45.4,17.1 l-3.4,-4.4 M44.2,16.6 l-4.6,1.9 M44.2,16.6 l-3.3,-4.3 M43.0,16.0 l-6.5,2.7 M40.5,15.0 l-7.0,2.9 M40.5,15.0 l-3.3,-4.4 M39.3,14.5 l-6.1,2.6 M39.3,14.5 l-3.3,-4.3 M38.0,14.1 l-4.2,-5.6 M36.8,13.7 l-4.8,2.0 M36.8,13.7 l-4.2,-5.5 M35.5,13.3 l-5.8,2.4 M35.5,13.3 l-3.2,-4.3 M33.0,12.6 l-5.3,2.2 M30.4,12.1 l-3.7,-4.9 M26.5,11.4 l-3.1,-4.1 M25.2,11.2 l-3.0,1.3 M25.2,11.2 l-2.4,-3.2 M22.5,11.0 l-3.1,1.3 M22.5,11.0 l-1.9,-2.5 M21.2,10.9 l-4.1,1.7 M19.9,10.8 l-3.4,1.4 " stroke="#2a5520" stroke-width="1.3" fill="none" stroke-linecap="round"/><path d="M43.0,16.0 l-4.4,-5.7 M41.8,15.5 l-4.0,-5.3 M38.0,14.1 l-6.5,2.7 M34.3,13.0 l-4.8,2.0 M34.3,13.0 l-3.4,-4.5 M33.0,12.6 l-4.0,-5.3 M31.7,12.3 l-4.0,-5.2 M29.1,11.8 l-5.1,2.1 M29.1,11.8 l-3.4,-4.5 M27.8,11.6 l-4.4,1.9 M27.8,11.6 l-2.4,-3.1 M26.5,11.4 l-3.4,1.4 M23.9,11.1 l-4.0,1.7 M23.9,11.1 l-2.4,-3.1 M19.9,10.8 l-2.1,-2.8 M18.5,10.8 l-3.0,1.3 M18.5,10.8 l-2.1,-2.8 " stroke="#5d9440" stroke-width="1.3" fill="none" stroke-linecap="round"/><path d="M41.8,15.5 l-6.9,2.9 M31.7,12.3 l-4.5,1.9 M30.4,12.1 l-4.9,2.1 M21.2,10.9 l-2.6,-3.4 " stroke="#a9b94e" stroke-width="1.3" fill="none" stroke-linecap="round"/><path d="M49.0,19.0 Q61.2,9.7 75.4,3.9" stroke="#447a33" stroke-width="6.2" fill="none" stroke-linecap="round"/><path d="M50.1,18.2 l2.2,-5.2 M51.1,17.4 l2.2,-5.4 M52.2,16.6 l2.2,-5.4 M52.2,16.6 l5.8,0.8 M53.3,15.9 l2.0,-4.8 M53.3,15.9 l4.9,0.7 M55.5,14.4 l2.7,-6.5 M55.5,14.4 l5.3,0.7 M56.6,13.7 l2.4,-5.9 M56.6,13.7 l5.7,0.8 M58.9,12.3 l2.0,-4.9 M58.9,12.3 l7.0,1.0 M60.0,11.6 l1.9,-4.6 M61.1,10.9 l1.8,-4.3 M61.1,10.9 l5.4,0.8 M62.3,10.3 l1.9,-4.5 M63.4,9.6 l1.8,-4.3 M64.6,9.0 l1.9,-4.6 M64.6,9.0 l5.9,0.8 M65.8,8.4 l1.6,-3.8 M65.8,8.4 l5.2,0.7 M66.9,7.8 l1.6,-3.9 M68.1,7.2 l1.4,-3.3 M68.1,7.2 l3.6,0.5 M69.3,6.6 l3.9,0.5 M70.5,6.0 l3.6,0.5 M71.7,5.5 l3.3,0.5 M74.2,4.4 l1.5,-3.6 M74.2,4.4 l3.4,0.5 M75.4,3.9 l1.5,-3.6 " stroke="#2a5520" stroke-width="1.3" fill="none" stroke-linecap="round"/><path d="M49.0,19.0 l1.8,-4.3 M49.0,19.0 l4.3,0.6 M50.1,18.2 l5.2,0.7 M54.4,15.1 l2.2,-5.3 M54.4,15.1 l5.2,0.7 M57.7,13.0 l2.5,-6.2 M57.7,13.0 l5.8,0.8 M60.0,11.6 l6.2,0.9 M63.4,9.6 l5.6,0.8 M66.9,7.8 l3.7,0.5 M70.5,6.0 l1.2,-2.9 M72.9,4.9 l1.1,-2.7 M72.9,4.9 l3.2,0.4 " stroke="#5d9440" stroke-width="1.3" fill="none" stroke-linecap="round"/><path d="M51.1,17.4 l4.3,0.6 M62.3,10.3 l4.7,0.7 M69.3,6.6 l1.2,-3.0 M71.7,5.5 l1.2,-2.9 M75.4,3.9 l3.7,0.5 " stroke="#a9b94e" stroke-width="1.3" fill="none" stroke-linecap="round"/><path d="M52.0,19.0 Q70.0,14.7 88.5,16.4" stroke="#447a33" stroke-width="5.6" fill="none" stroke-linecap="round"/><path d="M52.0,19.0 l3.5,-3.1 M52.0,19.0 l3.4,2.3 M53.3,18.7 l3.8,-3.4 M57.2,17.9 l3.7,-3.3 M57.2,17.9 l4.8,3.2 M58.5,17.7 l3.8,2.5 M59.7,17.4 l4.1,2.7 M61.0,17.2 l3.5,-3.2 M62.3,17.0 l4.4,-3.9 M63.6,16.9 l4.3,-3.9 M64.9,16.7 l3.6,2.4 M66.2,16.6 l3.5,-3.2 M66.2,16.6 l4.2,2.8 M67.5,16.4 l4.6,-4.1 M68.8,16.3 l3.9,2.6 M70.1,16.2 l4.2,-3.8 M70.1,16.2 l3.4,2.3 M71.4,16.1 l3.2,-2.9 M72.8,16.0 l3.5,-3.2 M72.8,16.0 l3.6,2.4 M75.4,16.0 l3.4,-3.0 M75.4,16.0 l3.5,2.3 M76.7,15.9 l2.9,-2.6 M78.0,15.9 l2.4,-2.1 M79.3,15.9 l3.2,2.1 M81.9,16.0 l2.9,1.9 M83.2,16.0 l2.9,-2.6 M83.2,16.0 l2.3,1.6 M84.5,16.1 l2.7,1.8 M85.9,16.2 l2.5,1.6 M87.2,16.3 l2.7,-2.4 M87.2,16.3 l2.2,1.5 M88.5,16.4 l2.6,-2.4 M88.5,16.4 l2.8,1.9 " stroke="#2a5520" stroke-width="1.3" fill="none" stroke-linecap="round"/><path d="M53.3,18.7 l3.5,2.3 M54.6,18.4 l4.3,2.9 M55.9,18.1 l4.0,2.6 M59.7,17.4 l3.7,-3.3 M61.0,17.2 l3.5,2.3 M64.9,16.7 l3.6,-3.2 M67.5,16.4 l3.5,2.3 M68.8,16.3 l4.6,-4.1 M74.1,16.0 l3.8,-3.4 M76.7,15.9 l3.9,2.6 M78.0,15.9 l3.0,2.0 M79.3,15.9 l3.1,-2.7 M80.6,15.9 l2.2,-2.0 M80.6,15.9 l3.1,2.1 M81.9,16.0 l2.8,-2.5 M84.5,16.1 l2.1,-1.9 M85.9,16.2 l2.1,-1.9 " stroke="#5d9440" stroke-width="1.3" fill="none" stroke-linecap="round"/><path d="M54.6,18.4 l3.2,-2.8 M55.9,18.1 l2.8,-2.5 M58.5,17.7 l3.2,-2.8 M62.3,17.0 l3.9,2.6 M63.6,16.9 l4.6,3.1 M71.4,16.1 l3.5,2.3 M74.1,16.0 l4.2,2.8 " stroke="#a9b94e" stroke-width="1.3" fill="none" stroke-linecap="round"/><g transform="translate(64.1,29.5) rotate(-50)"><ellipse cx="0" cy="0" rx="8.2" ry="16.5" fill="#c9a265" stroke="#4a3517" stroke-width="0.8"/><path d="M-4.0,-15.2 Q0,-12.0 4.0,-15.2" fill="none" stroke="#6b4a1f" stroke-width="0.7"/><path d="M-6.0,-11.9 Q0,-8.7 6.0,-11.9" fill="none" stroke="#6b4a1f" stroke-width="0.7"/><path d="M-7.0,-8.6 Q0,-5.4 7.0,-8.6" fill="none" stroke="#6b4a1f" stroke-width="0.7"/><path d="M-7.6,-5.3 Q0,-2.1 7.6,-5.3" fill="none" stroke="#6b4a1f" stroke-width="0.7"/><path d="M-7.9,-2.0 Q0,1.2 7.9,-2.0" fill="none" stroke="#6b4a1f" stroke-width="0.7"/><path d="M-7.8,1.3 Q0,4.5 7.8,1.3" fill="none" stroke="#6b4a1f" stroke-width="0.7"/><path d="M-7.4,4.6 Q0,7.8 7.4,4.6" fill="none" stroke="#6b4a1f" stroke-width="0.7"/><path d="M-6.7,7.9 Q0,11.1 6.7,7.9" fill="none" stroke="#6b4a1f" stroke-width="0.7"/><path d="M-5.3,11.2 Q0,14.4 5.3,11.2" fill="none" stroke="#6b4a1f" stroke-width="0.7"/><path d="M-2.7,14.5 Q0,17.7 2.7,14.5" fill="none" stroke="#6b4a1f" stroke-width="0.7"/><path d="M-3.0,-13.9 V13.9 M3.0,-13.9 V13.9" stroke="#8a6730" stroke-width="0.5" fill="none"/></g><g transform="translate(49.1,46.4) rotate(2)"><ellipse cx="0" cy="0" rx="8.5" ry="17.8" fill="#c9a265" stroke="#4a3517" stroke-width="0.8"/><path d="M-4.0,-16.5 Q0,-13.3 4.0,-16.5" fill="none" stroke="#6b4a1f" stroke-width="0.7"/><path d="M-5.9,-13.3 Q0,-10.1 5.9,-13.3" fill="none" stroke="#6b4a1f" stroke-width="0.7"/><path d="M-7.0,-10.0 Q0,-6.8 7.0,-10.0" fill="none" stroke="#6b4a1f" stroke-width="0.7"/><path d="M-7.7,-6.8 Q0,-3.6 7.7,-6.8" fill="none" stroke="#6b4a1f" stroke-width="0.7"/><path d="M-8.1,-3.6 Q0,-0.4 8.1,-3.6" fill="none" stroke="#6b4a1f" stroke-width="0.7"/><path d="M-8.2,-0.4 Q0,2.8 8.2,-0.4" fill="none" stroke="#6b4a1f" stroke-width="0.7"/><path d="M-8.0,2.9 Q0,6.1 8.0,2.9" fill="none" stroke="#6b4a1f" stroke-width="0.7"/><path d="M-7.5,6.1 Q0,9.3 7.5,6.1" fill="none" stroke="#6b4a1f" stroke-width="0.7"/><path d="M-6.6,9.3 Q0,12.5 6.6,9.3" fill="none" stroke="#6b4a1f" stroke-width="0.7"/><path d="M-5.3,12.6 Q0,15.8 5.3,12.6" fill="none" stroke="#6b4a1f" stroke-width="0.7"/><path d="M-2.7,15.8 Q0,19.0 2.7,15.8" fill="none" stroke="#6b4a1f" stroke-width="0.7"/><path d="M-3.1,-14.9 V14.9 M3.1,-14.9 V14.9" stroke="#8a6730" stroke-width="0.5" fill="none"/></g></g>
<g transform="translate(738.5,540.7) rotate(-52)"><ellipse cx="0" cy="0" rx="7.5" ry="13.0" fill="#c9a265" stroke="#4a3517" stroke-width="0.8"/><path d="M-4.1,-11.7 Q0,-8.5 4.1,-11.7" fill="none" stroke="#6b4a1f" stroke-width="0.7"/><path d="M-5.9,-8.5 Q0,-5.3 5.9,-8.5" fill="none" stroke="#6b4a1f" stroke-width="0.7"/><path d="M-6.8,-5.2 Q0,-2.0 6.8,-5.2" fill="none" stroke="#6b4a1f" stroke-width="0.7"/><path d="M-7.2,-2.0 Q0,1.2 7.2,-2.0" fill="none" stroke="#6b4a1f" stroke-width="0.7"/><path d="M-7.1,1.3 Q0,4.5 7.1,1.3" fill="none" stroke="#6b4a1f" stroke-width="0.7"/><path d="M-6.5,4.5 Q0,7.7 6.5,4.5" fill="none" stroke="#6b4a1f" stroke-width="0.7"/><path d="M-5.3,7.8 Q0,11.0 5.3,7.8" fill="none" stroke="#6b4a1f" stroke-width="0.7"/><path d="M-2.7,11.0 Q0,14.2 2.7,11.0" fill="none" stroke="#6b4a1f" stroke-width="0.7"/><path d="M-2.7,-10.9 V10.9 M2.7,-10.9 V10.9" stroke="#8a6730" stroke-width="0.5" fill="none"/></g>
<path d="M726,520 q4,5 4,11 M730,519 q5,5 6,11 M735,519 q5,3 8,8" stroke="#6a7a8a" stroke-width="0.6" fill="none"/>
<path d="M741,522 L746,521.5 L747,526 L745.5,528.5 L742,527 L743.5,525 Z" fill="#ee4b3a"/>
<g transform="translate(870,486.5) scale(1.0509,0.93)"><path d="M8,30 C12,4 40,-8 62,-6 C88,-4 104,16 102,42 C101,68 86,84 56,84 C30,85 0,82 -2,62 C-4,48 2,42 8,30 Z" fill="#cfe3f5" filter="url(#soft)"/></g>
<g transform="translate(865,481.5) scale(1.0)"><path d="M7.3,64.5 Q25.2,39.0 49.0,19.0" stroke="#447a33" stroke-width="8.1" fill="none" stroke-linecap="round"/><path d="M7.3,64.5 l6.5,-1.1 M8.0,63.4 l5.9,-1.0 M8.8,62.4 l0.5,-5.9 M9.6,61.3 l6.6,-1.1 M10.3,60.3 l0.5,-6.4 M10.3,60.3 l7.1,-1.2 M11.9,58.2 l7.2,-1.2 M12.6,57.2 l0.6,-7.6 M12.6,57.2 l6.7,-1.1 M13.4,56.2 l0.5,-5.8 M13.4,56.2 l5.6,-1.0 M14.2,55.1 l7.0,-1.2 M15.0,54.1 l0.6,-6.9 M15.8,53.1 l0.6,-7.8 M15.8,53.1 l7.4,-1.3 M16.6,52.1 l0.6,-7.2 M16.6,52.1 l7.1,-1.2 M17.4,51.1 l7.9,-1.4 M18.2,50.1 l0.8,-9.1 M18.2,50.1 l6.6,-1.1 M19.1,49.1 l0.7,-9.0 M19.9,48.1 l0.7,-8.9 M21.6,46.2 l0.7,-8.5 M22.4,45.2 l0.7,-7.9 M22.4,45.2 l7.5,-1.3 M23.2,44.2 l0.6,-6.8 M23.2,44.2 l7.2,-1.2 M24.1,43.3 l7.8,-1.3 M24.9,42.3 l0.6,-7.8 M24.9,42.3 l7.0,-1.2 M25.8,41.3 l0.6,-7.4 M25.8,41.3 l6.6,-1.1 M27.5,39.5 l0.6,-7.9 M27.5,39.5 l5.8,-1.0 M28.4,38.5 l0.5,-6.0 M29.3,37.6 l0.5,-6.0 M30.2,36.6 l0.5,-5.5 M32.0,34.8 l0.5,-6.3 M33.8,33.0 l7.0,-1.2 M34.7,32.1 l0.6,-6.9 M34.7,32.1 l4.8,-0.8 M35.6,31.2 l0.5,-6.3 M37.5,29.4 l0.4,-5.2 M38.4,28.5 l0.4,-4.9 M39.3,27.6 l0.3,-3.9 M40.3,26.7 l4.7,-0.8 M41.2,25.8 l0.4,-4.7 M41.2,25.8 l4.5,-0.8 M42.2,25.0 l4.8,-0.8 M43.1,24.1 l5.1,-0.9 M44.1,23.2 l0.4,-4.6 M45.1,22.4 l4.6,-0.8 M46.0,21.5 l0.5,-5.4 M46.0,21.5 l3.7,-0.6 M47.0,20.7 l0.3,-3.9 M47.0,20.7 l4.8,-0.8 M48.0,19.8 l0.5,-5.6 " stroke="#2a5520" stroke-width="1.3" fill="none" stroke-linecap="round"/><path d="M7.3,64.5 l0.5,-5.8 M8.0,63.4 l0.5,-5.5 M8.8,62.4 l5.2,-0.9 M9.6,61.3 l0.6,-7.4 M11.9,58.2 l0.6,-7.2 M15.0,54.1 l6.4,-1.1 M17.4,51.1 l0.7,-8.2 M19.9,48.1 l7.5,-1.3 M20.7,47.1 l0.7,-8.4 M20.7,47.1 l6.6,-1.1 M21.6,46.2 l6.7,-1.1 M26.7,40.4 l7.5,-1.3 M29.3,37.6 l7.2,-1.2 M30.2,36.6 l6.5,-1.1 M31.1,35.7 l0.6,-7.3 M32.0,34.8 l5.4,-0.9 M32.9,33.9 l0.5,-6.6 M32.9,33.9 l7.4,-1.3 M33.8,33.0 l0.5,-5.5 M35.6,31.2 l5.0,-0.9 M36.5,30.3 l0.4,-4.5 M36.5,30.3 l5.0,-0.9 M37.5,29.4 l4.5,-0.8 M38.4,28.5 l5.1,-0.9 M39.3,27.6 l4.0,-0.7 M40.3,26.7 l0.3,-3.7 M42.2,25.0 l0.4,-4.4 M43.1,24.1 l0.4,-4.9 M44.1,23.2 l5.2,-0.9 M45.1,22.4 l0.4,-4.5 M49.0,19.0 l0.4,-4.7 " stroke="#5d9440" stroke-width="1.3" fill="none" stroke-linecap="round"/><path d="M11.1,59.3 l0.5,-6.1 M11.1,59.3 l6.2,-1.1 M14.2,55.1 l0.7,-8.3 M19.1,49.1 l8.5,-1.4 M24.1,43.3 l0.7,-8.8 M26.7,40.4 l0.6,-7.2 M28.4,38.5 l6.5,-1.1 M31.1,35.7 l6.6,-1.1 M48.0,19.8 l5.4,-0.9 M49.0,19.0 l3.8,-0.6 " stroke="#a9b94e" stroke-width="1.3" fill="none" stroke-linecap="round"/><path d="M7.3,64.5 Q25.2,39.0 49.0,19.0" stroke="#6b4a24" stroke-width="1.6" fill="none"/><path d="M10.0,62.0 Q9.4,51.5 5.0,42.0" stroke="#447a33" stroke-width="6.2" fill="none" stroke-linecap="round"/><path d="M10.0,62.0 l-2.9,-2.3 M10.0,62.0 l1.6,-3.6 M9.8,59.2 l-5.0,-3.9 M9.8,59.2 l2.1,-4.8 M9.6,57.8 l-5.0,-3.9 M9.6,57.8 l2.1,-4.9 M9.4,56.5 l-5.1,-4.0 M9.4,56.5 l2.4,-5.4 M8.9,53.8 l2.9,-6.5 M8.6,52.4 l-4.2,-3.3 M8.6,52.4 l2.1,-4.8 M7.9,49.8 l-4.5,-3.5 M7.9,49.8 l1.9,-4.3 M7.5,48.5 l-2.9,-2.3 M7.5,48.5 l1.8,-4.2 M6.6,45.8 l-2.7,-2.1 M6.6,45.8 l1.4,-3.1 M5.0,42.0 l-2.9,-2.3 M5.0,42.0 l1.2,-2.6 " stroke="#2a5520" stroke-width="1.3" fill="none" stroke-linecap="round"/><path d="M9.9,60.6 l-3.5,-2.7 M9.9,60.6 l2.0,-4.6 M9.2,55.1 l2.3,-5.2 M8.9,53.8 l-5.1,-4.0 M8.3,51.1 l2.6,-6.0 M7.1,47.1 l-3.4,-2.7 M7.1,47.1 l1.4,-3.1 M5.6,43.3 l-3.2,-2.5 M5.6,43.3 l1.3,-3.0 " stroke="#5d9440" stroke-width="1.3" fill="none" stroke-linecap="round"/><path d="M9.2,55.1 l-5.4,-4.2 M8.3,51.1 l-3.8,-3.0 M6.1,44.6 l-3.3,-2.6 M6.1,44.6 l1.2,-2.8 " stroke="#a9b94e" stroke-width="1.3" fill="none" stroke-linecap="round"/><path d="M8.0,68.0 Q16.0,70.0 24.0,72.0" stroke="#447a33" stroke-width="5.6" fill="none" stroke-linecap="round"/><path d="M8.0,68.0 l3.0,3.8 M9.3,68.3 l4.9,-2.2 M10.7,68.7 l4.0,-1.8 M10.7,68.7 l2.7,3.4 M12.0,69.0 l4.7,-2.1 M12.0,69.0 l2.7,3.4 M14.7,69.7 l2.8,3.6 M16.0,70.0 l4.4,-1.9 M17.3,70.3 l3.5,4.4 M18.7,70.7 l3.1,-1.4 M20.0,71.0 l2.1,2.6 M22.7,71.7 l2.9,-1.3 M24.0,72.0 l3.0,-1.3 M24.0,72.0 l1.7,2.2 " stroke="#2a5520" stroke-width="1.3" fill="none" stroke-linecap="round"/><path d="M8.0,68.0 l3.0,-1.3 M13.3,69.3 l4.7,-2.1 M13.3,69.3 l2.6,3.4 M14.7,69.7 l5.7,-2.5 M16.0,70.0 l3.8,4.8 M17.3,70.3 l4.8,-2.1 M18.7,70.7 l2.5,3.2 M20.0,71.0 l2.6,-1.1 M21.3,71.3 l3.1,-1.4 M21.3,71.3 l2.1,2.6 M22.7,71.7 l1.6,2.0 " stroke="#5d9440" stroke-width="1.3" fill="none" stroke-linecap="round"/><path d="M9.3,68.3 l3.0,3.8 " stroke="#a9b94e" stroke-width="1.3" fill="none" stroke-linecap="round"/><path d="M6.0,70.0 Q8.5,74.5 11.0,79.0" stroke="#447a33" stroke-width="5.0" fill="none" stroke-linecap="round"/><path d="M6.0,70.0 l3.8,1.6 M6.0,70.0 l-0.5,3.5 M6.7,71.3 l4.8,2.1 M7.4,72.6 l4.7,2.0 M7.4,72.6 l-0.7,4.4 M8.1,73.9 l3.5,1.5 M8.9,75.1 l3.8,1.6 M8.9,75.1 l-0.5,3.3 M9.6,76.4 l3.8,1.6 " stroke="#2a5520" stroke-width="1.3" fill="none" stroke-linecap="round"/><path d="M6.7,71.3 l-0.7,4.6 M8.1,73.9 l-0.6,4.2 M9.6,76.4 l-0.5,3.3 M10.3,77.7 l2.2,0.9 M10.3,77.7 l-0.5,3.3 M11.0,79.0 l-0.4,2.5 " stroke="#5d9440" stroke-width="1.3" fill="none" stroke-linecap="round"/><path d="M11.0,79.0 l2.2,1.0 " stroke="#a9b94e" stroke-width="1.3" fill="none" stroke-linecap="round"/><path d="M38.0,27.0 Q27.5,34.2 14.8,35.8" stroke="#447a33" stroke-width="6.8" fill="none" stroke-linecap="round"/><path d="M38.0,27.0 l-2.5,4.0 M38.0,27.0 l-5.4,-1.6 M35.6,28.5 l-3.5,5.7 M35.6,28.5 l-5.6,-1.7 M34.4,29.2 l-4.7,-1.4 M32.0,30.6 l-2.9,4.7 M32.0,30.6 l-6.4,-2.0 M30.7,31.2 l-6.6,-2.0 M28.2,32.3 l-6.8,-2.1 M26.9,32.8 l-2.8,4.6 M24.3,33.7 l-2.8,4.6 M24.3,33.7 l-6.4,-1.9 M23.0,34.1 l-3.2,5.2 M20.3,34.8 l-3.6,-1.1 M19.0,35.1 l-3.2,-1.0 M17.6,35.4 l-2.3,3.7 M14.8,35.8 l-2.1,3.5 " stroke="#2a5520" stroke-width="1.3" fill="none" stroke-linecap="round"/><path d="M36.8,27.8 l-2.8,4.6 M36.8,27.8 l-4.8,-1.5 M34.4,29.2 l-3.4,5.5 M33.2,29.9 l-3.3,5.5 M33.2,29.9 l-6.8,-2.1 M29.5,31.8 l-3.4,5.5 M29.5,31.8 l-6.9,-2.1 M26.9,32.8 l-5.3,-1.6 M25.6,33.3 l-2.4,4.0 M25.6,33.3 l-4.8,-1.5 M23.0,34.1 l-4.3,-1.3 M21.7,34.5 l-2.1,3.4 M21.7,34.5 l-4.8,-1.5 M20.3,34.8 l-1.7,2.8 M19.0,35.1 l-2.4,3.9 M17.6,35.4 l-4.1,-1.3 M16.2,35.6 l-2.5,4.0 M14.8,35.8 l-3.2,-1.0 " stroke="#5d9440" stroke-width="1.3" fill="none" stroke-linecap="round"/><path d="M30.7,31.2 l-3.0,5.0 M28.2,32.3 l-3.1,5.1 M16.2,35.6 l-4.5,-1.4 " stroke="#a9b94e" stroke-width="1.3" fill="none" stroke-linecap="round"/><path d="M44.0,27.0 Q34.4,45.4 30.4,65.8" stroke="#447a33" stroke-width="6.2" fill="none" stroke-linecap="round"/><path d="M43.4,28.2 l-3.8,2.5 M42.8,29.4 l1.8,5.4 M42.8,29.4 l-5.0,3.2 M42.2,30.6 l-4.8,3.1 M41.6,31.8 l1.9,5.5 M41.6,31.8 l-4.2,2.7 M41.0,33.0 l1.8,5.4 M41.0,33.0 l-4.0,2.6 M40.5,34.2 l1.7,5.2 M39.4,36.6 l1.9,5.8 M39.4,36.6 l-5.5,3.6 M38.9,37.9 l2.2,6.7 M38.4,39.1 l1.6,4.6 M38.4,39.1 l-4.8,3.1 M37.9,40.3 l2.1,6.2 M37.9,40.3 l-5.3,3.5 M37.4,41.5 l2.2,6.7 M36.5,44.0 l2.1,6.2 M36.0,45.3 l1.6,4.8 M35.6,46.5 l2.0,5.8 M35.1,47.8 l1.4,4.1 M34.7,49.0 l1.7,5.1 M34.7,49.0 l-4.9,3.2 M33.9,51.6 l1.2,3.7 M33.5,52.9 l1.4,4.0 M33.5,52.9 l-4.0,2.6 M33.2,54.1 l-4.2,2.7 M32.8,55.4 l1.1,3.4 M32.1,58.0 l1.2,3.6 M31.8,59.3 l1.3,4.0 M31.5,60.6 l-2.4,1.5 M31.2,61.9 l1.0,3.0 M31.2,61.9 l-3.6,2.3 M30.7,64.5 l1.1,3.4 M30.4,65.8 l1.3,4.0 " stroke="#2a5520" stroke-width="1.3" fill="none" stroke-linecap="round"/><path d="M43.4,28.2 l1.2,3.7 M42.2,30.6 l1.7,5.0 M40.5,34.2 l-4.8,3.1 M39.9,35.4 l-5.0,3.2 M38.9,37.9 l-5.5,3.6 M37.4,41.5 l-5.7,3.7 M36.9,42.8 l1.5,4.6 M36.9,42.8 l-5.4,3.5 M36.0,45.3 l-4.7,3.0 M35.6,46.5 l-4.9,3.2 M35.1,47.8 l-3.8,2.4 M34.3,50.3 l1.5,4.5 M34.3,50.3 l-4.5,2.9 M33.2,54.1 l1.4,4.2 M32.8,55.4 l-2.8,1.8 M32.5,56.7 l1.1,3.1 M32.5,56.7 l-3.0,1.9 M32.1,58.0 l-3.0,1.9 M31.5,60.6 l1.0,3.0 M30.9,63.2 l0.9,2.7 M30.9,63.2 l-3.0,1.9 M30.7,64.5 l-3.4,2.2 M30.4,65.8 l-3.4,2.2 " stroke="#5d9440" stroke-width="1.3" fill="none" stroke-linecap="round"/><path d="M44.0,27.0 l1.6,4.7 M44.0,27.0 l-4.1,2.7 M39.9,35.4 l2.1,6.4 M36.5,44.0 l-5.1,3.3 M33.9,51.6 l-4.5,2.9 M31.8,59.3 l-3.2,2.1 " stroke="#a9b94e" stroke-width="1.3" fill="none" stroke-linecap="round"/><path d="M58.0,40.0 Q59.5,59.0 61.0,78.0" stroke="#447a33" stroke-width="5.0" fill="none" stroke-linecap="round"/><path d="M58.0,40.0 l2.6,2.8 M58.3,43.9 l2.6,2.8 M58.3,43.9 l-2.2,3.4 M58.4,45.2 l2.8,3.0 M58.4,45.2 l-2.0,3.1 M58.6,47.9 l-2.1,3.2 M58.7,49.2 l3.3,3.6 M58.8,50.5 l3.0,3.3 M58.8,50.5 l-2.1,3.3 M58.9,51.8 l2.9,3.1 M58.9,51.8 l-2.2,3.4 M59.1,54.4 l3.2,3.5 M59.1,54.4 l-2.2,3.3 M59.2,55.7 l-3.1,4.7 M59.3,57.0 l-2.5,3.8 M59.4,58.3 l-2.9,4.4 M59.6,59.7 l2.7,3.0 M59.7,61.0 l2.4,2.6 M59.8,62.3 l-2.5,3.8 M59.9,63.6 l2.9,3.2 M60.1,66.2 l2.5,2.8 M60.1,66.2 l-1.6,2.4 M60.2,67.5 l2.3,2.5 M60.3,68.8 l-1.8,2.7 M60.5,71.4 l2.2,2.5 M60.8,75.4 l1.6,1.8 M60.9,76.7 l-1.8,2.7 " stroke="#2a5520" stroke-width="1.3" fill="none" stroke-linecap="round"/><path d="M58.0,40.0 l-1.7,2.6 M58.1,41.3 l-2.3,3.5 M58.2,42.6 l2.6,2.8 M58.2,42.6 l-2.2,3.4 M58.5,46.6 l2.7,3.0 M58.5,46.6 l-2.6,4.0 M58.6,47.9 l3.4,3.7 M58.7,49.2 l-2.9,4.5 M59.0,53.1 l3.6,4.0 M59.2,55.7 l3.0,3.3 M59.3,57.0 l3.1,3.4 M59.4,58.3 l2.7,2.9 M59.6,59.7 l-2.4,3.6 M59.7,61.0 l-2.7,4.1 M59.8,62.3 l2.3,2.5 M59.9,63.6 l-1.9,2.9 M60.2,67.5 l-2.1,3.2 M60.3,68.8 l1.8,2.0 M60.4,70.1 l-1.9,2.9 M60.6,72.8 l2.1,2.3 M60.7,74.1 l1.9,2.1 M60.7,74.1 l-1.6,2.4 M60.8,75.4 l-1.4,2.1 M60.9,76.7 l1.7,1.9 M61.0,78.0 l1.8,1.9 M61.0,78.0 l-1.3,2.0 " stroke="#5d9440" stroke-width="1.3" fill="none" stroke-linecap="round"/><path d="M58.1,41.3 l2.4,2.6 M59.0,53.1 l-2.8,4.2 M60.0,64.9 l2.9,3.2 M60.0,64.9 l-2.0,3.0 M60.4,70.1 l1.6,1.8 M60.5,71.4 l-1.7,2.6 M60.6,72.8 l-1.7,2.7 " stroke="#a9b94e" stroke-width="1.3" fill="none" stroke-linecap="round"/><path d="M49.0,19.0 Q34.8,11.0 18.5,10.8" stroke="#447a33" stroke-width="6.8" fill="none" stroke-linecap="round"/><path d="M49.0,19.0 l-5.3,2.2 M49.0,19.0 l-3.5,-4.7 M47.8,18.3 l-3.0,-3.9 M46.6,17.7 l-4.0,-5.3 M45.4,17.1 l-4.5,1.9 M44.2,16.6 l-3.1,-4.1 M43.0,16.0 l-4.8,2.0 M41.8,15.5 l-7.0,2.9 M41.8,15.5 l-3.6,-4.8 M40.5,15.0 l-7.1,3.0 M40.5,15.0 l-3.6,-4.7 M39.3,14.5 l-6.5,2.7 M38.0,14.1 l-3.1,-4.1 M36.8,13.7 l-5.0,2.1 M35.5,13.3 l-6.7,2.8 M34.3,13.0 l-5.3,2.2 M34.3,13.0 l-4.1,-5.4 M33.0,12.6 l-5.5,2.3 M33.0,12.6 l-4.1,-5.4 M31.7,12.3 l-4.4,1.8 M31.7,12.3 l-3.7,-4.8 M30.4,12.1 l-5.4,2.2 M30.4,12.1 l-3.3,-4.4 M29.1,11.8 l-5.0,2.1 M25.2,11.2 l-3.6,1.5 M23.9,11.1 l-3.3,1.4 M22.5,11.0 l-1.9,-2.5 M21.2,10.9 l-4.1,1.7 M21.2,10.9 l-2.0,-2.7 M19.9,10.8 l-3.9,1.6 M18.5,10.8 l-3.3,1.4 " stroke="#2a5520" stroke-width="1.3" fill="none" stroke-linecap="round"/><path d="M47.8,18.3 l-4.8,2.0 M45.4,17.1 l-3.6,-4.7 M44.2,16.6 l-5.2,2.2 M43.0,16.0 l-3.9,-5.1 M39.3,14.5 l-3.4,-4.5 M38.0,14.1 l-6.2,2.6 M35.5,13.3 l-3.9,-5.2 M29.1,11.8 l-3.0,-3.9 M26.5,11.4 l-2.7,-3.6 M23.9,11.1 l-2.1,-2.8 M22.5,11.0 l-3.1,1.3 M19.9,10.8 l-2.2,-2.8 M18.5,10.8 l-2.7,-3.5 " stroke="#5d9440" stroke-width="1.3" fill="none" stroke-linecap="round"/><path d="M46.6,17.7 l-4.4,1.8 M36.8,13.7 l-4.6,-6.0 M27.8,11.6 l-3.9,1.6 M27.8,11.6 l-3.5,-4.6 M26.5,11.4 l-4.8,2.0 M25.2,11.2 l-2.9,-3.8 " stroke="#a9b94e" stroke-width="1.3" fill="none" stroke-linecap="round"/><path d="M49.0,19.0 Q61.2,9.7 75.4,3.9" stroke="#447a33" stroke-width="6.2" fill="none" stroke-linecap="round"/><path d="M49.0,19.0 l1.7,-4.0 M49.0,19.0 l5.2,0.7 M50.1,18.2 l3.9,0.5 M52.2,16.6 l6.1,0.9 M55.5,14.4 l5.8,0.8 M56.6,13.7 l2.6,-6.4 M56.6,13.7 l5.5,0.8 M57.7,13.0 l2.7,-6.6 M58.9,12.3 l5.6,0.8 M60.0,11.6 l2.1,-5.1 M60.0,11.6 l5.4,0.8 M61.1,10.9 l6.1,0.9 M62.3,10.3 l1.8,-4.5 M63.4,9.6 l6.3,0.9 M64.6,9.0 l1.8,-4.4 M64.6,9.0 l4.7,0.7 M65.8,8.4 l1.7,-4.0 M65.8,8.4 l5.4,0.8 M66.9,7.8 l1.9,-4.6 M66.9,7.8 l4.0,0.6 M68.1,7.2 l1.3,-3.0 M68.1,7.2 l3.5,0.5 M69.3,6.6 l3.7,0.5 M70.5,6.0 l1.4,-3.4 M71.7,5.5 l1.4,-3.4 M71.7,5.5 l3.6,0.5 M74.2,4.4 l1.4,-3.3 M75.4,3.9 l1.4,-3.3 " stroke="#2a5520" stroke-width="1.3" fill="none" stroke-linecap="round"/><path d="M50.1,18.2 l1.5,-3.6 M51.1,17.4 l1.6,-3.8 M51.1,17.4 l5.7,0.8 M52.2,16.6 l1.8,-4.4 M53.3,15.9 l1.9,-4.6 M54.4,15.1 l2.5,-6.1 M54.4,15.1 l5.0,0.7 M55.5,14.4 l2.2,-5.3 M61.1,10.9 l2.6,-6.4 M62.3,10.3 l6.6,0.9 M63.4,9.6 l2.0,-4.8 M69.3,6.6 l1.3,-3.1 M70.5,6.0 l3.1,0.4 M74.2,4.4 l3.0,0.4 M75.4,3.9 l4.0,0.6 " stroke="#5d9440" stroke-width="1.3" fill="none" stroke-linecap="round"/><path d="M53.3,15.9 l6.6,0.9 M57.7,13.0 l6.1,0.9 M58.9,12.3 l2.4,-5.7 M72.9,4.9 l1.1,-2.7 M72.9,4.9 l3.7,0.5 " stroke="#a9b94e" stroke-width="1.3" fill="none" stroke-linecap="round"/><path d="M52.0,19.0 Q70.0,14.7 88.5,16.4" stroke="#447a33" stroke-width="5.6" fill="none" stroke-linecap="round"/><path d="M54.6,18.4 l3.8,-3.4 M57.2,17.9 l3.2,2.1 M58.5,17.7 l3.1,-2.8 M58.5,17.7 l4.3,2.9 M59.7,17.4 l4.8,3.2 M61.0,17.2 l4.5,3.0 M62.3,17.0 l3.6,-3.3 M62.3,17.0 l4.4,2.9 M63.6,16.9 l3.2,-2.8 M63.6,16.9 l3.9,2.6 M64.9,16.7 l5.1,3.4 M66.2,16.6 l4.5,-4.0 M67.5,16.4 l4.5,3.0 M68.8,16.3 l5.1,3.4 M70.1,16.2 l3.9,2.6 M71.4,16.1 l3.7,2.5 M72.8,16.0 l3.2,2.1 M75.4,16.0 l3.3,2.2 M79.3,15.9 l2.2,-2.0 M79.3,15.9 l3.1,2.1 M80.6,15.9 l2.4,-2.1 M80.6,15.9 l2.3,1.6 M84.5,16.1 l2.2,1.5 M87.2,16.3 l2.7,-2.4 M88.5,16.4 l2.4,-2.1 M88.5,16.4 l3.0,2.0 " stroke="#2a5520" stroke-width="1.3" fill="none" stroke-linecap="round"/><path d="M52.0,19.0 l3.0,-2.6 M53.3,18.7 l3.8,2.6 M54.6,18.4 l4.2,2.8 M55.9,18.1 l3.0,-2.7 M55.9,18.1 l3.8,2.5 M57.2,17.9 l3.0,-2.7 M59.7,17.4 l3.3,-3.0 M61.0,17.2 l3.4,-3.1 M64.9,16.7 l3.6,-3.2 M66.2,16.6 l5.1,3.4 M67.5,16.4 l3.6,-3.2 M68.8,16.3 l4.6,-4.1 M71.4,16.1 l3.3,-3.0 M74.1,16.0 l3.1,-2.8 M75.4,16.0 l3.2,-2.9 M76.7,15.9 l2.5,-2.2 M76.7,15.9 l3.5,2.3 M78.0,15.9 l3.3,-2.9 M78.0,15.9 l3.8,2.6 M81.9,16.0 l2.9,1.9 M83.2,16.0 l3.0,2.0 M84.5,16.1 l2.4,-2.1 M85.9,16.2 l2.5,1.7 " stroke="#5d9440" stroke-width="1.3" fill="none" stroke-linecap="round"/><path d="M52.0,19.0 l3.2,2.1 M53.3,18.7 l2.5,-2.3 M70.1,16.2 l3.4,-3.0 M72.8,16.0 l3.0,-2.6 M74.1,16.0 l4.3,2.9 M81.9,16.0 l2.6,-2.3 M83.2,16.0 l2.1,-1.9 M85.9,16.2 l1.9,-1.7 M87.2,16.3 l3.2,2.1 " stroke="#a9b94e" stroke-width="1.3" fill="none" stroke-linecap="round"/><g transform="translate(64.1,29.5) rotate(-50)"><ellipse cx="0" cy="0" rx="8.2" ry="16.5" fill="#c9a265" stroke="#4a3517" stroke-width="0.8"/><path d="M-4.0,-15.2 Q0,-12.0 4.0,-15.2" fill="none" stroke="#6b4a1f" stroke-width="0.7"/><path d="M-6.0,-11.9 Q0,-8.7 6.0,-11.9" fill="none" stroke="#6b4a1f" stroke-width="0.7"/><path d="M-7.0,-8.6 Q0,-5.4 7.0,-8.6" fill="none" stroke="#6b4a1f" stroke-width="0.7"/><path d="M-7.6,-5.3 Q0,-2.1 7.6,-5.3" fill="none" stroke="#6b4a1f" stroke-width="0.7"/><path d="M-7.9,-2.0 Q0,1.2 7.9,-2.0" fill="none" stroke="#6b4a1f" stroke-width="0.7"/><path d="M-7.8,1.3 Q0,4.5 7.8,1.3" fill="none" stroke="#6b4a1f" stroke-width="0.7"/><path d="M-7.4,4.6 Q0,7.8 7.4,4.6" fill="none" stroke="#6b4a1f" stroke-width="0.7"/><path d="M-6.7,7.9 Q0,11.1 6.7,7.9" fill="none" stroke="#6b4a1f" stroke-width="0.7"/><path d="M-5.3,11.2 Q0,14.4 5.3,11.2" fill="none" stroke="#6b4a1f" stroke-width="0.7"/><path d="M-2.7,14.5 Q0,17.7 2.7,14.5" fill="none" stroke="#6b4a1f" stroke-width="0.7"/><path d="M-3.0,-13.9 V13.9 M3.0,-13.9 V13.9" stroke="#8a6730" stroke-width="0.5" fill="none"/></g><g transform="translate(49.1,46.4) rotate(2)"><ellipse cx="0" cy="0" rx="8.5" ry="17.8" fill="#c9a265" stroke="#4a3517" stroke-width="0.8"/><path d="M-4.0,-16.5 Q0,-13.3 4.0,-16.5" fill="none" stroke="#6b4a1f" stroke-width="0.7"/><path d="M-5.9,-13.3 Q0,-10.1 5.9,-13.3" fill="none" stroke="#6b4a1f" stroke-width="0.7"/><path d="M-7.0,-10.0 Q0,-6.8 7.0,-10.0" fill="none" stroke="#6b4a1f" stroke-width="0.7"/><path d="M-7.7,-6.8 Q0,-3.6 7.7,-6.8" fill="none" stroke="#6b4a1f" stroke-width="0.7"/><path d="M-8.1,-3.6 Q0,-0.4 8.1,-3.6" fill="none" stroke="#6b4a1f" stroke-width="0.7"/><path d="M-8.2,-0.4 Q0,2.8 8.2,-0.4" fill="none" stroke="#6b4a1f" stroke-width="0.7"/><path d="M-8.0,2.9 Q0,6.1 8.0,2.9" fill="none" stroke="#6b4a1f" stroke-width="0.7"/><path d="M-7.5,6.1 Q0,9.3 7.5,6.1" fill="none" stroke="#6b4a1f" stroke-width="0.7"/><path d="M-6.6,9.3 Q0,12.5 6.6,9.3" fill="none" stroke="#6b4a1f" stroke-width="0.7"/><path d="M-5.3,12.6 Q0,15.8 5.3,12.6" fill="none" stroke="#6b4a1f" stroke-width="0.7"/><path d="M-2.7,15.8 Q0,19.0 2.7,15.8" fill="none" stroke="#6b4a1f" stroke-width="0.7"/><path d="M-3.1,-14.9 V14.9 M3.1,-14.9 V14.9" stroke="#8a6730" stroke-width="0.5" fill="none"/></g></g>
<defs><linearGradient id="bandg" x1="0" y1="0" x2="0" y2="1"><stop offset="0" stop-color="#fbb77f"/><stop offset="0.06" stop-color="#f57c20"/><stop offset="0.94" stop-color="#f57c20"/><stop offset="1" stop-color="#c9601a"/></linearGradient><radialGradient id="circg" cx="0.5" cy="0.5" r="0.5"><stop offset="0.93" stop-color="#f57c20"/><stop offset="0.985" stop-color="#b55c17"/><stop offset="1" stop-color="#8a4a1a"/></radialGradient></defs>
<defs><clipPath id="circclip"><ellipse cx="326.6" cy="620.6" rx="72" ry="55.6"/></clipPath><filter id="soft2" x="-10%" y="-10%" width="120%" height="120%"><feGaussianBlur stdDeviation="0.9"/></filter></defs>
<g clip-path="url(#pageclip)"><rect x="385" y="595.3" width="720" height="52.7" rx="6" fill="url(#bandg)"/><ellipse cx="326.6" cy="620.6" rx="72" ry="55.6" fill="#f57c20"/><g clip-path="url(#circclip)"><path d="M300,570 A72,55.6 0 0 1 392,645" fill="none" stroke="#7a3d12" stroke-width="5.5" filter="url(#soft2)" opacity="0.9"/><rect x="300" y="643" width="95" height="5" fill="#fbb77f" opacity="0.35" filter="url(#soft2)"/></g></g></svg>
<span class="t" style="left:449.5px;top:184.4px;font-size:14px;color:#111;font-weight:700;transform:scaleX(1.344);">2</span>
<span class="t" style="left:449.7px;top:228.6px;font-size:14.5px;color:#111;font-weight:700;transform:scaleX(1.206);">1</span>
<span class="t" style="left:556.5px;top:211.0px;font-size:14.5px;color:#111;font-weight:700;transform:scaleX(1.206);">1</span>
<span class="t" style="left:889.7px;top:193.4px;font-size:18px;color:#1a1a1a;transform:scaleX(1.334);">*</span>
<span class="t" style="left:876.1px;top:218.1px;font-size:17.5px;color:#1a1a1a;">2 * 3</span>
<span class="t" style="left:889.7px;top:256.8px;font-size:18px;color:#1a1a1a;transform:scaleX(1.334);">*</span>
<span class="t" style="left:876.1px;top:283.7px;font-size:17.5px;color:#1a1a1a;">3 * 3</span>
<span class="t" style="left:373.3px;top:311.0px;font-size:19.5px;color:#1273be;font-weight:700;transform:scaleX(0.993);">Сана.</span>
<span class="t" style="left:418.7px;top:343.6px;font-size:19px;color:#1a1a1a;transform:scaleX(0.980);">Қанша болған?</span>
<span class="t" style="left:653.0px;top:343.6px;font-size:19px;color:#1a1a1a;transform:scaleX(1.017);">Не өзгерді?</span>
<span class="t" style="left:861.9px;top:343.6px;font-size:19px;color:#1a1a1a;transform:scaleX(0.982);">Қанша болды?</span>
<span class="t" style="left:425.9px;top:460.5px;font-size:19px;color:#1a1a1a;transform:scaleX(0.981);">Қанша болған?</span>
<span class="t" style="left:653.6px;top:460.5px;font-size:19px;color:#1a1a1a;transform:scaleX(1.011);">Не өзгерді?</span>
<span class="t" style="left:861.9px;top:460.5px;font-size:19px;color:#1a1a1a;transform:scaleX(0.975);">Қанша қалды?</span>
<span class="t" style="left:683.8px;top:427.3px;font-size:18.5px;color:#111;font-weight:700;transform:scaleX(1.023);">2 + 1</span>
<span class="t" style="left:684.6px;top:546.3px;font-size:18.5px;color:#111;font-weight:700;transform:scaleX(1.016);">3 – 1</span>
<span class="t" style="left:349.0px;top:598.3px;font-size:16px;color:#fff;font-weight:700;transform:scaleX(1.086);">18</span>
<span class="t" style="left:409.7px;top:602.7px;font-size:11.5px;color:#fff;font-weight:700;transform:scaleX(1.052);">1-тарау. Сандар және цифрлар</span>
</div>
<div id="titlebar"></div>
<div id="menurow"><div id="filetab"></div><div id="hometab"></div><div id="findbox"></div></div>
<div id="ribbon"></div><div id="handbtn"></div><div id="zoombox"></div><div id="getstd"></div>
<div class="sep" style="left:251px"></div>
<div class="sep" style="left:514px"></div>
<div class="sep" style="left:716px"></div>
<div class="sep" style="left:766px"></div>
<div class="sep" style="left:882px"></div>
<div id="tabstrip"></div>
<div id="leftnav"></div><div id="vscroll"></div>
<svg class="ov" viewBox="0 0 1366 768"><rect x="0" y="51" width="63" height="1" fill="#fff"/>
<rect x="6" y="5" width="16" height="16" fill="#6b296f"/><rect x="18" y="4.6" width="4.4" height="4.2" fill="#f7f7f7"/><path d="M19,5.3 V7.9 H21.9 Z" fill="#6b296f"/>
<circle cx="13.6" cy="13.2" r="4.3" fill="#fff"/><ellipse cx="14.6" cy="13" rx="2.5" ry="2" fill="#6b296f" transform="rotate(-35 14.6 13)"/><path d="M14.2,12.6 L18.6,9.2 L16.8,13.8 Z" fill="#6b296f"/><path d="M15.2,9.6 L17.8,8.6" stroke="#fff" stroke-width="0.7"/>
<path d="M32.6,20.5 V7.6 H38 L39.5,9.4 H45.6 V13.5 H36 Z" fill="#fff" stroke="#ebb35e" stroke-width="1.3"/><path d="M32.3,21 L36,13 H48.2 L44,21 Z" fill="#ebb35e"/>
<rect x="57" y="7" width="14" height="14" fill="#c9b3d6"/><rect x="61" y="8" width="7" height="4.5" fill="#efe9f2"/><rect x="61" y="8" width="1.6" height="3.5" fill="#c9b3d6"/><rect x="60" y="17" width="8" height="2" fill="#f3eef5"/>
<rect x="83" y="6.5" width="10" height="7" fill="#fff" stroke="#7a7a7a" stroke-width="1"/><rect x="84" y="11" width="8" height="2" fill="#3f79bd"/><path d="M80,10 H83 V14 H93 V10 H96 V18 H80 Z" fill="#7a7a7a"/><rect x="83.5" y="16.5" width="9" height="5" fill="#fff" stroke="#7a7a7a" stroke-width="1"/><rect x="85" y="18" width="6" height="1" fill="#3f79bd"/>
<rect x="104.6" y="8.6" width="14.8" height="10.8" fill="#fff" stroke="#7a7a7a" stroke-width="1.2"/><rect x="106" y="13" width="8" height="1" fill="#7a7a7a"/><rect x="106" y="15" width="8" height="1" fill="#7a7a7a"/><rect x="106" y="17" width="8" height="1" fill="#7a7a7a"/><rect x="115" y="10" width="2" height="2" fill="#1f5fb0"/>
<path d="M131.5,12 V20.5 H141.5 V10 L138.5,7.5 H136" fill="#fff" stroke="#6e6e6e" stroke-width="1.1"/><path d="M138.5,7.5 V10 H141.5 Z" fill="#6e6e6e"/>
<g stroke="#d6452b" stroke-width="1.1" stroke-linecap="round"><path d="M132.3,6 V15"/><path d="M127.8,10.5 H136.8"/><path d="M129.1,7.3 L135.5,13.7"/><path d="M129.1,13.7 L135.5,7.3"/></g>
<path d="M161.5,19.8 A6,6 0 1 0 155.4,12.6" fill="none" stroke="#a4bfdf" stroke-width="1.9"/><path d="M152,11 L158.8,12 L154.8,16.8 Z" fill="#a4bfdf"/>
<path d="M182.5,19.8 A6,6 0 1 1 188.6,12.6" fill="none" stroke="#a4bfdf" stroke-width="1.9"/><path d="M192,11 L185.2,12 L189.2,16.8 Z" fill="#a4bfdf"/>
<rect x="199.5" y="10.8" width="6" height="1.2" fill="#111"/><path d="M199.5,13.3 H205.5 L202.5,17 Z" fill="#111"/>
<g fill="none" stroke="#555" stroke-width="1"><path d="M1233.5,8 V4.5 H1237 M1237.5,8.5 L1234,5"/><path d="M1246,8 V4.5 H1242.5 M1242,8.5 L1245.5,5"/><path d="M1233.5,13 V16.5 H1237 M1237.5,12.5 L1234,16"/><path d="M1246,13 V16.5 H1242.5 M1242,12.5 L1245.5,16"/></g>
<rect x="1270.8" y="8.8" width="10" height="5" rx="1.5" fill="none" stroke="#555" stroke-width="1.3"/>
<rect x="1309" y="6.6" width="7.4" height="6" rx="1.2" fill="none" stroke="#555" stroke-width="1.2"/><rect x="1306.2" y="10" width="7.4" height="6" rx="1.2" fill="#f0f0f0" stroke="#555" stroke-width="1.2"/>
<path d="M1343,7.2 L1352.6,15.4 M1352.6,7.2 L1343,15.4" stroke="#555" stroke-width="3" stroke-linecap="round"/><path d="M1343,7.2 L1352.6,15.4 M1352.6,7.2 L1343,15.4" stroke="#f0f0f0" stroke-width="1" stroke-linecap="round"/>
<path d="M1116,46 V32.5 H1121 L1122.5,34 H1129 V46 Z" fill="#eab464"/><path d="M1118,46 L1119.5,38 H1123" fill="none" stroke="#f6dfb7" stroke-width="1"/><circle cx="1125" cy="40.5" r="3.6" fill="#f3f3f3" stroke="#444" stroke-width="1.4"/><path d="M1127.8,43.3 L1131.5,46.6" stroke="#444" stroke-width="1.8"/>
<circle cx="1248" cy="36.8" r="4.2" fill="#eef6fc" stroke="#2c7ec4" stroke-width="1.7"/><path d="M1245,40 L1240,45" stroke="#2a5ea8" stroke-width="2" stroke-linecap="round"/>
<path d="M1275.5,39.4 L1275.2,40.9 L1273.3,41.2 L1272.7,42.1 L1273.1,44.0 L1271.8,44.8 L1270.3,43.8 L1269.1,44.0 L1268.1,45.6 L1266.6,45.3 L1266.3,43.4 L1265.4,42.8 L1263.5,43.2 L1262.7,41.9 L1263.7,40.4 L1263.5,39.2 L1261.9,38.2 L1262.2,36.7 L1264.1,36.4 L1264.7,35.5 L1264.3,33.6 L1265.6,32.8 L1267.1,33.8 L1268.3,33.6 L1269.3,32.0 L1270.8,32.3 L1271.1,34.2 L1272.0,34.8 L1273.9,34.4 L1274.7,35.7 L1273.7,37.2 L1273.9,38.4 Z" fill="none" stroke="#444" stroke-width="0.9"/><circle cx="1268.7" cy="38.8" r="2.2" fill="none" stroke="#444" stroke-width="0.9"/>
<path d="M1281,37.5 H1286.6 L1283.8,40.6 Z" fill="#111"/>
<path d="M1304,33 V44.5 L1296,38.8 Z" fill="none" stroke="#b9b9b9" stroke-width="1.1"/><path d="M1324.5,33 V44.5 L1332.5,38.8 Z" fill="none" stroke="#b9b9b9" stroke-width="1.1"/>
<path d="M1348.5,42.3 L1352.5,37.3 L1356.5,42.3" fill="none" stroke="#222" stroke-width="2.6" stroke-linejoin="round"/><path d="M1349.5,42 L1352.5,38.3 L1355.5,42" fill="none" stroke="#f0f0f0" stroke-width="0.8"/>
<defs><linearGradient id="hg" x1="0" y1="0" x2="0" y2="1"><stop offset="0.55" stop-color="#fff"/><stop offset="1" stop-color="#9c9c9c"/></linearGradient></defs>
<path d="M17,86 C16,81 13.5,78.5 11.5,75.5 C10.5,73.5 12.5,72.5 14.5,73.7 L19,77.5 L16.5,65 C16.2,62.8 19,62.3 19.6,64.4 L22,72.5 L22.6,62.4 C22.8,60.2 25.7,60.3 25.8,62.5 L26.3,72.3 L29.4,63.8 C30.2,61.8 32.8,62.6 32.4,64.8 L30.4,74 L34.2,68.3 C35.5,66.6 37.6,67.9 36.7,69.9 C34.5,74.5 33,79 32.3,86 Z" fill="url(#hg)" stroke="#3a3a3a" stroke-width="0.9" stroke-linejoin="round"/>
<text x="54.3" y="83.4" font-family="Liberation Serif,serif" font-size="32" font-weight="bold" fill="#2e6db4" textLength="20.5" lengthAdjust="spacingAndGlyphs">T</text>
<path d="M69,67.8 l13.5,14.7 l-5.5,0.8 l3.8,3.4 l-3.8,1.8 l-3.7,-3.7 l-4.3,2.7 Z" fill="#2e6db4"/>
<path d="M121,77 H114 Q111.3,77 111.3,74.3 V63 Q111.3,60.3 114,60.3 H135 Q137.7,60.3 137.7,63 V74.3 Q137.7,77 135,77 H126 L118.5,85.3 Z" fill="none" stroke="#2e6db4" stroke-width="1" stroke-dasharray="1.6 1.4"/>
<path d="M126.2,67.8 l13.5,14.7 l-5.5,0.8 l3.8,3.4 l-3.8,1.8 l-3.7,-3.7 l-4.3,2.7 Z" fill="#2e6db4"/>
<path d="M164.5,62.5 H169 L169.8,60.5 H174.2 L175,62.5 H179.3 V71.5 H164.5 Z" fill="#fff" stroke="#7a7a7a" stroke-width="1"/><circle cx="171.8" cy="66.9" r="2.7" fill="none" stroke="#7a7a7a" stroke-width="1"/>
<rect x="165" y="82" width="11.6" height="13.6" fill="#e8ad57"/><path d="M168,82.5 V80.5 H173.6 V82.5" fill="#fff" stroke="#7a7a7a" stroke-width="1"/><rect x="167.6" y="82" width="6.4" height="1.4" fill="#7a7a7a"/><path d="M171.3,86.8 H176.3 L179,89.3 V95.5 H171.3 Z" fill="#fff" stroke="#6a6a6a" stroke-width="1"/>
<path d="M239,86.2 H244.2 L241.6,89.2 Z" fill="#111"/>
<path d="M166.5,103.5 H173.5 L176.5,106.3 V115.7 H166.5 Z" fill="#fff" stroke="#6a6a6a" stroke-width="1"/><path d="M166,103 H169.6 V111 L167.8,109.6 L166,111 Z" fill="#7d3f98"/>
<path d="M268.5,61.5 H285 L288.7,65.2 V86.3 H268.5 Z" fill="#fff" stroke="#7a7a7a" stroke-width="1.1"/><path d="M285,61.5 V65.2 H288.7 Z" fill="#666"/>
<g fill="none" stroke="#3aa17a" stroke-width="1.1"><path d="M264.5,64 V58.6 H270"/><path d="M286.5,58.6 H292 V64"/><path d="M264.5,84 V89.5 H270"/><path d="M286.5,89.5 H292 V84"/></g>
<path d="M307.5,62 H313.3 L315.8,64.5 V71 H307.5 Z" fill="#fff" stroke="#6a6a6a" stroke-width="1"/>
<g fill="#3aa17a"><path d="M311.6,57.6 l2.4,2.6 h-4.8 Z"/><path d="M311.6,74.6 l2.4,-2.6 h-4.8 Z"/><path d="M303.8,66.5 l2.4,-2.4 v4.8 Z"/><path d="M319.4,66.5 l-2.4,-2.4 v4.8 Z"/></g>
<path d="M307.5,83.2 H313.3 L315.8,85.7 V92.5 H307.5 Z" fill="#fff" stroke="#6a6a6a" stroke-width="1"/>
<g fill="#3aa17a"><path d="M303.8,87.8 l2.4,-2.4 v4.8 Z"/><path d="M319.4,87.8 l-2.4,-2.4 v4.8 Z"/></g>
<path d="M307.5,105 H313.3 L315.8,107.5 V114.3 H307.5 Z" fill="#fff" stroke="#6a6a6a" stroke-width="1"/>
<g stroke="#3aa17a" stroke-width="1" fill="none"><path d="M304,102.5 l2.6,2.6 M304,104.6 v-2.1 h2.1"/><path d="M319.3,102.5 l-2.6,2.6 M319.3,104.6 v-2.1 h-2.1"/><path d="M304,117 l2.6,-2.6 M304,114.9 v2.1 h2.1"/><path d="M319.3,117 l-2.6,-2.6 M319.3,114.9 v2.1 h-2.1"/></g>
<circle cx="389.2" cy="64.8" r="5.6" fill="#fff" stroke="#7a7a7a" stroke-width="1.1"/><path d="M393.3,69 L398,73" stroke="#7a7a7a" stroke-width="1.8" stroke-linecap="round"/><rect x="386" y="64" width="6" height="1.6" fill="#3aa17a"/>
<circle cx="494" cy="64.8" r="5.6" fill="#fff" stroke="#7a7a7a" stroke-width="1.1"/><path d="M498.1,69 L503,73" stroke="#7a7a7a" stroke-width="1.8" stroke-linecap="round"/><rect x="491" y="64" width="6" height="1.6" fill="#3aa17a"/><rect x="493.2" y="61.8" width="1.6" height="6" fill="#3aa17a"/>
<path d="M473.8,65 H479.2 L476.5,68 Z" fill="#111"/>
<path d="M391,80.9 H397.6 V91.5 H394" fill="none" stroke="#7a7a7a" stroke-width="1" stroke-dasharray="1.5 1"/><g stroke="#999" stroke-width="0.8"><path d="M394,83.5 H396.5 M394,85.5 H396.5 M394,87.5 H396.5"/></g>
<rect x="383.5" y="88.5" width="10" height="7" fill="#fff" stroke="#7a7a7a" stroke-width="1"/><g stroke="#7a7a7a" stroke-width="0.9"><path d="M385.5,90.5 V93.7 M387.5,90.5 V93.7 M389.5,90.5 V93.7 M391.5,90.5 V93.7"/></g>
<path d="M383.2,82 H389.5 L387.6,83.8 Q391.5,84 392,87.6 H389 Q388.6,86 386,86.2 L384.8,87.6 Z" fill="#3aa17a"/>
<path d="M390,102.6 H383.6 V113 H387" fill="none" stroke="#7a7a7a" stroke-width="1" stroke-dasharray="1.5 1"/><g stroke="#999" stroke-width="0.8"><path d="M384.8,105 H387.3 M384.8,107 H387.3 M384.8,109 H387.3"/></g>
<rect x="387.8" y="110.3" width="10" height="7" fill="#fff" stroke="#7a7a7a" stroke-width="1"/><g stroke="#7a7a7a" stroke-width="0.9"><path d="M389.8,112.3 V115.5 M391.8,112.3 V115.5 M393.8,112.3 V115.5 M395.8,112.3 V115.5"/></g>
<path d="M398,103.6 H391.7 L393.6,105.4 Q389.7,105.6 389.2,109.2 H392.2 Q392.6,107.6 395.2,107.8 L396.4,109.2 Z" fill="#3aa17a"/>
<text x="539.3" y="84.3" font-family="Liberation Serif,serif" font-size="36" font-weight="bold" fill="#757575" textLength="22.6" lengthAdjust="spacingAndGlyphs">T</text>
<g transform="translate(553,89.3) rotate(-44.5)"><path d="M0,0 L3.4,-1.9 V1.9 Z" fill="#2e6db4"/><rect x="4.2" y="-1.9" width="15.5" height="3.8" fill="#2e6db4"/><rect x="20.4" y="-1.9" width="1.4" height="3.8" fill="#2e6db4"/><rect x="22.4" y="-1.9" width="1.2" height="3.8" fill="#2e6db4"/></g>
<path d="M603.3,76 H598 Q595.5,76 595.5,73.5 V61.8 Q595.5,59.3 598,59.3 H620 Q622.5,59.3 622.5,61.8 V73.5 Q622.5,76 620,76 H610 L603.3,84.4 Z" fill="#fff" stroke="#7a7a7a" stroke-width="1"/><g stroke="#666" stroke-width="1"><path d="M600,63.5 H618 M600,66.5 H618 M600,69.5 H618 M600,72.5 H618"/></g>
<g transform="translate(612,89.6) rotate(-42)"><path d="M0,0 L6,-0.9 V0.9 Z" fill="#2e6db4"/><path d="M5.5,-5 H8 V-2.6 H13.5 L15,-4.4 H16.4 V4.4 H15 L13.5,2.6 H8 V5 H5.5 Z" fill="#2e6db4"/></g>
<rect x="635" y="62" width="16" height="10" fill="#eab464"/>
<text x="635.6" y="70.2" font-family="Liberation Sans,sans-serif" font-size="10" font-weight="bold" fill="#5a5a5a" textLength="14.8" lengthAdjust="spacingAndGlyphs">abc</text>
<text x="637" y="93.6" font-family="Liberation Serif,serif" font-size="17" fill="#757575" textLength="12" lengthAdjust="spacingAndGlyphs">T</text><rect x="637" y="87" width="12" height="1.3" fill="#e9ad55"/>
<text x="639" y="113" font-family="Liberation Sans,sans-serif" font-size="12" fill="#555" textLength="8.3" lengthAdjust="spacingAndGlyphs">U</text><rect x="639" y="114" width="8.3" height="1.2" fill="#e9ad55"/>
<g transform="translate(727.4,85) rotate(-49.3)"><path d="M0,0 L3.5,-1.6 V1.6 Z" fill="#2e6db4"/><path d="M4,-2.2 H15 V2.2 H4 Z" fill="#2e6db4"/><rect x="16.2" y="-2.5" width="17" height="5" rx="2" fill="#2e6db4"/><rect x="22" y="-4.6" width="10" height="1.4" fill="#2e6db4"/></g>
<path d="M755.2,74.6 C749,74 744.5,75.2 744.3,77.6 C744,80.6 751,80.6 750,84 C748.8,87.8 735,88.8 729,86.6" fill="none" stroke="#2e6db4" stroke-width="1.4" stroke-linecap="round"/>
<path d="M750.2,114.2 H755 L752.6,116.9 Z" fill="#111"/>
<path d="M775,63.5 H782 V65 H781 L780.3,72 H776.2 L775.6,65 H775 Z" fill="#8d57a8"/><path d="M782.5,62 L787.5,58.8" stroke="#8d57a8" stroke-width="1.3"/><path d="M783,63.5 H790.6 V67" fill="none" stroke="#8d57a8" stroke-width="1.2"/><circle cx="786.6" cy="69.2" r="4.3" fill="#fff" stroke="#2e6db4" stroke-width="1.2"/><g stroke="#2e6db4" stroke-width="0.8" fill="none"><path d="M782.3000000000001,69.2 H790.9 M786.6,64.9 V73.5"/><ellipse cx="786.6" cy="69.2" rx="2.064" ry="4.3"/><path d="M782.945,67.05 H790.255 M782.945,71.35000000000001 H790.255"/></g>
<g transform="translate(775.6,94.8) rotate(-40)"><rect x="0" y="-1.3" width="9" height="2.6" fill="#8d57a8"/><rect x="2" y="1" width="1.6" height="2" fill="#8d57a8"/><rect x="5" y="1" width="1.6" height="2" fill="#8d57a8"/><rect x="8.5" y="-4.6" width="9" height="9.2" rx="2" fill="#8d57a8"/><rect x="15" y="-3.2" width="1.2" height="6.4" fill="#d9c5e3"/></g>
<path d="M776.8,102.8 H783.4 L787,106 V109 M781,115.8 H776.8 V102.8" fill="none" stroke="#8d57a8" stroke-width="1.1"/><path d="M783.2,103 V106.2 H786.8" fill="none" stroke="#8d57a8" stroke-width="1"/><g stroke="#8d57a8" stroke-width="0.9"><path d="M778.6,106 H781.6 M778.6,108.2 H783 M778.6,110.4 H781"/></g><circle cx="786.4" cy="113.3" r="4.3" fill="#fff" stroke="#2e6db4" stroke-width="1.2"/><g stroke="#2e6db4" stroke-width="0.8" fill="none"><path d="M782.1,113.3 H790.6999999999999 M786.4,109.0 V117.6"/><ellipse cx="786.4" cy="113.3" rx="2.064" ry="4.3"/><path d="M782.745,111.14999999999999 H790.055 M782.745,115.45 H790.055"/></g>
<path d="M36.5,176.5 L48,155.5 Q49.8,152.5 53,152.5 H181 Q184.5,152.5 186,155.5 L192,167" fill="none" stroke="#b5b5b5" stroke-width="1"/>
<path d="M0,176.5 H187.5" stroke="#b0b0b0" stroke-width="1"/><path d="M382,176.5 H1366" stroke="#b0b0b0" stroke-width="1"/>
<path d="M187.3,176.5 L198.5,155.5 Q200.3,152.5 203.5,152.5 H367 Q370.5,152.5 372,155.5 L382.2,176.5" fill="#fff" stroke="#b5b5b5" stroke-width="1"/><path d="M187.5,176.5 H382" stroke="#c9c9c9" stroke-width="1"/>
<path d="M361.2,163.6 L369,171.2 M369,163.6 L361.2,171.2" stroke="#111" stroke-width="1.5"/>
<path d="M1349.8,159.5 H1360.2 L1355,165.6 Z" fill="#111"/></svg>
<span class="t" style="left:546.2px;top:7.0px;font-size:13px;color:#333;transform:scaleX(0.943);">Математика 1-бөлім 1-сынып оқулық.pdf - Foxit PhantomPDF</span>
<span class="t" style="left:19.2px;top:34.1px;font-size:13.5px;color:#fff;transform:scaleX(0.863);">FILE</span>
<span class="t" style="left:75.2px;top:34.1px;font-size:13.5px;color:#000;transform:scaleX(0.954);">HOME</span>
<span class="t" style="left:138.2px;top:34.1px;font-size:13.5px;color:#333;transform:scaleX(0.861);-webkit-text-stroke:0.2px #333;">CONVERT</span>
<span class="t" style="left:222.2px;top:34.1px;font-size:13.5px;color:#333;transform:scaleX(0.898);-webkit-text-stroke:0.2px #333;">EDIT</span>
<span class="t" style="left:276.2px;top:34.1px;font-size:13.5px;color:#333;transform:scaleX(0.869);-webkit-text-stroke:0.2px #333;">COMMENT</span>
<span class="t" style="left:364.2px;top:34.1px;font-size:13.5px;color:#333;transform:scaleX(0.945);-webkit-text-stroke:0.2px #333;">VIEW</span>
<span class="t" style="left:421.2px;top:34.1px;font-size:13.5px;color:#333;transform:scaleX(0.896);-webkit-text-stroke:0.2px #333;">FORM</span>
<span class="t" style="left:482.2px;top:34.1px;font-size:13.5px;color:#333;transform:scaleX(0.862);-webkit-text-stroke:0.2px #333;">PROTECT</span>
<span class="t" style="left:564.2px;top:34.1px;font-size:13.5px;color:#333;transform:scaleX(0.873);-webkit-text-stroke:0.2px #333;">SHARE</span>
<span class="t" style="left:630.2px;top:34.1px;font-size:13.5px;color:#333;transform:scaleX(0.840);-webkit-text-stroke:0.2px #333;">HELP</span>
<span class="t" style="left:1141.7px;top:32.4px;font-size:12.5px;color:#777;transform:scaleX(0.908);">Find</span>
<span class="t" style="left:10.2px;top:94.0px;font-size:13px;color:#1e1e1e;transform:scaleX(0.919);-webkit-text-stroke:0.25px #1e1e1e;">Hand</span>
<span class="t" style="left:50.2px;top:94.0px;font-size:13px;color:#1e1e1e;transform:scaleX(0.970);-webkit-text-stroke:0.25px #1e1e1e;">Select</span>
<span class="t" style="left:56.2px;top:110.0px;font-size:13px;color:#1e1e1e;transform:scaleX(1.051);-webkit-text-stroke:0.25px #1e1e1e;">Text</span>
<span class="t" style="left:107.2px;top:94.0px;font-size:13px;color:#1e1e1e;transform:scaleX(0.956);-webkit-text-stroke:0.25px #1e1e1e;">Select</span>
<span class="t" style="left:93.7px;top:110.0px;font-size:13px;color:#1e1e1e;transform:scaleX(0.990);-webkit-text-stroke:0.25px #1e1e1e;">Annotation</span>
<span class="t" style="left:183.2px;top:60.0px;font-size:13px;color:#1e1e1e;transform:scaleX(0.947);-webkit-text-stroke:0.25px #1e1e1e;">SnapShot</span>
<span class="t" style="left:183.2px;top:82.0px;font-size:13px;color:#1e1e1e;transform:scaleX(0.890);-webkit-text-stroke:0.25px #1e1e1e;">Clipboard</span>
<span class="t" style="left:183.2px;top:104.0px;font-size:13px;color:#1e1e1e;transform:scaleX(0.924);-webkit-text-stroke:0.25px #1e1e1e;">Bookmark</span>
<span class="t" style="left:260.2px;top:94.0px;font-size:13px;color:#1e1e1e;transform:scaleX(0.984);-webkit-text-stroke:0.25px #1e1e1e;">Actual</span>
<span class="t" style="left:266.2px;top:110.0px;font-size:13px;color:#1e1e1e;transform:scaleX(0.833);-webkit-text-stroke:0.25px #1e1e1e;">Size</span>
<span class="t" style="left:323.2px;top:60.0px;font-size:13px;color:#1e1e1e;transform:scaleX(0.920);-webkit-text-stroke:0.25px #1e1e1e;">Fit Page</span>
<span class="t" style="left:323.2px;top:82.0px;font-size:13px;color:#1e1e1e;transform:scaleX(0.986);-webkit-text-stroke:0.25px #1e1e1e;">Fit Width</span>
<span class="t" style="left:323.2px;top:104.0px;font-size:13px;color:#1e1e1e;transform:scaleX(0.901);-webkit-text-stroke:0.25px #1e1e1e;">Fit Visible</span>
<span class="t" style="left:410.2px;top:60.0px;font-size:13px;color:#1e1e1e;transform:scaleX(1.022);-webkit-text-stroke:0.25px #1e1e1e;">93.56%</span>
<span class="t" style="left:402.2px;top:82.0px;font-size:13px;color:#1e1e1e;transform:scaleX(1.007);-webkit-text-stroke:0.25px #1e1e1e;">Rotate Left</span>
<span class="t" style="left:402.2px;top:104.0px;font-size:13px;color:#1e1e1e;transform:scaleX(0.976);-webkit-text-stroke:0.25px #1e1e1e;">Rotate Right</span>
<span class="t" style="left:524.2px;top:94.0px;font-size:13px;color:#1e1e1e;transform:scaleX(1.010);-webkit-text-stroke:0.25px #1e1e1e;">Typewriter</span>
<span class="t" style="left:595.7px;top:94.0px;font-size:13px;color:#1e1e1e;transform:scaleX(0.985);-webkit-text-stroke:0.25px #1e1e1e;">Note</span>
<span class="t" style="left:654.2px;top:60.0px;font-size:13px;color:#1e1e1e;transform:scaleX(0.960);-webkit-text-stroke:0.25px #1e1e1e;">Highlight</span>
<span class="t" style="left:654.2px;top:82.0px;font-size:13px;color:#1e1e1e;transform:scaleX(1.005);-webkit-text-stroke:0.25px #1e1e1e;">Strikeout</span>
<span class="t" style="left:654.2px;top:104.0px;font-size:13px;color:#1e1e1e;transform:scaleX(0.944);-webkit-text-stroke:0.25px #1e1e1e;">Underline</span>
<span class="t" style="left:729.7px;top:94.0px;font-size:13px;color:#1e1e1e;transform:scaleX(0.848);-webkit-text-stroke:0.25px #1e1e1e;">PDF</span>
<span class="t" style="left:724.7px;top:110.0px;font-size:13px;color:#1e1e1e;transform:scaleX(0.905);-webkit-text-stroke:0.25px #1e1e1e;">Sign</span>
<span class="t" style="left:794.2px;top:60.0px;font-size:13px;color:#1e1e1e;transform:scaleX(0.935);-webkit-text-stroke:0.25px #1e1e1e;">Purchase Now</span>
<span class="t" style="left:794.2px;top:82.0px;font-size:13px;color:#1e1e1e;transform:scaleX(0.985);-webkit-text-stroke:0.25px #1e1e1e;">Activate</span>
<span class="t" style="left:794.2px;top:104.0px;font-size:13px;color:#1e1e1e;transform:scaleX(0.992);-webkit-text-stroke:0.25px #1e1e1e;">Product Info</span>
<span class="t" style="left:111.3px;top:128.1px;font-size:12px;color:#5c5c5c;transform:scaleX(0.908);">Tools</span>
<span class="t" style="left:370.3px;top:128.1px;font-size:12px;color:#5c5c5c;transform:scaleX(0.870);">View</span>
<span class="t" style="left:590.8px;top:128.1px;font-size:12px;color:#5c5c5c;transform:scaleX(0.893);">Comment</span>
<span class="t" style="left:721.8px;top:128.1px;font-size:12px;color:#5c5c5c;transform:scaleX(0.959);">Protect</span>
<span class="t" style="left:791.0px;top:127.8px;font-size:12px;color:#fff;transform:scaleX(0.907);">Get Standard</span>
<span class="t" style="left:58.2px;top:160.0px;font-size:13px;color:#2a2a2a;transform:scaleX(1.040);">Start</span>
<span class="t" style="left:209.2px;top:160.0px;font-size:13px;color:#1a1a1a;transform:scaleX(0.953);">Математика 1-бөлім ...</span>
<div id="status"></div><div id="pagebox"></div>
<svg class="ov" viewBox="0 0 1366 768"><path d="M22.8,185 V194.2 L28.3,189.6 Z" fill="#111"/>
<path d="M10.5,214.5 H23 L26.6,218 V234.4 H10.5 Z" fill="#fff" stroke="#6f6f6f" stroke-width="1.1"/><path d="M23,214.5 V218 H26.6" fill="none" stroke="#6f6f6f" stroke-width="1"/><path d="M10,214 H15 V226 L12.5,223.6 L10,226 Z" fill="#7d3f98"/>
<path d="M9.4,273.5 V259.5 H19.5" fill="none" stroke="#2e6db4" stroke-width="1.2"/><path d="M12.4,276.5 V262.3 H22.5" fill="none" stroke="#2e6db4" stroke-width="1.2"/><rect x="15" y="264.8" width="12" height="14.8" fill="#2e6db4"/>
<path d="M13.5,305.3 H28.3 L21.5,311.3 H6.7 Z" fill="#fff" stroke="#2e6db4" stroke-width="1"/><path d="M13.5,319.7 H28.3 L21.5,325.7 H6.7 Z" fill="#fff" stroke="#2e6db4" stroke-width="1"/><path d="M13.5,312 H28.5 L21.5,319 H6.5 Z" fill="#2e6db4"/>
<path d="M7,349 H21 V360.3 H12 L8.6,363.4 V360.3 H7 Z" fill="#eab464"/><rect x="10" y="352" width="8" height="1.3" fill="#fff"/><rect x="10" y="355" width="8" height="1.3" fill="#fff"/>
<path d="M15.2,357 H29.3 V367.6 H27.8 V371 L24.4,367.6 H15.2 Z" fill="#6e6e6e"/><rect x="18" y="360" width="8.5" height="1.3" fill="#fff"/><rect x="18" y="363" width="8.5" height="1.3" fill="#fff"/>
<g transform="translate(17.6,404.3) rotate(-36) scale(0.8)" fill="none" stroke="#2e6db4" stroke-width="2"><path d="M7.5,-2.4 H-6.5 A2.4,2.4 0 0 0 -6.5,2.4 H8 A4.6,4.6 0 0 0 8,-6.8 H-7.5"/><path d="M-7.5,-6.8 A6.8,6.8 0 0 0 -7.5,6.8 H9"/></g>
<path d="M12.2,449 V445 A5.8,5.8 0 0 1 23.8,445 V449" fill="none" stroke="#e8ad4f" stroke-width="2.6"/><rect x="9" y="448.5" width="18" height="12.5" fill="#e8ad4f"/><circle cx="18" cy="453" r="1.5" fill="#fff"/><path d="M17.3,453 H18.7 L19.2,458 H16.8 Z" fill="#fff"/>
<g transform="translate(8.3,504.3) rotate(-46.8)"><path d="M0,0 L3.4,-1.7 V1.7 Z" fill="#2e6db4"/><rect x="4" y="-2" width="9" height="4" fill="#2e6db4"/><rect x="14" y="-2.3" width="11" height="4.6" rx="1.8" fill="#2e6db4"/><rect x="17" y="-4.4" width="8" height="1.3" fill="#2e6db4"/></g>
<path d="M21,501 L18.5,507 L21.3,505.6 L23,508.4 L24.7,505.6 L27.5,507 L25,501 Z" fill="#7d3f98"/><circle cx="23" cy="499.6" r="3.3" fill="#f0f0f0" stroke="#7d3f98" stroke-width="1.5"/>
<path d="M39.5,378 V421 M41.5,378 V421" stroke="#6f6f6f" stroke-width="1" stroke-dasharray="1 1.4"/>
<rect x="1349" y="177" width="17" height="521" fill="#f0f0f0"/>
<path d="M1352,181.3 H1363" stroke="#111" stroke-width="1.3"/><path d="M1354.6,180 H1360.4 L1357.5,177.4 Z" fill="#111"/><path d="M1354.6,182.6 H1360.4 L1357.5,185.2 Z" fill="#111"/>
<path d="M1354.6,197.2 L1357.6,193.4 L1360.6,197.2" fill="none" stroke="#444" stroke-width="2"/>
<rect x="1350" y="261" width="15" height="17" fill="#cdcdcd"/>
<path d="M1354.4,689 L1357.5,692.6 L1360.6,689" fill="none" stroke="#444" stroke-width="2"/>
<path d="M560.2,707 V720 L551.8,713.5 Z" fill="#111"/><rect x="561.6" y="707.2" width="2.8" height="12.6" fill="#111"/>
<path d="M586.6,707 V720 L578.4,713.5 Z" fill="#111"/>
<path d="M703,712.2 H708.4 L705.7,715.2 Z" fill="#111"/>
<path d="M722.3,707 V720 L730,713.5 Z" fill="#111"/>
<rect x="745" y="707.2" width="2.8" height="12.6" fill="#111"/><path d="M749,707 V720 L757.4,713.5 Z" fill="#111"/>
<rect x="769.5" y="706" width="10" height="9" fill="#fff" stroke="#7a7a7a" stroke-width="1"/><rect x="769.5" y="706" width="10" height="2" fill="#2e6db4"/><g stroke="#7a7a7a" stroke-width="0.8"><path d="M771.5,710 H777.5 M771.5,712.4 H777.5 M773.1,709 V714 M775.9,709 V714"/></g><rect x="775" y="712.6" width="10" height="9" fill="#fff" stroke="#6a6a6a" stroke-width="1"/><rect x="775" y="712.6" width="10" height="2" fill="#6a6a6a"/><g stroke="#6a6a6a" stroke-width="0.8"><path d="M777,716.6 H783 M777,719.0 H783 M778.6,715.6 V720.6 M781.4,715.6 V720.6"/></g><path d="M785.2,709.3 H780 M782.2,707 L779.6,709.3 L782.2,711.6" fill="none" stroke="#3aa17a" stroke-width="1.5"/>
<g opacity="0.45"><rect x="795.5" y="706" width="10" height="9" fill="#fff" stroke="#8a8a8a" stroke-width="1"/><rect x="795.5" y="706" width="10" height="2" fill="#8a8a8a"/><g stroke="#8a8a8a" stroke-width="0.8"><path d="M797.5,710 H803.5 M797.5,712.4 H803.5 M799.1,709 V714 M801.9,709 V714"/></g><rect x="801" y="712.6" width="10" height="9" fill="#fff" stroke="#8a8a8a" stroke-width="1"/><rect x="801" y="712.6" width="10" height="2" fill="#7aa3d0"/><g stroke="#8a8a8a" stroke-width="0.8"><path d="M803,716.6 H809 M803,719.0 H809 M804.6,715.6 V720.6 M807.4,715.6 V720.6"/></g><path d="M796,716.3 H800.6 M798.6,714 L801,716.3 L798.6,718.6" fill="none" stroke="#3aa17a" stroke-width="1.5"/></g>
<rect x="1030.5" y="707.5" width="10.5" height="13" fill="#fff" stroke="#7a7a7a" stroke-width="1"/><g stroke="#8a8a8a" stroke-width="0.9"><path d="M1032.5,710.5 H1039.0"/><path d="M1032.5,712.9 H1039.0"/><path d="M1032.5,715.3 H1039.0"/><path d="M1032.5,717.7 H1039.0"/></g>
<rect x="1050" y="705" width="24" height="18" fill="#d5b9e4"/><rect x="1055.5" y="706" width="10.5" height="9" fill="#fff" stroke="#7a7a7a" stroke-width="1"/><g stroke="#8a8a8a" stroke-width="0.9"><path d="M1057.5,709.0 H1064.0"/><path d="M1057.5,711.6 H1064.0"/></g><rect x="1055.5" y="718" width="10.5" height="5" fill="#fff" stroke="#7a7a7a" stroke-width="1"/><g stroke="#8a8a8a" stroke-width="0.9"><path d="M1057.5,720.7 H1064.0"/></g>
<rect x="1079.5" y="707.5" width="6.5" height="13" fill="#fff" stroke="#7a7a7a" stroke-width="1"/><rect x="1087.5" y="707.5" width="6.5" height="13" fill="#fff" stroke="#7a7a7a" stroke-width="1"/><g stroke="#8a8a8a" stroke-width="0.9"><path d="M1081,710.5 H1084.5"/><path d="M1081,712.9 H1084.5"/><path d="M1081,715.3 H1084.5"/><path d="M1081,717.7 H1084.5"/></g><g stroke="#8a8a8a" stroke-width="0.9"><path d="M1089,710.5 H1092.5"/><path d="M1089,712.9 H1092.5"/><path d="M1089,715.3 H1092.5"/><path d="M1089,717.7 H1092.5"/></g>
<g fill="none" stroke="#7a7a7a" stroke-width="1"><path d="M1105,713 H1111.5 V706"/><path d="M1120,713 H1113.5 V706"/><path d="M1105,716 H1111.5 V722.5"/><path d="M1120,716 H1113.5 V722.5"/></g><g stroke="#8a8a8a" stroke-width="0.9"><path d="M1105.5,707.6 H1110.0"/><path d="M1105.5,709.7 H1110.0"/><path d="M1105.5,711.8000000000001 H1110.0"/></g><g stroke="#8a8a8a" stroke-width="0.9"><path d="M1115,707.6 H1119.5"/><path d="M1115,709.7 H1119.5"/><path d="M1115,711.8000000000001 H1119.5"/></g><g stroke="#8a8a8a" stroke-width="0.9"><path d="M1105.5,718.2 H1110.0"/><path d="M1105.5,720.3000000000001 H1110.0"/></g><g stroke="#8a8a8a" stroke-width="0.9"><path d="M1115,718.2 H1119.5"/><path d="M1115,720.3000000000001 H1119.5"/></g>
<path d="M1204.8,711.6 H1210 L1207.4,714.6 Z" fill="#111"/>
<circle cx="1221.5" cy="712.7" r="6.8" fill="#fafafa" stroke="#333" stroke-width="1"/><path d="M1217.6,712.7 H1225.4" stroke="#333" stroke-width="1.1"/>
<path d="M1236,713.7 H1327" stroke="#333" stroke-width="1"/><rect x="1276" y="708.8" width="3.6" height="8.4" fill="#111"/><rect x="1280" y="710" width="1" height="6" fill="#444"/>
<circle cx="1339.3" cy="712.7" r="6.8" fill="#fafafa" stroke="#333" stroke-width="1"/><path d="M1335.4,712.7 H1343.2 M1339.3,708.8 V716.6" stroke="#333" stroke-width="1.1"/></svg>
<span class="t" style="left:602.9px;top:707.0px;font-size:13px;color:#1e1e1e;transform:scaleX(1.027);">18 / 140</span>
<span class="t" style="left:1142.5px;top:707.0px;font-size:13px;color:#444;transform:scaleX(1.013);">93.56%</span>
<div id="taskbar"></div>
<div class="tb" style="left:60px;width:89.0px"></div>
<div class="tb" style="left:150.5px;width:88.5px"></div>
<div class="tb" style="left:240.7px;width:88.6px"></div>
<div class="tb" style="left:333.3px;width:89.3px"></div>
<div class="tb" style="left:427px;width:88.6px"></div>
<div class="tb" style="left:517.2px;width:88.6px"></div>
<div class="tb" style="left:609.8px;width:89.2px"></div>
<div class="tb" style="left:700.7px;width:88.3px"></div>
<div class="tb act" style="left:792.7px;width:88.3px"></div>
<div class="tb" style="left:885px;width:87.7px"></div>
<svg class="ov" viewBox="0 0 1366 768"><path d="M11,739 L24,737 V749.3 H11 Z M25.6,736.8 L41,734.6 V749.3 H25.6 Z M11,750.8 H24 V763 L11,761 Z M25.6,750.8 H41 V765.4 L25.6,763.2 Z" fill="#fff"/>
<g transform="translate(66.2,732)"><path d="M5,0.5 H28 V28.5 H0.5 V6 Q0.5,0.5 5,0.5 Z" fill="#fdfdfe" stroke="#1d3f8f" stroke-width="1"/><path d="M2,14 Q10,3 27,2 V17 L18,24 L2,22 Z" fill="#c9daf3"/><path d="M14,2 H27 V12 Z" fill="#9fbbe8"/><path d="M2,22 L18,24 L27,17 V27.5 H2 Z" fill="#fff"/><path d="M19,15.5 L30,18 L27,28 L15,25.5 Z" fill="#fff" stroke="#d4deee" stroke-width="0.5"/><path d="M6,24.5 L20,27 M8,22.5 L18,24.4" stroke="#cfdcf0" stroke-width="0.8"/><text x="4" y="20.3" font-family="Liberation Sans,sans-serif" font-weight="bold" font-size="22" fill="#1552b5" stroke="#1552b5" stroke-width="0.9" textLength="20" lengthAdjust="spacingAndGlyphs">W</text></g>
<g transform="translate(157.2,732)"><path d="M5,0.5 H28 V28.5 H0.5 V6 Q0.5,0.5 5,0.5 Z" fill="#fdfdfe" stroke="#1d3f8f" stroke-width="1"/><path d="M2,14 Q10,3 27,2 V17 L18,24 L2,22 Z" fill="#c9daf3"/><path d="M14,2 H27 V12 Z" fill="#9fbbe8"/><path d="M2,22 L18,24 L27,17 V27.5 H2 Z" fill="#fff"/><path d="M19,15.5 L30,18 L27,28 L15,25.5 Z" fill="#fff" stroke="#d4deee" stroke-width="0.5"/><path d="M6,24.5 L20,27 M8,22.5 L18,24.4" stroke="#cfdcf0" stroke-width="0.8"/><text x="4" y="20.3" font-family="Liberation Sans,sans-serif" font-weight="bold" font-size="22" fill="#1552b5" stroke="#1552b5" stroke-width="0.9" textLength="20" lengthAdjust="spacingAndGlyphs">W</text></g>
<g transform="translate(247.5,732)"><path d="M5,0.5 H28 V28.5 H0.5 V6 Q0.5,0.5 5,0.5 Z" fill="#fdfdfe" stroke="#1d3f8f" stroke-width="1"/><path d="M2,14 Q10,3 27,2 V17 L18,24 L2,22 Z" fill="#c9daf3"/><path d="M14,2 H27 V12 Z" fill="#9fbbe8"/><path d="M2,22 L18,24 L27,17 V27.5 H2 Z" fill="#fff"/><path d="M19,15.5 L30,18 L27,28 L15,25.5 Z" fill="#fff" stroke="#d4deee" stroke-width="0.5"/><path d="M6,24.5 L20,27 M8,22.5 L18,24.4" stroke="#cfdcf0" stroke-width="0.8"/><text x="4" y="20.3" font-family="Liberation Sans,sans-serif" font-weight="bold" font-size="22" fill="#1552b5" stroke="#1552b5" stroke-width="0.9" textLength="20" lengthAdjust="spacingAndGlyphs">W</text></g>
<circle cx="355.5" cy="748.6" r="14.6" fill="#e04a3b"/><path d="M355.5,748.6 L342.86,741.3000000000001 A14.6,14.6 0 0 0 355.3,763.2 Z" fill="#2f9e4f"/><path d="M355.5,748.6 L355.3,763.2 A14.6,14.6 0 0 0 369.3,743.8000000000001 L355.5,743.8000000000001 Z" fill="#f5c73a"/><circle cx="355.5" cy="748.6" r="6.9" fill="#f4f4f4"/><circle cx="355.5" cy="748.6" r="5.4" fill="#3f7fe0"/>
<g transform="translate(433,733)"><defs><linearGradient id="fg433" x1="0" y1="0" x2="1" y2="0"><stop offset="0" stop-color="#f8e39a"/><stop offset="0.6" stop-color="#f1d06a"/><stop offset="1" stop-color="#e2b84a"/></linearGradient></defs><path d="M2,3 L9,0.5 L12,2.5 L20,1 L22,26 L9,30 L3,25 Z" fill="#e4bd55" stroke="#c79d38" stroke-width="0.7"/><path d="M2,3 L9,5 Q15,17 11,30 L4,25.5 Q7,14 2,3 Z" fill="url(#fg433)" stroke="#c9a23f" stroke-width="0.6"/><path d="M9,5 L20,2 Q26,13 23,26.5 L11,30 Q15,17 9,5 Z" fill="#f6dc86" stroke="#c9a23f" stroke-width="0.6"/><rect x="20.5" y="22.5" width="2" height="4" fill="#6f6a4a"/></g>
<g transform="translate(525,733)"><defs><linearGradient id="fg525" x1="0" y1="0" x2="1" y2="0"><stop offset="0" stop-color="#f8e39a"/><stop offset="0.6" stop-color="#f1d06a"/><stop offset="1" stop-color="#e2b84a"/></linearGradient></defs><path d="M2,3 L9,0.5 L12,2.5 L20,1 L22,26 L9,30 L3,25 Z" fill="#e4bd55" stroke="#c79d38" stroke-width="0.7"/><path d="M2,3 L9,5 Q15,17 11,30 L4,25.5 Q7,14 2,3 Z" fill="url(#fg525)" stroke="#c9a23f" stroke-width="0.6"/><path d="M9,5 L20,2 Q26,13 23,26.5 L11,30 Q15,17 9,5 Z" fill="#f6dc86" stroke="#c9a23f" stroke-width="0.6"/><rect x="20.5" y="22.5" width="2" height="4" fill="#6f6a4a"/></g>
<path d="M621,754 L616,763 L628,758 Z" fill="#35a836"/><circle cx="630.5" cy="745.2" r="14" fill="#3db53d"/><circle cx="630.5" cy="745.2" r="9.2" fill="none" stroke="#fff" stroke-width="2.6"/><circle cx="630.5" cy="745.2" r="3.4" fill="none" stroke="#fff" stroke-width="2.4"/><path d="M635.2,741 V748 Q636,751.5 639.2,749.4" fill="none" stroke="#fff" stroke-width="2.2"/><rect x="632.5" y="750.5" width="15" height="10.5" fill="#fff" stroke="#4a5a6a" stroke-width="1"/><path d="M632.5,750.5 L640,756.6 L647.5,750.5" fill="none" stroke="#4a5a6a" stroke-width="1"/>
<rect x="708" y="737" width="30.5" height="21.5" fill="#f6f8fb" stroke="#8aa0bb" stroke-width="1"/><path d="M708,737 L723.3,750.5 L738.5,737 M708,758.5 L719,747 M738.5,758.5 L727.5,747" fill="none" stroke="#8aa0bb" stroke-width="1"/>
<path d="M798.5,731.5 H823 L831,739.5 V763.5 H798.5 Z" fill="#6b296f"/><path d="M823,731.5 V739.5 H831 Z" fill="#b892c4"/><circle cx="813.5" cy="746" r="7" fill="#fff"/><circle cx="815.4" cy="745" r="3.7" fill="#6b296f"/><path d="M814,745 L822,739.5 L818.3,747 Z" fill="#6b296f"/>
<text x="806" y="761.6" font-family="Liberation Sans,sans-serif" font-weight="bold" font-size="8" fill="#fff" textLength="16" lengthAdjust="spacingAndGlyphs">PDF</text>
<rect x="893" y="736.5" width="22" height="24" rx="2" fill="#dfeaf5" stroke="#7fa3c8" stroke-width="1"/><rect x="915" y="738" width="4" height="21" fill="#9fc0df"/><circle cx="905.5" cy="748.5" r="10.5" fill="#f08a24" stroke="#fff" stroke-width="1.4"/><path d="M902,743 V754 L911.5,748.5 Z" fill="#fff"/>
<rect x="983.8" y="744" width="14.5" height="10" fill="#f4f6fa" stroke="#c7d3e0" stroke-width="0.8"/><path d="M983.8,744 L991,750 L998.3,744" fill="none" stroke="#7f93ab" stroke-width="1"/>
<circle cx="1015.4" cy="749.6" r="8" fill="#d8322f"/><path d="M1009,752 Q1014,742 1021.5,745.5 M1009.5,755 Q1016,747 1022.5,750" fill="none" stroke="#f6b5b0" stroke-width="1.5"/>
<path d="M1031,746.5 H1034.5 L1039,742.5 V757 L1034.5,753 H1031 Z" fill="#fff"/><path d="M1041,746.5 Q1043,749.7 1041,753 M1043.3,744.3 Q1046.6,749.7 1043.3,755.2" fill="none" stroke="#fff" stroke-width="1.1"/>
<path d="M1063.2,741.6 L1071.8,756.2 H1054.6 Z" fill="#e0392d" stroke="#f2d0cc" stroke-width="0.6"/><rect x="1062.3" y="746" width="1.9" height="5.6" fill="#fff"/><rect x="1062.3" y="752.8" width="1.9" height="1.9" fill="#fff"/>
<circle cx="1086.8" cy="749.5" r="8.2" fill="#fdfdfd"/><g fill="#f39a1f"><circle cx="1086.8" cy="745" r="2.7"/><circle cx="1086.8" cy="754" r="2.7"/><circle cx="1082.3" cy="749.5" r="2.7"/><circle cx="1091.3" cy="749.5" r="2.7"/></g><circle cx="1086.8" cy="749.5" r="2.4" fill="#e23b2e"/>
<circle cx="1110.8" cy="749.5" r="4.6" fill="#5b86d6"/><ellipse cx="1110.8" cy="749.8" rx="8" ry="2.4" fill="none" stroke="#e6ecf7" stroke-width="1.3" transform="rotate(-18 1110.8 749.8)"/>
<rect x="1128" y="749" width="9" height="6.5" fill="#dfe8f3" stroke="#5a6f8c" stroke-width="0.8"/><rect x="1127" y="756" width="11" height="1.8" fill="#44566f"/><circle cx="1137.6" cy="746.2" r="5.6" fill="#3f7fe0" stroke="#dbe7fb" stroke-width="0.9"/><rect x="1136.8" y="742.6" width="1.7" height="4.6" fill="#fff"/><rect x="1136.8" y="748.2" width="1.7" height="1.7" fill="#fff"/>
<path d="M1151,746.5 H1154.5 L1159,742.5 V757 L1154.5,753 H1151 Z" fill="#d8482f"/><path d="M1161,746.5 Q1163,749.7 1161,753 M1163.3,744.3 Q1166.6,749.7 1163.3,755.2" fill="none" stroke="#e8917f" stroke-width="1.1"/>
<circle cx="1183.5" cy="750.5" r="7.6" fill="#e8a92b"/><path d="M1183.5,750.5 L1176.4,747.7 A7.6,7.6 0 0 1 1186,743.3 Z" fill="#d8392f"/><path d="M1183.5,750.5 L1186,743.3 A7.6,7.6 0 0 1 1190.8,752.6 Z" fill="#3b8fd8"/><path d="M1183.5,750.5 L1190.8,752.6 A7.6,7.6 0 0 1 1180,757.2 Z" fill="#56b04a"/><path d="M1179,742.5 L1188,741" stroke="#fff" stroke-width="1.2"/>
<rect x="1205.6" y="742.4" width="8.8" height="14" rx="1" fill="none" stroke="#fff" stroke-width="1.3"/><rect x="1208" y="740.6" width="4" height="1.8" fill="#fff"/><rect x="1207.6" y="749" width="4.8" height="5.6" fill="#fff"/>
<g fill="#fff"><rect x="1223" y="752.5" width="2" height="2.2"/><rect x="1226.4" y="750.6" width="2" height="4.1"/><rect x="1229.8" y="748.4" width="2" height="6.3"/><rect x="1233.2" y="746" width="2" height="8.7"/><rect x="1236.6" y="743.6" width="2.2" height="11.1"/></g></svg>
<span class="t" style="left:101.8px;top:742.0px;font-size:12.5px;color:#fff;transform:scaleX(0.938);">Мате...</span>
<span class="t" style="left:192.8px;top:742.0px;font-size:12.5px;color:#fff;transform:scaleX(0.943);">Мате...</span>
<span class="t" style="left:282.8px;top:742.0px;font-size:12.5px;color:#fff;transform:scaleX(0.922);">Калье...</span>
<span class="t" style="left:375.2px;top:742.0px;font-size:12.5px;color:#fff;transform:scaleX(0.961);">Скач...</span>
<span class="t" style="left:468.6px;top:742.0px;font-size:12.5px;color:#fff;transform:scaleX(0.939);">мате...</span>
<span class="t" style="left:559.5px;top:742.0px;font-size:12.5px;color:#fff;transform:scaleX(0.976);">1-сы...</span>
<span class="t" style="left:651.9px;top:742.0px;font-size:12.5px;color:#fff;transform:scaleX(0.964);">Mail....</span>
<span class="t" style="left:742.0px;top:742.0px;font-size:12.5px;color:#fff;transform:scaleX(0.927);">99 не...</span>
<span class="t" style="left:834.6px;top:742.0px;font-size:12.5px;color:#fff;transform:scaleX(0.933);">Мате...</span>
<span class="t" style="left:927.1px;top:742.0px;font-size:12.5px;color:#fff;transform:scaleX(0.983);">Прои...</span>
<span class="t" style="left:1253.8px;top:743.1px;font-size:12.5px;color:#fff;transform:scaleX(0.973);">ҚАЗ</span>
<span class="t" style="left:1306.7px;top:734.7px;font-size:12.5px;color:#fff;transform:scaleX(0.886);">21:03</span>
<span class="t" style="left:1292.5px;top:751.4px;font-size:12.5px;color:#fff;transform:scaleX(0.884);">29.08.2016</span>
</body>
</html>
